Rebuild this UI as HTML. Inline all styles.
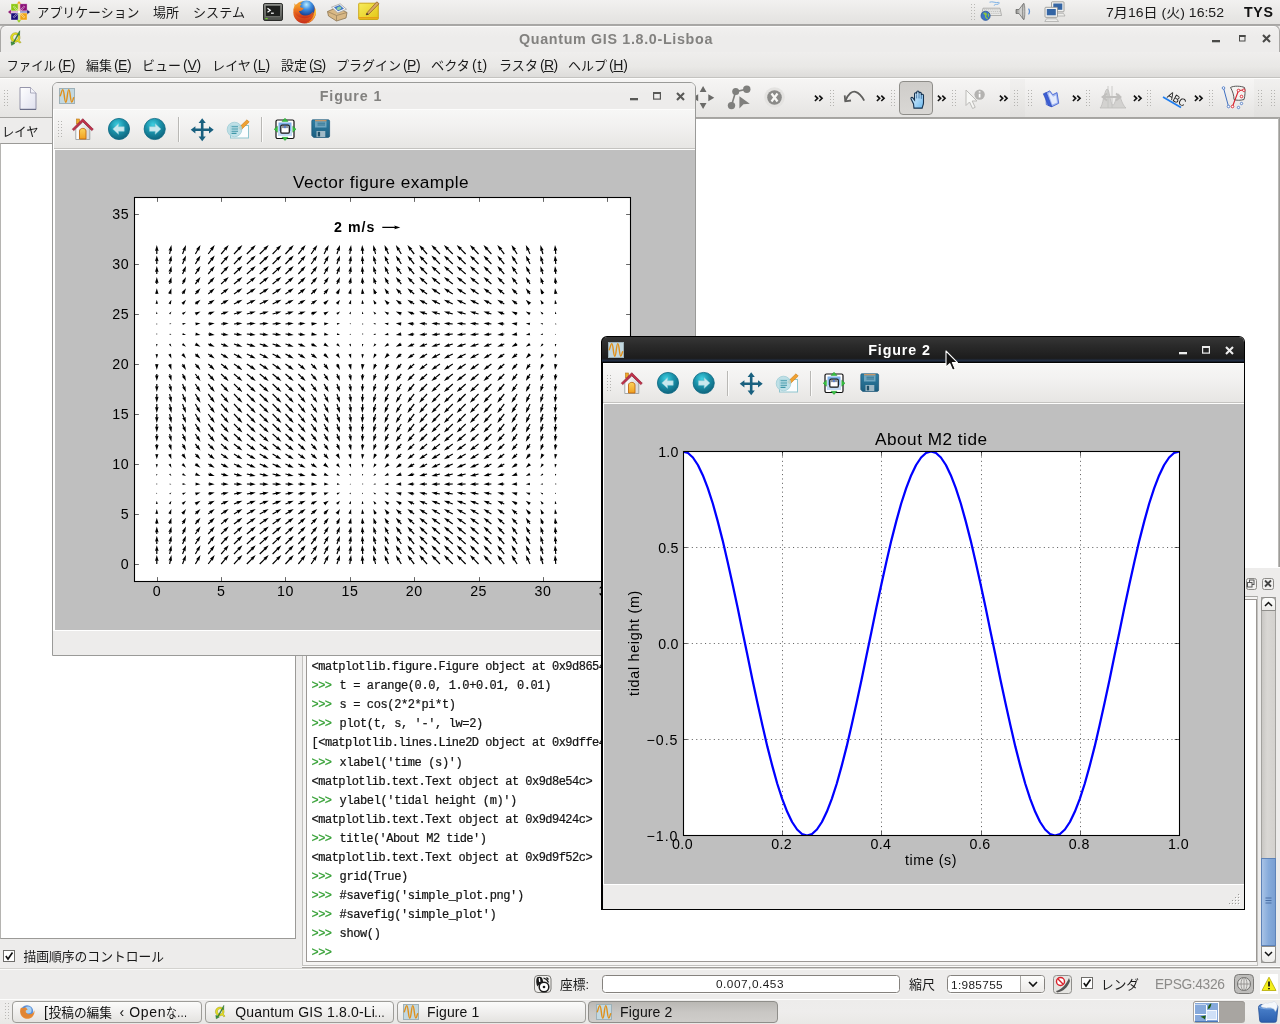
<!DOCTYPE html>
<html lang="ja"><head><meta charset="utf-8"><title>Quantum GIS 1.8.0-Lisboa</title>
<style>
html,body{margin:0;padding:0;background:#edeceb;}
body{width:1280px;height:1024px;overflow:hidden;font-family:"Liberation Sans",sans-serif;}
#screen{will-change:transform;position:relative;width:1280px;height:1024px;overflow:hidden;background:#edeceb;}
#screen div,#screen span.t,#screen svg.a{position:absolute;box-sizing:border-box;}
span.t{white-space:pre;font-family:"Liberation Sans",sans-serif;display:block;}
span.b{font-weight:bold;}
span.m{font-family:"Liberation Mono",monospace;-webkit-text-stroke:.22px currentColor;}
svg{display:block;overflow:visible;}
u{text-decoration:underline;}
svg text.j{font-family:"Liberation Sans","Noto Sans CJK JP",sans-serif;}

</style></head>
<body>
<div id="screen">
<div style="left:0px;top:0px;width:1280px;height:24px;background:linear-gradient(#f2f1f0,#e9e8e6 60%,#e3e2e0);"></div>
<div style="left:0px;top:24px;width:1280px;height:2px;background:linear-gradient(#a3a2a0,#b3b2b0);"></div>
<svg class="a" style="left:8px;top:1px;" width="22" height="22">
<path d="M11 0L13.400 3H8.600z" fill="#efa724"/><path d="M22 10.900L19 13.400V8.400z" fill="#262577"/><path d="M11 21.800L8.600 18.800H13.400z" fill="#9ccd2a"/><path d="M0 10.900L3 8.400V13.400z" fill="#932279"/>
<rect x="10.100" y="2.800" width="1.900" height="7.200" fill="#f7cf8a"/><rect x="10.100" y="12" width="1.900" height="7" fill="#cbe88f"/>
<rect x="3" y="10" width="7.200" height="1.900" fill="#d9a3cf"/><rect x="12" y="10" width="7" height="1.900" fill="#8f8cc4"/>
<rect x="3" y="2.800" width="7.100" height="7.100" fill="#8cc811"/><rect x="12" y="2.800" width="7.100" height="7.100" fill="#8b1078"/>
<rect x="3" y="12" width="7.100" height="7" fill="#1a0d7a"/><rect x="12" y="12" width="7.100" height="7" fill="#efa315"/>
<g stroke="#fff" stroke-width="2.300" opacity=".55" stroke-dasharray=".9 .7"><path d="M5.500 5.300L10.100 9.900M16.500 5.300L12 9.900M5.500 16.500L10.100 12M16.500 16.500L12 12"/></g>
<g fill="none" stroke="#fff" stroke-width=".7" opacity=".55"><rect x="3" y="2.800" width="7.100" height="7.100"/><rect x="12" y="2.800" width="7.100" height="7.100"/><rect x="3" y="12" width="7.100" height="7"/><rect x="12" y="12" width="7.100" height="7"/></g>
<circle cx="11.050" cy="10.950" r="1.200" fill="#fff" opacity=".9"/></svg>
<svg class="a" style="left:36px;top:3px" width="105" height="19" role="img" aria-label="アプリケーション"><text class="j" x="0.500" y="14" font-size="13" fill="#1a1a1a" textLength="103" lengthAdjust="spacingAndGlyphs">アプリケーション</text></svg>
<svg class="a" style="left:153px;top:3px" width="28" height="19" role="img" aria-label="場所"><text class="j" x="0" y="14" font-size="13" fill="#1a1a1a" textLength="26" lengthAdjust="spacingAndGlyphs">場所</text></svg>
<svg class="a" style="left:193px;top:3px" width="54" height="19" role="img" aria-label="システム"><text class="j" x="0" y="14" font-size="13" fill="#1a1a1a" textLength="52" lengthAdjust="spacingAndGlyphs">システム</text></svg>
<svg class="a" style="left:263px;top:3px;" width="20" height="18">
<defs><linearGradient id="tg" x1="0" y1="0" x2="0" y2="1"><stop offset="0" stop-color="#8f918c"/><stop offset="1" stop-color="#4b4d49"/></linearGradient></defs>
<rect x=".5" y=".5" width="19" height="17" rx="1.6" fill="url(#tg)" stroke="#2b2c2a"/>
<rect x="2.500" y="2.500" width="15" height="11" fill="#1f201e" stroke="#8a8c87" stroke-width=".6"/>
<path d="M4.500 5.200L7.300 7.200L4.500 9.200" fill="none" stroke="#fff" stroke-width="1.200"/>
<path d="M8 10.200H10.800" stroke="#fff" stroke-width="1.200"/>
<rect x="2.300" y="15" width="2.400" height="1.200" fill="#6fd12a"/></svg>
<svg class="a" style="left:292px;top:0px;" width="26" height="24">
<defs>
<radialGradient id="fg" cx=".5" cy=".25" r=".75"><stop offset="0" stop-color="#b9ecff"/><stop offset=".4" stop-color="#3f8fe0"/><stop offset="1" stop-color="#0f2f86"/></radialGradient>
<linearGradient id="fo" x1="0" y1="0" x2="0" y2="1"><stop offset="0" stop-color="#f6a52b"/><stop offset=".55" stop-color="#e8681c"/><stop offset="1" stop-color="#c62d1c"/></linearGradient>
<linearGradient id="fy" x1="0" y1="0" x2="0" y2="1"><stop offset="0" stop-color="#fbe04a"/><stop offset="1" stop-color="#f08a1e"/></linearGradient>
</defs>
<circle cx="12.600" cy="12.200" r="11.300" fill="url(#fo)"/>
<path d="M23.600 8.500c1 3.300.3 7.200-2 10.300c-2 2.700-5 4.400-8.300 4.700c4.600-1.800 7.800-5.400 8.800-9.600c.3-1.800.9-3.500 1.500-5.400z" fill="url(#fy)"/>
<circle cx="14.400" cy="8.700" r="8.200" fill="url(#fg)"/>
<path d="M1.600 9.500C2.200 5.600 5.800 2.800 9.800 3.900C8.600 4.700 8 5.800 8.200 6.900C9.300 7.700 10.600 8.100 11.900 8L10.500 9.800C9.600 10.900 8.200 11.300 6.900 11C7.500 13.600 10 15.500 13.200 15.600C16.500 15.700 19.500 14 21.300 11.600C20.500 16 17 18.500 12.500 18.300C6.500 18 2 14.500 1.600 9.500z" fill="url(#fo)"/>
<path d="M2.600 3.300c-.3.900-.3 1.800 0 2.700c-.7 1.100-1 2.300-1 3.500L4.500 6.500C4 5.300 3.300 4.300 2.600 3.300z" fill="#f09a28"/></svg>
<svg class="a" style="left:326px;top:3px;" width="22" height="19">
<path d="M1.500 8.500L11 4.500L21 9.500L20 15L10.500 18L2.500 13z" fill="#d9b885" stroke="#8a7350" stroke-width=".8"/>
<path d="M1.500 8.500L10.500 12.500L21 9.500M10.500 12.500V18" fill="none" stroke="#9c8460" stroke-width=".8"/>
<path d="M5.500 4.200L14.200 .8L20.500 6.200L11.800 10z" fill="#f4f4f2" stroke="#9a9a98" stroke-width=".7"/>
<path d="M8 4.300L13.800 2.100L18 5.700L12 8.200z" fill="#3f74c8"/>
<ellipse cx="13" cy="5.300" rx="2.400" ry="1.600" fill="#8fd0a0" transform="rotate(-18 13 5.300)"/></svg>
<svg class="a" style="left:358px;top:1px;" width="23" height="21">
<defs><linearGradient id="ng" x1="0" y1="0" x2="1" y2="1"><stop offset="0" stop-color="#f7ec5c"/><stop offset="1" stop-color="#e3c614"/></linearGradient></defs>
<rect x=".7" y="2.200" width="19.600" height="16.300" rx=".8" fill="url(#ng)" stroke="#c9a30c" stroke-width=".9"/>
<path d="M.7 16.800H20.300" stroke="#e8a117" stroke-width="1.600"/>
<path d="M8.800 12L18.800 .8L21 2.700L10.800 13.200L8.200 13.900z" fill="#d9a866" stroke="#8a5a22" stroke-width=".7"/>
<path d="M8.800 12L8.200 13.900L10.800 13.200z" fill="#222"/></svg>
<svg class="a" style="left:970px;top:4px;" width="6" height="18"><g fill="#b9b8b5"><rect x="1" y="0" width="1" height="1"/><rect x="1" y="3" width="1" height="1"/><rect x="1" y="6" width="1" height="1"/><rect x="1" y="9" width="1" height="1"/><rect x="1" y="12" width="1" height="1"/><rect x="1" y="15" width="1" height="1"/><rect x="4" y="0" width="1" height="1"/><rect x="4" y="3" width="1" height="1"/><rect x="4" y="6" width="1" height="1"/><rect x="4" y="9" width="1" height="1"/><rect x="4" y="12" width="1" height="1"/><rect x="4" y="15" width="1" height="1"/></g></svg>
<svg class="a" style="left:980px;top:1px;" width="24" height="21">
<path d="M9.500 1.200c3-1.200 6 1 9 .2c1.200-.3 1 1.300-.5 1.800c-2 .6-3.500-.4-3.800 1.500" fill="none" stroke="#7fb2e6" stroke-width="1"/>
<path d="M3 7.200H20L21.500 14.500H1.500z" fill="#e9e9e7" stroke="#a2a2a0" stroke-width=".8"/>
<path d="M4 8.800H19.500M3.500 10.600H20M3 12.400H20.500" stroke="#bdbdbb" stroke-width=".9" stroke-dasharray="1.200 .7"/>
<circle cx="5.600" cy="14.800" r="4.600" fill="#3b74c4" stroke="#244f94" stroke-width=".7"/>
<path d="M3.500 12.500c1-.8 2.500-.5 2.800.6c.3 1.100-1 1.400-.8 2.600c.2 1 1.500 1.300 2.100 2.300M8 12.800c.9.700 1 2 .3 2.800" fill="#8dc63f" stroke="#8dc63f" stroke-width="1.100"/></svg>
<svg class="a" style="left:1015px;top:1px;" width="18" height="22">
<defs><linearGradient id="vg" x1="0" y1="0" x2="1" y2="0"><stop offset="0" stop-color="#8c8c8a"/><stop offset=".6" stop-color="#dcdcda"/><stop offset="1" stop-color="#6f6f6d"/></linearGradient></defs>
<path d="M1 8.500H4L8.500 2.500C9.800 6 9.800 15 8.500 18.500L4 12.500H1z" fill="url(#vg)" stroke="#5f5f5d" stroke-width=".7"/>
<ellipse cx="8.800" cy="10.500" rx="1.100" ry="8.300" fill="#cfcfcd" stroke="#6a6a68" stroke-width=".6"/>
<path d="M13.500 7.600c1.300 1.500 1.300 4.300 0 5.800" fill="none" stroke="#5b8fd6" stroke-width="1.300"/></svg>
<svg class="a" style="left:1044px;top:1px;" width="23" height="22">
<g>
<rect x="7.500" y=".8" width="12.500" height="10" rx=".8" fill="#f1f1ef" stroke="#8e8e8c" stroke-width=".8"/>
<rect x="9.300" y="2.500" width="9" height="6.300" fill="#3465a4"/>
<path d="M11 12.300H19.500L21 15H10z" fill="#ededeb" stroke="#9a9a98" stroke-width=".6"/>
<rect x="1" y="6.300" width="12.500" height="10" rx=".8" fill="#f1f1ef" stroke="#8e8e8c" stroke-width=".8"/>
<rect x="2.800" y="8" width="9" height="6.300" fill="#3465a4"/>
<path d="M2.500 17.800H12.500L14.500 20.500H.8z" fill="#ededeb" stroke="#9a9a98" stroke-width=".6"/>
</g></svg>
<svg class="a" style="left:1105.3px;top:3px" width="122" height="19" role="img" aria-label="7月16日 (火) 16:52"><text class="j" x="1" y="14" font-size="13" fill="#1a1a1a" textLength="118" lengthAdjust="spacingAndGlyphs">7月16日 (火) 16:52</text></svg>
<span class="t b" style="left:1244.00px;top:4px;font-size:14.2px;line-height:16px;color:#111;letter-spacing:0.635px;">TYS</span>
<div style="left:0px;top:999px;width:1280px;height:25px;background:linear-gradient(#edeceb,#eeedec 50%,#e9e8e6);border-top:1px solid #fdfdfc;"></div>
<svg class="a" style="left:4px;top:1003px;" width="6" height="18"><g fill="#b9b8b5"><rect x="1" y="0" width="1" height="1"/><rect x="1" y="3" width="1" height="1"/><rect x="1" y="6" width="1" height="1"/><rect x="1" y="9" width="1" height="1"/><rect x="1" y="12" width="1" height="1"/><rect x="1" y="15" width="1" height="1"/><rect x="4" y="0" width="1" height="1"/><rect x="4" y="3" width="1" height="1"/><rect x="4" y="6" width="1" height="1"/><rect x="4" y="9" width="1" height="1"/><rect x="4" y="12" width="1" height="1"/><rect x="4" y="15" width="1" height="1"/></g></svg>
<div style="left:12px;top:1001px;width:190px;height:22px;background:linear-gradient(#fbfbfa,#efeeed 55%,#e4e3e0);border:1px solid #9d9c98;border-radius:4px;"></div>
<div style="left:205px;top:1001px;width:189px;height:22px;background:linear-gradient(#fbfbfa,#efeeed 55%,#e4e3e0);border:1px solid #9d9c98;border-radius:4px;"></div>
<div style="left:397px;top:1001px;width:189px;height:22px;background:linear-gradient(#fbfbfa,#efeeed 55%,#e4e3e0);border:1px solid #9d9c98;border-radius:4px;"></div>
<div style="left:588px;top:1001px;width:190px;height:22px;background:linear-gradient(#bab8b4,#c9c7c4 50%,#cfcdca);border:1px solid #8f8e8a;border-radius:4px;"></div>
<svg class="a" style="left:19px;top:1003.5px;" width="16" height="16"><circle cx="8" cy="7.500" r="6.200" fill="#5a8fd8"/><circle cx="9" cy="6" r="3.600" fill="#a9d2f5"/>
<path d="M1.800 4C.6 6.500 .8 10 3 12.500c2.500 2.700 6.800 3 9.600.9c2.300-1.700 3.300-4.400 2.700-7.200c-.2 1.400-.8 2.400-1.700 3.100c-1.800 1.500-4.600 1.400-6.100-.2c-.8-.9-.9-1.900-.6-2.700l1.800-.9c-.9-.5-1.400-1.200-1.500-2c-1.200-.2-2.300 0-3.300.7c-.8-.4-1.500-.5-2.100-.2z" fill="#e8852b" opacity=".95"/></svg>
<span class="t" style="left:44.00px;top:1004px;font-size:14px;line-height:16px;color:#111;">[</span>
<svg class="a" style="left:48px;top:1003px" width="66" height="19" role="img" aria-label="投稿の編集"><text class="j" x="0.500" y="14" font-size="13" fill="#111" textLength="63.500" lengthAdjust="spacingAndGlyphs">投稿の編集</text></svg>
<span class="t" style="left:119.60px;top:1004px;font-size:14px;line-height:16px;color:#111;">‹</span>
<span class="t" style="left:129.30px;top:1004px;font-size:14px;line-height:16px;color:#111;letter-spacing:0.688px;">Open</span>
<svg class="a" style="left:165.5px;top:1003px" width="24" height="19" role="img" aria-label="な…"><text class="j" x="0" y="14" font-size="13" fill="#111" textLength="21.500" lengthAdjust="spacingAndGlyphs">な…</text></svg>
<svg class="a" style="left:213px;top:1004px;" width="13" height="16" viewBox="0 0 15 16"><path d="M7.800 2.300c-3 .2-5.200 2.600-5 5.600c.2 2.800 2.600 4.800 5.300 4.600c1-.1 1.800-.4 2.500-.9l1.600 1.800l1.700-.6l-2-2.400c.7-1 1-2.100.9-3.400c-.2-2.800-2.400-4.900-5-4.700zm.2 2c1.500-.1 2.800 1.100 2.900 2.800c.1 1.800-1 3.200-2.600 3.300c-1.600.1-3-1.100-3.100-2.800c-.1-1.800 1.100-3.200 2.800-3.300z" fill="#e8e020" stroke="#8a8a10" stroke-width=".5"/>
<path d="M12.500 .3L10.200 4.200L5.500 12.700L3.200 12L3.800 15.800L7.300 13.800L6.300 13.100L11 4.700L12.300 5.100z" fill="#3a9a3a" stroke="#1e5a1e" stroke-width=".5"/></svg>
<span class="t" style="left:235.30px;top:1004px;font-size:14px;line-height:16px;color:#111;letter-spacing:0.181px;">Quantum GIS 1.8.0-Li</span>
<svg class="a" style="left:373.5px;top:1003px" width="13" height="19" role="img" aria-label="…"><text class="j" x="0" y="14" font-size="13" fill="#111" textLength="11" lengthAdjust="spacingAndGlyphs">…</text></svg>
<svg class="a" style="left:403px;top:1004px;" width="16" height="16"><rect x=".5" y=".5" width="15" height="15" fill="#c3d8e0" stroke="#9eb1b8"/><path d="M1.300 7.800C2.300 5.500 2.800 1.600 3.800 1.600C5.300 1.600 5.300 14.300 6.800 14.300C8.300 14.300 8.300 1.600 9.800 1.600C11.300 1.600 11.300 14 12.800 14C13.800 14 14 10.500 14.700 9.700" fill="none" stroke="#e0901a" stroke-width="1.400" stroke-linecap="round"/></svg>
<span class="t" style="left:427.00px;top:1004px;font-size:14px;line-height:16px;color:#111;letter-spacing:0.143px;">Figure 1</span>
<svg class="a" style="left:596px;top:1004px;" width="16" height="16"><rect x=".5" y=".5" width="15" height="15" fill="#c3d8e0" stroke="#9eb1b8"/><path d="M1.300 7.800C2.300 5.500 2.800 1.600 3.800 1.600C5.300 1.600 5.300 14.300 6.800 14.300C8.300 14.300 8.300 1.600 9.800 1.600C11.300 1.600 11.300 14 12.800 14C13.800 14 14 10.500 14.700 9.700" fill="none" stroke="#e0901a" stroke-width="1.400" stroke-linecap="round"/></svg>
<span class="t" style="left:620.00px;top:1004px;font-size:14px;line-height:16px;color:#111;letter-spacing:0.143px;">Figure 2</span>
<div style="left:1193px;top:1001px;width:52px;height:21.5px;background:#a8a5a1;border-radius:3.500px;box-shadow:inset 0 1px 0 #9a9793;"></div>
<div style="left:1193.5px;top:1001.5px;width:25px;height:20.5px;background:#fff;border-radius:2px 0 0 2px;"></div>
<div style="left:1194.5px;top:1002.5px;width:23.5px;height:18.2px;background:#86a9db;"></div>
<div style="left:1194.5px;top:1020.5px;width:23.5px;height:1.3px;background:#4a77b8;"></div>
<div style="left:1194.5px;top:1013.8px;width:11.5px;height:1px;background:#fff;"></div>
<div style="left:1205.8px;top:1004.5px;width:1px;height:16px;background:#fff;"></div>
<div style="left:1194.5px;top:1003.6px;width:11.5px;height:1px;background:#fff;opacity:.55;"></div>
<div style="left:1206.3px;top:1009.5px;width:11.2px;height:10px;background:#cfe0f7;border:1px solid #f4f8fd;"></div>
<svg class="a" style="left:1206.5px;top:1003.3px;" width="5" height="7"><path d="M4.300 .3C2 1.500 .8 3.500 .8 6L2.800 5.200C3.800 3.800 4.300 2 4.300 .3z" fill="#1d5c16"/></svg>
<svg class="a" style="left:1199.5px;top:1014.5px;" width="7" height="5"><path d="M.3 1.800C2.500 .8 4.500 .8 5.800 .4C5.600 2 5.300 3.300 4.800 4.500C3.500 3 2 2.200 .3 1.800z" fill="#1d5c16"/></svg>
<svg class="a" style="left:1257px;top:1000.5px;" width="23" height="23"><defs><linearGradient id="trg" x1="0" y1="0" x2="0" y2="1"><stop offset="0" stop-color="#4f86cf"/><stop offset="1" stop-color="#2c5fae"/></linearGradient></defs>
<path d="M1.500 6.500C1.500 4.500 3 3.500 5 3.500H18C20 3.500 21 5 20.800 6.500L19.600 19.500C19.500 20.800 18.500 21.300 17.500 21.300H4.800C3.500 21.300 2.800 20.500 2.700 19.500z" fill="url(#trg)" stroke="#244f96" stroke-width=".8"/>
<path d="M2 6C5 8.500 17 8.500 20.500 6" fill="none" stroke="#7fa9e2" stroke-width="1"/>
<path d="M4 5.500C4.500 3 6.500 3.800 7.500 2.500C8.500 1.200 10 3 11.500 2C13 .8 14 2.200 15 1.500C16.500 .5 17.500 -.2 18.500 1.200C19.500 2.500 20.500 3.500 20.300 5.500C20 7.500 19.300 9.500 18.300 10.500C17.800 8 15 6.500 12 6.800C9 7 6 7 4 5.500z" fill="#f4f7fb" stroke="#c9d3e0" stroke-width=".5"/></svg>
<div style="left:0px;top:26px;width:1280px;height:26px;background:linear-gradient(#f1f0ef,#edeceb 40%,#edeceb);border-top:1px solid #fbfbfa;border-radius:6px 6px 0 0;"></div>
<div style="left:0px;top:25px;width:1280px;height:27px;border-left:1px solid #a9a8a6;border-right:1px solid #a9a8a6;border-top:1px solid #a9a8a6;border-radius:6px 6px 0 0;"></div>
<svg class="a" style="left:8px;top:30px;" width="15" height="16" viewBox="0 0 16 16"><path d="M7.800 2.300c-3 .2-5.200 2.600-5 5.600c.2 2.800 2.600 4.800 5.300 4.600c1-.1 1.800-.4 2.500-.9l1.600 1.800l1.700-.6l-2-2.400c.7-1 1-2.100.9-3.400c-.2-2.800-2.400-4.900-5-4.700zm.2 2c1.500-.1 2.800 1.100 2.900 2.800c.1 1.800-1 3.200-2.600 3.300c-1.600.1-3-1.100-3.100-2.800c-.1-1.800 1.100-3.200 2.800-3.300z" fill="#e8e020" stroke="#8a8a10" stroke-width=".5"/>
<path d="M12.500 .3L10.200 4.200L5.500 12.700L3.200 12L3.800 15.800L7.300 13.800L6.300 13.100L11 4.700L12.300 5.100z" fill="#3a9a3a" stroke="#1e5a1e" stroke-width=".5"/></svg>
<span class="t b" style="left:519.00px;top:31px;font-size:14.3px;line-height:16px;color:#82817f;letter-spacing:0.669px;">Quantum GIS 1.8.0-Lisboa</span>
<svg class="a" style="left:1212px;top:39.8px;" width="9" height="3"><rect x="0" y="0" width="8" height="2.300" fill="#4a4a48"/></svg>
<svg class="a" style="left:1238.5px;top:34.5px;" width="8" height="8"><rect x=".5" y=".5" width="5.500" height="5.500" fill="none" stroke="#4a4a48"/><rect x="0" y="0" width="6.500" height="2" fill="#4a4a48"/></svg>
<svg class="a" style="left:1261.5px;top:34px;" width="9" height="9"><path d="M1 1L8 8M8 1L1 8" stroke="#4a4a48" stroke-width="2.100" fill="none"/></svg>
<div style="left:0px;top:52px;width:1280px;height:26px;background:linear-gradient(#efeeed,#e9e8e6 60%,#dddcda);border-bottom:1px solid #c4c3c0;"></div>
<svg class="a" style="left:6px;top:56px" width="52" height="19" role="img" aria-label="ファイル"><text class="j" x="0.500" y="14" font-size="13" fill="#1a1a1a" textLength="49.500" lengthAdjust="spacingAndGlyphs">ファイル</text></svg>
<span class="t" style="left:58.00px;top:57px;font-size:14px;line-height:16px;color:#1a1a1a;letter-spacing:-0.297px;">(<u>F</u>)</span>
<svg class="a" style="left:86px;top:56px" width="28" height="19" role="img" aria-label="編集"><text class="j" x="0" y="14" font-size="13" fill="#1a1a1a" textLength="26" lengthAdjust="spacingAndGlyphs">編集</text></svg>
<span class="t" style="left:114.00px;top:57px;font-size:14px;line-height:16px;color:#1a1a1a;letter-spacing:-0.557px;">(<u>E</u>)</span>
<svg class="a" style="left:142px;top:56px" width="41" height="19" role="img" aria-label="ビュー"><text class="j" x="0" y="14" font-size="13" fill="#1a1a1a" textLength="39" lengthAdjust="spacingAndGlyphs">ビュー</text></svg>
<span class="t" style="left:183.00px;top:57px;font-size:14px;line-height:16px;color:#1a1a1a;letter-spacing:-0.224px;">(<u>V</u>)</span>
<svg class="a" style="left:212px;top:56px" width="41" height="19" role="img" aria-label="レイヤ"><text class="j" x="0" y="14" font-size="13" fill="#1a1a1a" textLength="39" lengthAdjust="spacingAndGlyphs">レイヤ</text></svg>
<span class="t" style="left:253.00px;top:57px;font-size:14px;line-height:16px;color:#1a1a1a;letter-spacing:-0.042px;">(<u>L</u>)</span>
<svg class="a" style="left:281px;top:56px" width="28" height="19" role="img" aria-label="設定"><text class="j" x="0" y="14" font-size="13" fill="#1a1a1a" textLength="26" lengthAdjust="spacingAndGlyphs">設定</text></svg>
<span class="t" style="left:309.00px;top:57px;font-size:14px;line-height:16px;color:#1a1a1a;letter-spacing:-0.724px;">(<u>S</u>)</span>
<svg class="a" style="left:336px;top:56px" width="67" height="19" role="img" aria-label="プラグイン"><text class="j" x="0" y="14" font-size="13" fill="#1a1a1a" textLength="65" lengthAdjust="spacingAndGlyphs">プラグイン</text></svg>
<span class="t" style="left:403.00px;top:57px;font-size:14px;line-height:16px;color:#1a1a1a;letter-spacing:-0.557px;">(<u>P</u>)</span>
<svg class="a" style="left:431px;top:56px" width="41" height="19" role="img" aria-label="ベクタ"><text class="j" x="0" y="14" font-size="13" fill="#1a1a1a" textLength="39" lengthAdjust="spacingAndGlyphs">ベクタ</text></svg>
<span class="t" style="left:472.00px;top:57px;font-size:14px;line-height:16px;color:#1a1a1a;letter-spacing:0.927px;">(<u>t</u>)</span>
<svg class="a" style="left:499px;top:56px" width="41" height="19" role="img" aria-label="ラスタ"><text class="j" x="0" y="14" font-size="13" fill="#1a1a1a" textLength="39" lengthAdjust="spacingAndGlyphs">ラスタ</text></svg>
<span class="t" style="left:540.00px;top:57px;font-size:14px;line-height:16px;color:#1a1a1a;letter-spacing:-0.646px;">(<u>R</u>)</span>
<svg class="a" style="left:568px;top:56px" width="41" height="19" role="img" aria-label="ヘルプ"><text class="j" x="0" y="14" font-size="13" fill="#1a1a1a" textLength="39" lengthAdjust="spacingAndGlyphs">ヘルプ</text></svg>
<span class="t" style="left:609.00px;top:57px;font-size:14px;line-height:16px;color:#1a1a1a;letter-spacing:-0.312px;">(<u>H</u>)</span>
<div style="left:0px;top:78px;width:1280px;height:40px;background:linear-gradient(#f6f5f4,#efeeed 45%,#e5e4e2);border-top:1px solid #fcfcfb;border-bottom:1px solid #a5a4a1;"></div>
<div style="left:1254px;top:79px;width:26px;height:38px;background:linear-gradient(#f1f0ef,#ebeae8 45%,#e1e0de);"></div>
<svg class="a" style="left:3px;top:89.5px;" width="6" height="18"><g fill="#b5b4b1"><rect x="1" y="0" width="1" height="1"/><rect x="1" y="3" width="1" height="1"/><rect x="1" y="6" width="1" height="1"/><rect x="1" y="9" width="1" height="1"/><rect x="1" y="12" width="1" height="1"/><rect x="1" y="15" width="1" height="1"/><rect x="4" y="0" width="1" height="1"/><rect x="4" y="3" width="1" height="1"/><rect x="4" y="6" width="1" height="1"/><rect x="4" y="9" width="1" height="1"/><rect x="4" y="12" width="1" height="1"/><rect x="4" y="15" width="1" height="1"/></g></svg>
<svg class="a" style="left:19px;top:87px;" width="18" height="24"><defs><linearGradient id="pg" x1="0" y1="0" x2="1" y2="1"><stop offset="0" stop-color="#ffffff"/><stop offset="1" stop-color="#dfe0ee"/></linearGradient></defs>
<path d="M1 .5H11.500L17 6V22.500H1z" fill="url(#pg)" stroke="#8a8aa2" stroke-width=".9"/><path d="M1 22.300H17" stroke="#5f6580" stroke-width="1"/>
<path d="M11.500 .5V6H17" fill="#f4f4fa" stroke="#9a9aae" stroke-width=".8"/></svg>
<svg class="a" style="left:692px;top:86px;" width="24" height="24"><path d="M11.100 .1L14.500 5.900H7.700zM11.100 22.900L14.500 17.100H7.700zM22.300 11.700L16.300 8.200V15.200zM.2 11.700L6.200 8.200V15.200z" fill="#6a6a68"/></svg>
<svg class="a" style="left:727px;top:85px;" width="26" height="26"><path d="M8.700 6.600L19.500 4.200M8.700 6.600L4.500 20.500" stroke="#7f7f7d" stroke-width="1.600"/>
<circle cx="8.700" cy="6.600" r="3.500" fill="#7f7f7d"/><circle cx="19.800" cy="4.200" r="3.700" fill="#7f7f7d"/><circle cx="4.500" cy="20.600" r="3.700" fill="#7f7f7d"/>
<path d="M12.400 11.300L22.800 18.800L16.500 19.200L12.400 23.500z" fill="#7f7f7d"/></svg>
<svg class="a" style="left:764px;top:87px;" width="22" height="22"><circle cx="10.500" cy="10.500" r="10.300" fill="#e4e3e1"/><circle cx="10.500" cy="10.500" r="7.300" fill="#8b8b89"/>
<path d="M7.500 6.500L13.500 14.500M13.500 6.500L7.500 14.500" stroke="#f7f7f5" stroke-width="2.200"/></svg>
<svg class="a" style="left:813.7px;top:95px;" width="10" height="7"><path d="M.9 .6L3.700 3.300L.9 6M5.300 .6L8.100 3.300L5.300 6" fill="none" stroke="#111" stroke-width="1.600"/></svg>
<svg class="a" style="left:829px;top:89.5px;" width="6" height="18"><g fill="#b5b4b1"><rect x="1" y="0" width="1" height="1"/><rect x="1" y="3" width="1" height="1"/><rect x="1" y="6" width="1" height="1"/><rect x="1" y="9" width="1" height="1"/><rect x="1" y="12" width="1" height="1"/><rect x="1" y="15" width="1" height="1"/><rect x="4" y="0" width="1" height="1"/><rect x="4" y="3" width="1" height="1"/><rect x="4" y="6" width="1" height="1"/><rect x="4" y="9" width="1" height="1"/><rect x="4" y="12" width="1" height="1"/><rect x="4" y="15" width="1" height="1"/></g></svg>
<svg class="a" style="left:843px;top:88px;" width="24" height="18"><path d="M2.400 13C5 5.500 9.500 3 12.500 3.800C16 4.700 19 8.500 21.200 12.600" fill="none" stroke="#5f5f5d" stroke-width="1.800"/><path d="M1.700 7.300L2.300 13.300L8 12.500" fill="none" stroke="#5f5f5d" stroke-width="1.800"/></svg>
<svg class="a" style="left:875.7px;top:95px;" width="10" height="7"><path d="M.9 .6L3.700 3.300L.9 6M5.300 .6L8.100 3.300L5.300 6" fill="none" stroke="#111" stroke-width="1.600"/></svg>
<svg class="a" style="left:890px;top:89.5px;" width="6" height="18"><g fill="#b5b4b1"><rect x="1" y="0" width="1" height="1"/><rect x="1" y="3" width="1" height="1"/><rect x="1" y="6" width="1" height="1"/><rect x="1" y="9" width="1" height="1"/><rect x="1" y="12" width="1" height="1"/><rect x="1" y="15" width="1" height="1"/><rect x="4" y="0" width="1" height="1"/><rect x="4" y="3" width="1" height="1"/><rect x="4" y="6" width="1" height="1"/><rect x="4" y="9" width="1" height="1"/><rect x="4" y="12" width="1" height="1"/><rect x="4" y="15" width="1" height="1"/></g></svg>
<div style="left:899px;top:81px;width:34px;height:34px;background:linear-gradient(#cfcdca,#d9d7d4);border:1px solid #8e8d89;border-radius:4px;"></div>
<svg class="a" style="left:909px;top:90px;" width="17" height="19" viewBox="0 0 17 22.500"><defs><linearGradient id="hg" x1="0" y1="0" x2="1" y2="1"><stop offset="0" stop-color="#f2f9fe"/><stop offset="1" stop-color="#6ab8ee"/></linearGradient></defs>
<path d="M4.300 21.500L3.800 16.500L.8 10.500C.3 9 2 8 3 9.300L5 12V4.500C5 2.800 7.300 2.800 7.400 4.500L7.600 2.500C7.800 .8 10.200 .8 10.300 2.500V4C10.600 2.300 13 2.500 13 4.200V6C13.400 4.600 15.600 4.800 15.600 6.500V15C15.600 17.500 14.500 19 14 21.500z" fill="url(#hg)" stroke="#16324f" stroke-width="1.300"/>
<path d="M7.500 5V10M10.300 4.500V10M13 6V10.500" stroke="#2a5f95" stroke-width=".9"/></svg>
<svg class="a" style="left:936.7px;top:95px;" width="10" height="7"><path d="M.9 .6L3.700 3.300L.9 6M5.300 .6L8.100 3.300L5.300 6" fill="none" stroke="#111" stroke-width="1.600"/></svg>
<svg class="a" style="left:951px;top:89.5px;" width="6" height="18"><g fill="#b5b4b1"><rect x="1" y="0" width="1" height="1"/><rect x="1" y="3" width="1" height="1"/><rect x="1" y="6" width="1" height="1"/><rect x="1" y="9" width="1" height="1"/><rect x="1" y="12" width="1" height="1"/><rect x="1" y="15" width="1" height="1"/><rect x="4" y="0" width="1" height="1"/><rect x="4" y="3" width="1" height="1"/><rect x="4" y="6" width="1" height="1"/><rect x="4" y="9" width="1" height="1"/><rect x="4" y="12" width="1" height="1"/><rect x="4" y="15" width="1" height="1"/></g></svg>
<svg class="a" style="left:965px;top:89px;" width="22" height="22"><path d="M1 1V16.500L4.500 13L7.600 19.500L10.200 18.300L7.200 12H12z" fill="#f7f7f5" stroke="#bcbbb8" stroke-width="1"/>
<circle cx="14.600" cy="5.600" r="5.200" fill="#b4b3b1"/><path d="M14.600 4.800V8.600M14.600 2.300V3.500" stroke="#fff" stroke-width="1.700"/></svg>
<svg class="a" style="left:998.7px;top:95px;" width="10" height="7"><path d="M.9 .6L3.700 3.300L.9 6M5.300 .6L8.100 3.300L5.300 6" fill="none" stroke="#111" stroke-width="1.600"/></svg>
<div style="left:1010px;top:79px;width:15px;height:38px;background:linear-gradient(#f1f0ef,#ebeae8 45%,#e1e0de);"></div>
<svg class="a" style="left:1013px;top:89.5px;" width="6" height="18"><g fill="#b5b4b1"><rect x="1" y="0" width="1" height="1"/><rect x="1" y="3" width="1" height="1"/><rect x="1" y="6" width="1" height="1"/><rect x="1" y="9" width="1" height="1"/><rect x="1" y="12" width="1" height="1"/><rect x="1" y="15" width="1" height="1"/><rect x="4" y="0" width="1" height="1"/><rect x="4" y="3" width="1" height="1"/><rect x="4" y="6" width="1" height="1"/><rect x="4" y="9" width="1" height="1"/><rect x="4" y="12" width="1" height="1"/><rect x="4" y="15" width="1" height="1"/></g></svg>
<svg class="a" style="left:1026.5px;top:89.5px;" width="6" height="18"><g fill="#b5b4b1"><rect x="1" y="0" width="1" height="1"/><rect x="1" y="3" width="1" height="1"/><rect x="1" y="6" width="1" height="1"/><rect x="1" y="9" width="1" height="1"/><rect x="1" y="12" width="1" height="1"/><rect x="1" y="15" width="1" height="1"/><rect x="4" y="0" width="1" height="1"/><rect x="4" y="3" width="1" height="1"/><rect x="4" y="6" width="1" height="1"/><rect x="4" y="9" width="1" height="1"/><rect x="4" y="12" width="1" height="1"/><rect x="4" y="15" width="1" height="1"/></g></svg>
<svg class="a" style="left:1042px;top:89.5px;" width="18" height="18" viewBox="0 0 21 21"><path d="M4.500 3.500L9 1L12.500 5.500L17.500 3L19.500 15.500L11.500 19.500L5 17z" fill="#a3b8f2" stroke="#3f5fd0" stroke-width="1"/>
<path d="M7.500 4.500L9.300 3.300L13 8L16.300 6L17.500 14.500L12 17z" fill="#e4ebfd"/>
<path d="M1.500 4.500L5 2.800L11.500 19.500L7.500 18.200z" fill="#3b5ed6" stroke="#2a46b0" stroke-width=".7"/></svg>
<svg class="a" style="left:1071.7px;top:95px;" width="10" height="7"><path d="M.9 .6L3.700 3.300L.9 6M5.300 .6L8.100 3.300L5.300 6" fill="none" stroke="#111" stroke-width="1.600"/></svg>
<svg class="a" style="left:1085px;top:89.5px;" width="6" height="18"><g fill="#b5b4b1"><rect x="1" y="0" width="1" height="1"/><rect x="1" y="3" width="1" height="1"/><rect x="1" y="6" width="1" height="1"/><rect x="1" y="9" width="1" height="1"/><rect x="1" y="12" width="1" height="1"/><rect x="1" y="15" width="1" height="1"/><rect x="4" y="0" width="1" height="1"/><rect x="4" y="3" width="1" height="1"/><rect x="4" y="6" width="1" height="1"/><rect x="4" y="9" width="1" height="1"/><rect x="4" y="12" width="1" height="1"/><rect x="4" y="15" width="1" height="1"/></g></svg>
<svg class="a" style="left:1099px;top:85px;" width="28" height="25"><path d="M1 23C4 21 5 6 8 4C10.500 3.500 11 18 13.500 20C16 21.500 17 10 19 9C21.500 8.500 22 19 27 23z" fill="#d3d2d0" stroke="#bebdbb" stroke-width=".8"/>
<path d="M9 1V23M13 1V23" stroke="#c2c1bf" stroke-width=".8"/><path d="M5 12H20M8 8.500L3.500 12L8 15.500M17 8.500L21.500 12L17 15.500" fill="none" stroke="#c0bfbd" stroke-width="1.800"/></svg>
<svg class="a" style="left:1132.7px;top:95px;" width="10" height="7"><path d="M.9 .6L3.700 3.300L.9 6M5.300 .6L8.100 3.300L5.300 6" fill="none" stroke="#111" stroke-width="1.600"/></svg>
<svg class="a" style="left:1146px;top:89.5px;" width="6" height="18"><g fill="#b5b4b1"><rect x="1" y="0" width="1" height="1"/><rect x="1" y="3" width="1" height="1"/><rect x="1" y="6" width="1" height="1"/><rect x="1" y="9" width="1" height="1"/><rect x="1" y="12" width="1" height="1"/><rect x="1" y="15" width="1" height="1"/><rect x="4" y="0" width="1" height="1"/><rect x="4" y="3" width="1" height="1"/><rect x="4" y="6" width="1" height="1"/><rect x="4" y="9" width="1" height="1"/><rect x="4" y="12" width="1" height="1"/><rect x="4" y="15" width="1" height="1"/></g></svg>
<svg class="a" style="left:1160px;top:88px" width="28" height="22"><text x="6.500" y="9.300" font-family="Liberation Sans,sans-serif" font-size="10.500" fill="#111" transform="rotate(29 6.500 9.300)" textLength="19.500" lengthAdjust="spacingAndGlyphs">ABC</text><path d="M3 9L21 19.500" stroke="#1f7ef0" stroke-width="1.800"/></svg>
<svg class="a" style="left:1193.7px;top:95px;" width="10" height="7"><path d="M.9 .6L3.700 3.300L.9 6M5.300 .6L8.100 3.300L5.300 6" fill="none" stroke="#111" stroke-width="1.600"/></svg>
<svg class="a" style="left:1208px;top:89.5px;" width="6" height="18"><g fill="#b5b4b1"><rect x="1" y="0" width="1" height="1"/><rect x="1" y="3" width="1" height="1"/><rect x="1" y="6" width="1" height="1"/><rect x="1" y="9" width="1" height="1"/><rect x="1" y="12" width="1" height="1"/><rect x="1" y="15" width="1" height="1"/><rect x="4" y="0" width="1" height="1"/><rect x="4" y="3" width="1" height="1"/><rect x="4" y="6" width="1" height="1"/><rect x="4" y="9" width="1" height="1"/><rect x="4" y="12" width="1" height="1"/><rect x="4" y="15" width="1" height="1"/></g></svg>
<svg class="a" style="left:1221px;top:85px;" width="28" height="26"><path d="M9.500 2.500C13 .5 20 1 23.500 2.500C24.500 6 24 11 23 14.500C20 15.500 15 15.500 13 14.500C13 10 11.500 6 9.500 2.500z" fill="#f4f3f1" stroke="#555" stroke-width="1"/>
<path d="M2.500 3L7.500 21.500" stroke="#3f6fc0" stroke-width="1"/><circle cx="2.500" cy="3" r="1.300" fill="#fff" stroke="#3f6fc0" stroke-width=".8"/><circle cx="7.500" cy="21.500" r="1.300" fill="#fff" stroke="#3f6fc0" stroke-width=".8"/>
<path d="M11.500 21.500L17.500 5.500L23 5" fill="none" stroke="#d8202a" stroke-width="1.100"/>
<g fill="#fff" stroke="#d8202a" stroke-width=".9"><circle cx="11.500" cy="21.500" r="1.300"/><circle cx="17.500" cy="5.500" r="1.300"/><circle cx="22.800" cy="5.200" r="1.300"/><circle cx="20.500" cy="11.500" r="1.300"/></g>
<g fill="#fff" stroke="#3f6fc0" stroke-width=".8"><circle cx="17.500" cy="22.500" r="1.200"/><circle cx="20.500" cy="18.500" r="1.200"/></g></svg>
<svg class="a" style="left:1257px;top:89.5px;" width="6" height="18"><g fill="#b5b4b1"><rect x="1" y="0" width="1" height="1"/><rect x="1" y="3" width="1" height="1"/><rect x="1" y="6" width="1" height="1"/><rect x="1" y="9" width="1" height="1"/><rect x="1" y="12" width="1" height="1"/><rect x="1" y="15" width="1" height="1"/><rect x="4" y="0" width="1" height="1"/><rect x="4" y="3" width="1" height="1"/><rect x="4" y="6" width="1" height="1"/><rect x="4" y="9" width="1" height="1"/><rect x="4" y="12" width="1" height="1"/><rect x="4" y="15" width="1" height="1"/></g></svg>
<svg class="a" style="left:1270px;top:89.5px;" width="6" height="18"><g fill="#b5b4b1"><rect x="1" y="0" width="1" height="1"/><rect x="1" y="3" width="1" height="1"/><rect x="1" y="6" width="1" height="1"/><rect x="1" y="9" width="1" height="1"/><rect x="1" y="12" width="1" height="1"/><rect x="1" y="15" width="1" height="1"/><rect x="4" y="0" width="1" height="1"/><rect x="4" y="3" width="1" height="1"/><rect x="4" y="6" width="1" height="1"/><rect x="4" y="9" width="1" height="1"/><rect x="4" y="12" width="1" height="1"/><rect x="4" y="15" width="1" height="1"/></g></svg>
<div style="left:297px;top:118px;width:983px;height:450px;background:#fff;border-top:1px solid #a9a8a5;"></div>
<div style="left:1278px;top:118px;width:2px;height:449px;background:linear-gradient(90deg,#c9c8c5,#8f8e8b);"></div>
<svg class="a" style="left:2px;top:122px" width="39" height="19" role="img" aria-label="レイヤ"><text class="j" x="0" y="14" font-size="13" fill="#1a1a1a" textLength="36.500" lengthAdjust="spacingAndGlyphs">レイヤ</text></svg>
<div style="left:0px;top:143px;width:296px;height:796px;background:#fff;border:1px solid #9b9a97;border-left:1px solid #b5b4b1;"></div>
<div style="left:3px;top:950px;width:12px;height:12px;background:#fff;border:1px solid #6e6d6a;"></div>
<svg class="a" style="left:4px;top:951px;" width="10" height="10"><path d="M1.800 5L4 8L8.500 1.500" fill="none" stroke="#111" stroke-width="1.600"/></svg>
<svg class="a" style="left:23px;top:947px" width="143" height="19" role="img" aria-label="描画順序のコントロール"><text class="j" x="0.500" y="14" font-size="13" fill="#1a1a1a" textLength="140.500" lengthAdjust="spacingAndGlyphs">描画順序のコントロール</text></svg>
<div style="left:297px;top:568px;width:983px;height:400px;background:#edeceb;"></div>
<div style="left:1245.5px;top:577.5px;width:11.5px;height:12px;border:1px solid #8c8b88;border-radius:2.500px;background:#f1f0ef;"></div>
<svg class="a" style="left:1247.0px;top:579px;" width="8" height="9"><rect x="2.500" y="1" width="4.500" height="4.500" fill="none" stroke="#555" stroke-width="1"/><rect x=".5" y="3.500" width="4.500" height="4.500" fill="#f1f0ef" stroke="#555" stroke-width="1"/></svg>
<div style="left:1262px;top:577.5px;width:11.5px;height:12px;border:1px solid #8c8b88;border-radius:2.500px;background:#f1f0ef;"></div>
<svg class="a" style="left:1263.7px;top:579px;" width="8" height="9"><path d="M1 1.500L7 7.500M7 1.500L1 7.500" stroke="#444" stroke-width="1.800"/></svg>
<div style="left:302px;top:596px;width:956px;height:370px;background:#f5f4f3;border:1px solid #c2c1be;border-top-color:#a9a8a5;"></div>
<div style="left:302px;top:966px;width:978px;height:1px;background:#fbfbfa;"></div>
<div style="left:306px;top:599px;width:951px;height:363px;background:#fff;border:1px solid #9b9794;"></div>
<span class="t m" style="left:311.60px;top:660px;font-size:12px;line-height:14px;color:#141414;letter-spacing:-0.523px;">&lt;matplotlib.figure.Figure object at 0x9d8654c&gt;</span>
<span class="t m" style="left:311.60px;top:679px;font-size:12px;line-height:14px;color:#35a035;letter-spacing:-0.563px;">&gt;&gt;&gt;</span>
<span class="t m" style="left:339.60px;top:679px;font-size:12px;line-height:14px;color:#141414;letter-spacing:-0.382px;">t = arange(0.0, 1.0+0.01, 0.01)</span>
<span class="t m" style="left:311.60px;top:698px;font-size:12px;line-height:14px;color:#35a035;letter-spacing:-0.563px;">&gt;&gt;&gt;</span>
<span class="t m" style="left:339.60px;top:698px;font-size:12px;line-height:14px;color:#141414;letter-spacing:-0.381px;">s = cos(2*2*pi*t)</span>
<span class="t m" style="left:311.60px;top:717px;font-size:12px;line-height:14px;color:#35a035;letter-spacing:-0.563px;">&gt;&gt;&gt;</span>
<span class="t m" style="left:339.60px;top:717px;font-size:12px;line-height:14px;color:#141414;letter-spacing:-0.382px;">plot(t, s, '-', lw=2)</span>
<span class="t m" style="left:311.60px;top:736px;font-size:12px;line-height:14px;color:#141414;letter-spacing:-0.523px;">[&lt;matplotlib.lines.Line2D object at 0x9dffe4c&gt;]</span>
<span class="t m" style="left:311.60px;top:756px;font-size:12px;line-height:14px;color:#35a035;letter-spacing:-0.563px;">&gt;&gt;&gt;</span>
<span class="t m" style="left:339.60px;top:756px;font-size:12px;line-height:14px;color:#141414;letter-spacing:-0.381px;">xlabel('time (s)')</span>
<span class="t m" style="left:311.60px;top:775px;font-size:12px;line-height:14px;color:#141414;letter-spacing:-0.523px;">&lt;matplotlib.text.Text object at 0x9d8e54c&gt;</span>
<span class="t m" style="left:311.60px;top:794px;font-size:12px;line-height:14px;color:#35a035;letter-spacing:-0.563px;">&gt;&gt;&gt;</span>
<span class="t m" style="left:339.60px;top:794px;font-size:12px;line-height:14px;color:#141414;letter-spacing:-0.381px;">ylabel('tidal height (m)')</span>
<span class="t m" style="left:311.60px;top:813px;font-size:12px;line-height:14px;color:#141414;letter-spacing:-0.523px;">&lt;matplotlib.text.Text object at 0x9d9424c&gt;</span>
<span class="t m" style="left:311.60px;top:832px;font-size:12px;line-height:14px;color:#35a035;letter-spacing:-0.563px;">&gt;&gt;&gt;</span>
<span class="t m" style="left:339.60px;top:832px;font-size:12px;line-height:14px;color:#141414;letter-spacing:-0.532px;">title('About M2 tide')</span>
<span class="t m" style="left:311.60px;top:851px;font-size:12px;line-height:14px;color:#141414;letter-spacing:-0.523px;">&lt;matplotlib.text.Text object at 0x9d9f52c&gt;</span>
<span class="t m" style="left:311.60px;top:870px;font-size:12px;line-height:14px;color:#35a035;letter-spacing:-0.563px;">&gt;&gt;&gt;</span>
<span class="t m" style="left:339.60px;top:870px;font-size:12px;line-height:14px;color:#141414;letter-spacing:-0.382px;">grid(True)</span>
<span class="t m" style="left:311.60px;top:889px;font-size:12px;line-height:14px;color:#35a035;letter-spacing:-0.563px;">&gt;&gt;&gt;</span>
<span class="t m" style="left:339.60px;top:889px;font-size:12px;line-height:14px;color:#141414;letter-spacing:-0.381px;">#savefig('simple_plot.png')</span>
<span class="t m" style="left:311.60px;top:908px;font-size:12px;line-height:14px;color:#35a035;letter-spacing:-0.563px;">&gt;&gt;&gt;</span>
<span class="t m" style="left:339.60px;top:908px;font-size:12px;line-height:14px;color:#141414;letter-spacing:-0.382px;">#savefig('simple_plot')</span>
<span class="t m" style="left:311.60px;top:927px;font-size:12px;line-height:14px;color:#35a035;letter-spacing:-0.563px;">&gt;&gt;&gt;</span>
<span class="t m" style="left:339.60px;top:927px;font-size:12px;line-height:14px;color:#141414;letter-spacing:-0.383px;">show()</span>
<span class="t m" style="left:311.60px;top:946px;font-size:12px;line-height:14px;color:#35a035;letter-spacing:-0.563px;">&gt;&gt;&gt;</span>
<div style="left:1261px;top:597px;width:15px;height:366px;background:linear-gradient(90deg,#c9c7c4,#d9d7d4 40%,#d3d1ce);border:1px solid #a3a29f;"></div>
<div style="left:1261px;top:597px;width:15px;height:14px;background:linear-gradient(#fdfdfc,#ecebe9);border:1px solid #8f8e8b;border-radius:4px 4px 0 0;"></div>
<svg class="a" style="left:1264px;top:601px;" width="9" height="6"><path d="M1 5L4.500 1.500L8 5" fill="none" stroke="#111" stroke-width="1.500"/></svg>
<div style="left:1261px;top:858px;width:15px;height:88px;background:linear-gradient(90deg,#a8c3e6,#86abdb 50%,#7a9fd2);border:1px solid #5e83b8;"></div>
<svg class="a" style="left:1265px;top:897px;" width="8" height="8"><path d="M.5 1H6.500M.5 3.500H6.500M.5 6H6.500" stroke="#4a6fa5" stroke-width="1"/></svg>
<div style="left:1261px;top:946px;width:15px;height:17px;background:linear-gradient(#fdfdfc,#ecebe9);border:1px solid #8f8e8b;border-radius:0 0 4px 4px;"></div>
<svg class="a" style="left:1264px;top:951px;" width="9" height="6"><path d="M1 1L4.500 4.500L8 1" fill="none" stroke="#111" stroke-width="1.500"/></svg>
<div style="left:0px;top:968px;width:1280px;height:30px;background:#edeceb;border-top:1px solid #d3d2cf;"></div>
<div style="left:0px;top:969px;width:1280px;height:1px;background:#fbfbfa;"></div>
<div style="left:302px;top:967px;width:978px;height:1px;background:#9d9a97;"></div>
<svg class="a" style="left:534px;top:975px;" width="18" height="18"><rect x=".5" y=".5" width="16.500" height="17" rx="3.500" fill="#f0efed" stroke="#6e6d6a" stroke-width=".9"/>
<path d="M3 2.500C5.500 .8 8.500 2 8.800 5L9.500 9.500C7 9 4.500 9.800 3.500 11.500C2 9 1.800 5 3 2.500z" fill="#1a1a1a"/><path d="M5.300 3.200L5.800 6.800" stroke="#fff" stroke-width="1.400"/>
<circle cx="10" cy="12" r="4.800" fill="#fff" stroke="#1a1a1a" stroke-width="1.500"/><circle cx="10" cy="12" r="1.300" fill="#1a1a1a"/>
<path d="M9.500 3C11.500 3.500 13.500 5 14.500 7.500M12.500 2.500L14.500 4.500" stroke="#1a1a1a" stroke-width="1.200" fill="none"/></svg>
<svg class="a" style="left:560px;top:975px" width="32" height="19" role="img" aria-label="座標:"><text class="j" x="0" y="14" font-size="13" fill="#1a1a1a" textLength="29" lengthAdjust="spacingAndGlyphs">座標:</text></svg>
<div style="left:602px;top:975px;width:298px;height:18px;background:#fff;border:1px solid #85827e;border-radius:3.500px;box-shadow:0 1px 0 #fbfbfa;"></div>
<span class="t" style="left:716.00px;top:977px;font-size:11.8px;line-height:14px;color:#1a1a1a;letter-spacing:0.516px;">0.007,0.453</span>
<svg class="a" style="left:909px;top:975px" width="28" height="19" role="img" aria-label="縮尺"><text class="j" x="0" y="14" font-size="13" fill="#1a1a1a" textLength="26" lengthAdjust="spacingAndGlyphs">縮尺</text></svg>
<div style="left:947px;top:975px;width:98px;height:18px;background:#fff;border:1px solid #85827e;border-radius:3.500px;box-shadow:0 1px 0 #fbfbfa;"></div>
<div style="left:1020px;top:976px;width:24px;height:16px;background:linear-gradient(#fdfdfc,#eceae8);border-left:1px solid #a9a8a5;border-radius:0 3px 3px 0;"></div>
<span class="t" style="left:951.00px;top:978px;font-size:11.8px;line-height:14px;color:#1a1a1a;letter-spacing:0.348px;">1:985755</span>
<svg class="a" style="left:1028px;top:981px;" width="10" height="7"><path d="M1 1L5 5L9 1" fill="none" stroke="#111" stroke-width="1.600"/></svg>
<svg class="a" style="left:1053px;top:975px;" width="19" height="19"><rect x=".5" y=".5" width="18" height="18" rx="3" fill="#e6e5e2" stroke="#8f8e8b"/>
<path d="M3 16C8 15 13 10 16 3L17 6C15 12 10 17 4 17.500z" fill="#555"/><circle cx="7.500" cy="6.500" r="4" fill="#fff" stroke="#d8202a" stroke-width="1.400"/><path d="M4.800 3.800L10.200 9.200" stroke="#d8202a" stroke-width="1.400"/></svg>
<div style="left:1081px;top:977px;width:12px;height:12px;background:#fff;border:1px solid #6e6d6a;"></div>
<svg class="a" style="left:1082px;top:978px;" width="10" height="10"><path d="M1.800 5L4 8L8.500 1.500" fill="none" stroke="#111" stroke-width="1.600"/></svg>
<svg class="a" style="left:1101px;top:975px" width="40" height="19" role="img" aria-label="レンダ"><text class="j" x="0" y="14" font-size="13" fill="#1a1a1a" textLength="38" lengthAdjust="spacingAndGlyphs">レンダ</text></svg>
<span class="t" style="left:1155.00px;top:977px;font-size:13.8px;line-height:15px;color:#8c8b89;letter-spacing:-0.375px;">EPSG:4326</span>
<svg class="a" style="left:1234px;top:974px;" width="20" height="20"><rect x=".5" y=".5" width="19" height="19" rx="4" fill="#bdbcba" stroke="#7a7977"/>
<circle cx="10" cy="10" r="6.500" fill="#e4e3e1" stroke="#6d6c6a" stroke-width="1"/><ellipse cx="10" cy="10" rx="3" ry="6.500" fill="none" stroke="#8a8987" stroke-width=".8"/><path d="M3.500 10H16.500M10 3.500V16.500" stroke="#8a8987" stroke-width=".8"/></svg>
<div style="left:1260px;top:974px;width:18px;height:20px;background:#fff;"></div>
<svg class="a" style="left:1261px;top:976px;" width="16" height="16"><path d="M8 1.200L15 14.500H1z" fill="#f4ef1c" stroke="#b5a800" stroke-width=".8"/><path d="M8 5.500V10.500M8 12V13.300" stroke="#111" stroke-width="1.700"/></svg>
<div style="left:52px;top:82px;width:644px;height:574px;background:#fff;border:1px solid #9a9a98;border-radius:6px 6px 0 0;"></div>
<div style="left:53px;top:83px;width:642px;height:26px;background:linear-gradient(#f1f0ef,#edeceb 40%);border-radius:5px 5px 0 0;"></div>
<svg class="a" style="left:59px;top:88px;" width="16" height="16"><rect x=".5" y=".5" width="15" height="15" fill="#c3d8e0" stroke="#9eb1b8"/><path d="M1.300 7.800C2.300 5.500 2.800 1.600 3.800 1.600C5.300 1.600 5.300 14.300 6.800 14.300C8.300 14.300 8.300 1.600 9.800 1.600C11.300 1.600 11.300 14 12.800 14C13.800 14 14 10.500 14.700 9.700" fill="none" stroke="#e0901a" stroke-width="1.400" stroke-linecap="round"/></svg>
<span class="t b" style="left:319.75px;top:88px;font-size:14.3px;line-height:16px;color:#82817f;letter-spacing:0.859px;">Figure 1</span>
<svg class="a" style="left:630px;top:97.8px;" width="9" height="3"><rect x="0" y="0" width="8" height="2.300" fill="#585856"/></svg>
<svg class="a" style="left:653px;top:92px;" width="9" height="9"><rect x=".6" y=".6" width="6.800" height="6.500" fill="none" stroke="#585856" stroke-width="1.200"/><rect x="0" y="0" width="8" height="2" fill="#585856"/></svg>
<svg class="a" style="left:675.5px;top:92px;" width="9" height="9"><path d="M1 1L8 8M8 1L1 8" stroke="#585856" stroke-width="2.100" fill="none"/></svg>
<div style="left:54px;top:109px;width:641px;height:41px;background:linear-gradient(#f7f7f6,#f2f1f0 40%,#e6e5e3);border-top:1px solid #fdfdfc;border-bottom:1px solid #fdfdfc;"></div>
<div style="left:54px;top:148px;width:641px;height:1px;background:#c4c3c0;"></div>
<svg class="a" style="left:57px;top:121px;" width="6" height="18"><g fill="#b5b4b1"><rect x="1" y="0" width="1" height="1"/><rect x="1" y="3" width="1" height="1"/><rect x="1" y="6" width="1" height="1"/><rect x="1" y="9" width="1" height="1"/><rect x="1" y="12" width="1" height="1"/><rect x="1" y="15" width="1" height="1"/><rect x="4" y="0" width="1" height="1"/><rect x="4" y="3" width="1" height="1"/><rect x="4" y="6" width="1" height="1"/><rect x="4" y="9" width="1" height="1"/><rect x="4" y="12" width="1" height="1"/><rect x="4" y="15" width="1" height="1"/></g></svg>
<svg class="a" style="left:71px;top:117px;" width="24" height="24"><defs><linearGradient id="hd" x1="0" y1="0" x2="0" y2="1"><stop offset="0" stop-color="#fbd35a"/><stop offset="1" stop-color="#f0a020"/></linearGradient>
<linearGradient id="hw" x1="0" y1="0" x2="1" y2="0"><stop offset="0" stop-color="#ffffff"/><stop offset="1" stop-color="#d4d7d9"/></linearGradient></defs>
<rect x="5.500" y="2" width="3" height="5" fill="#f0a828" stroke="#b8741a" stroke-width=".6"/>
<path d="M4.800 11.500V22.500H18.800V11.500L11.800 4.500z" fill="url(#hw)" stroke="#9aa0a3" stroke-width=".9"/>
<path d="M8.500 22V14C8.500 10.500 15 10.500 15 14V22z" fill="url(#hd)" stroke="#c26a10" stroke-width=".9"/>
<path d="M1.300 12.200L11.800 1.700L22.300 12.200L20.800 13.600L11.800 4.800L2.800 13.600z" fill="#c0304a" stroke="#8e1f35" stroke-width=".7"/></svg>
<svg class="a" style="left:0;top:0" width="1280" height="1024"><defs><radialGradient id="nb119" cx=".42" cy=".3" r=".75"><stop offset="0" stop-color="#3fd0e2"/><stop offset=".45" stop-color="#1a93ab"/><stop offset="1" stop-color="#0e5f78"/></radialGradient></defs>
<circle cx="119" cy="129" r="10.600" fill="url(#nb119)" stroke="#0f6a84" stroke-width=".8"/><path transform="translate(119,129)" d="M-6.200 0L-.5 -5.300V-2.300H5.200V2.300H-.5V5.300z" fill="#c9e8ee" stroke="#8fcad6" stroke-width=".5"/></svg>
<svg class="a" style="left:0;top:0" width="1280" height="1024"><defs><radialGradient id="nf154.7" cx=".42" cy=".3" r=".75"><stop offset="0" stop-color="#3fd0e2"/><stop offset=".45" stop-color="#1a93ab"/><stop offset="1" stop-color="#0e5f78"/></radialGradient></defs>
<circle cx="154.7" cy="129" r="10.600" fill="url(#nf154.7)" stroke="#0f6a84" stroke-width=".8"/><path transform="translate(154.7,129) scale(-1,1)" d="M-6.200 0L-.5 -5.300V-2.300H5.200V2.300H-.5V5.300z" fill="#c9e8ee" stroke="#8fcad6" stroke-width=".5"/></svg>
<div style="left:178px;top:117px;width:1px;height:25px;background:#b9b8b5;"></div>
<div style="left:179px;top:117px;width:1px;height:25px;background:#fbfbfa;"></div>
<svg class="a" style="left:190px;top:118px;" width="24" height="24"><path d="M12.200 .3L15.800 5H13.500V10.500H19V8.200L23.700 11.800L19 15.400V13.100H13.500V18.600H15.800L12.200 23.300L8.600 18.600H10.900V13.100H5.400V15.400L.7 11.800L5.400 8.200V10.500H10.900V5H8.600z" fill="#19607f"/></svg>
<svg class="a" style="left:226px;top:118px;" width="26" height="22"><rect x="4.500" y="7.500" width="18" height="12.500" fill="#fbfdfe" stroke="#8fc5cf" stroke-width="1"/>
<path d="M12.500 10L21 1.800L23.200 4L15 12z" fill="#f0a030" stroke="#c87c18" stroke-width=".6"/>
<circle cx="8.500" cy="11.500" r="7.300" fill="#b5dce4" fill-opacity=".85" stroke="#9fcdd6" stroke-width=".8"/>
<path d="M5.500 8.800H12M5.500 11H12M5.500 13.200H12M5.500 15.400H10.500" stroke="#3f97a8" stroke-width="1.100"/></svg>
<div style="left:261px;top:117px;width:1px;height:25px;background:#b9b8b5;"></div>
<div style="left:262px;top:117px;width:1px;height:25px;background:#fbfbfa;"></div>
<svg class="a" style="left:274px;top:118px;" width="24" height="23"><rect x="2" y="2" width="18" height="18.500" rx="1.500" fill="#fff" stroke="#111" stroke-width="1.200"/>
<rect x="4.500" y="4.500" width="13" height="13.500" fill="#7fb0e8"/><rect x="4.500" y="13" width="13" height="5" fill="#c5dcf5"/>
<rect x="6.800" y="7.200" width="8.500" height="8" rx="1.300" fill="#fff" stroke="#111" stroke-width="1.200"/><rect x="7.400" y="7.800" width="7.300" height="2.300" fill="#8d949c"/><rect x="10" y="7.800" width="1.800" height="2.300" fill="#5a7fd0"/>
<path d="M11 .2L14 3.400H8zM11 22.500L14 19.300H8zM.2 11.200L3.400 8.200V14.200zM22 11.200L18.800 8.200V14.200z" fill="#35c540" stroke="#1d8f28" stroke-width=".5"/></svg>
<svg class="a" style="left:311px;top:119px;" width="20" height="20"><defs><linearGradient id="sv" x1="0" y1="0" x2="0" y2="1"><stop offset="0" stop-color="#2e7ea3"/><stop offset="1" stop-color="#1d5f80"/></linearGradient></defs>
<path d="M1.800 .8H17.200C18 .8 18.600 1.400 18.600 2.200V17C18.600 17.800 18 18.400 17.200 18.400H2.600L.8 16.600V2.200C.8 1.400 1 .8 1.800 .8z" fill="url(#sv)" stroke="#1a5575" stroke-width=".7"/>
<rect x="4" y="1.200" width="11.500" height="1.300" fill="#e8a060"/><rect x="4" y="2.500" width="11.500" height="6" fill="#6fa5bf"/><path d="M6.500 4.200H14M6.500 6H14" stroke="#2c6f8d" stroke-width=".9"/>
<rect x="5.500" y="12" width="8.800" height="6" fill="#9fb9c6"/><rect x="6.800" y="12.800" width="2.300" height="4.600" fill="#1d4f68"/></svg>
<div style="left:55px;top:150px;width:640px;height:480px;background:#bfbfbf;"></div>
<div style="left:53px;top:631px;width:641px;height:24px;background:#edeceb;"></div>
<svg class="a" style="left:679px;top:639px;" width="14" height="14"><g><rect x="10" y="10" width="1" height="1" fill="#9b9a97"/><rect x="11" y="11" width="1" height="1" fill="#fff"/><rect x="10" y="7" width="1" height="1" fill="#9b9a97"/><rect x="11" y="8" width="1" height="1" fill="#fff"/><rect x="10" y="4" width="1" height="1" fill="#9b9a97"/><rect x="11" y="5" width="1" height="1" fill="#fff"/><rect x="10" y="1" width="1" height="1" fill="#9b9a97"/><rect x="11" y="2" width="1" height="1" fill="#fff"/><rect x="7" y="10" width="1" height="1" fill="#9b9a97"/><rect x="8" y="11" width="1" height="1" fill="#fff"/><rect x="7" y="7" width="1" height="1" fill="#9b9a97"/><rect x="8" y="8" width="1" height="1" fill="#fff"/><rect x="7" y="4" width="1" height="1" fill="#9b9a97"/><rect x="8" y="5" width="1" height="1" fill="#fff"/><rect x="4" y="10" width="1" height="1" fill="#9b9a97"/><rect x="5" y="11" width="1" height="1" fill="#fff"/><rect x="4" y="7" width="1" height="1" fill="#9b9a97"/><rect x="5" y="8" width="1" height="1" fill="#fff"/><rect x="1" y="10" width="1" height="1" fill="#9b9a97"/><rect x="2" y="11" width="1" height="1" fill="#fff"/></g></svg>
<svg class="a" style="left:0;top:0" width="700" height="660"><rect x="134" y="198" width="496" height="384" fill="#fff"/><path fill="#000" d="M156.200 564.0L156.200 560.4L155.0 561.0L156.800 555.0L158.600 561.0L157.400 560.4L157.400 564.0zM169.100 563.9L169.800 560.1L168.500 560.5L171.400 555.0L172.0 561.2L171.0 560.4L170.200 564.1zM182.0 563.8L183.500 559.8L182.200 559.9L186.0 555.0L185.500 561.2L184.600 560.2L183.100 564.2zM194.900 563.7L197.300 559.4L196.0 559.3L200.500 555.0L199.100 561.1L198.400 560.0L195.900 564.3zM207.800 563.7L211.100 559.0L209.800 558.8L214.700 555.0L212.700 560.9L212.100 559.7L208.700 564.3zM220.700 563.6L224.800 558.7L223.500 558.4L228.700 555.0L226.200 560.7L225.700 559.5L221.600 564.4zM233.600 563.6L238.300 558.5L237.0 558.1L242.400 555.0L239.600 560.6L239.200 559.3L234.400 564.4zM246.400 563.6L251.500 558.4L250.300 558.0L255.700 555.0L252.800 560.5L252.400 559.2L247.300 564.4zM259.300 563.6L264.500 558.4L263.300 558.0L268.700 555.0L265.800 560.5L265.400 559.2L260.200 564.4zM272.200 563.6L277.200 558.4L275.900 558.0L281.400 555.0L278.500 560.5L278.100 559.3L273.0 564.4zM285.0 563.6L289.600 558.6L288.300 558.2L293.700 555.0L291.0 560.6L290.500 559.4L285.900 564.4zM297.900 563.6L301.800 558.8L300.500 558.5L305.600 555.0L303.300 560.8L302.700 559.5L298.800 564.4zM310.700 563.7L313.800 559.1L312.500 558.9L317.300 555.0L315.400 560.9L314.800 559.8L311.700 564.3zM323.600 563.7L325.700 559.5L324.400 559.5L328.700 555.0L327.600 561.1L326.800 560.0L324.600 564.3zM336.400 563.8L337.700 559.9L336.400 560.1L340.0 555.0L339.800 561.2L338.800 560.3L337.500 564.2zM349.200 563.9L349.800 560.2L348.500 560.7L351.100 555.0L352.0 561.2L350.900 560.4L350.400 564.1zM362.100 564.0L361.900 560.4L360.700 561.1L362.200 555.0L364.300 560.8L363.100 560.3L363.300 564.0zM375.0 564.1L374.0 560.3L373.0 561.2L373.300 555.0L376.500 560.3L375.200 560.1L376.100 563.9zM387.900 564.2L386.100 560.1L385.200 561.2L384.500 555.0L388.500 559.7L387.200 559.7L389.0 563.8zM400.800 564.3L398.100 559.9L397.400 561.0L395.800 555.0L400.400 559.2L399.100 559.3L401.800 563.7zM413.700 564.4L410.100 559.6L409.500 560.8L407.400 555.0L412.400 558.7L411.100 558.9L414.700 563.6zM426.600 564.4L422.300 559.4L421.800 560.7L419.200 555.0L424.500 558.3L423.200 558.7L427.500 563.6zM439.500 564.4L434.600 559.3L434.200 560.6L431.400 555.0L436.800 558.1L435.500 558.5L440.400 563.6zM452.400 564.4L447.200 559.2L446.800 560.5L443.900 555.0L449.300 558.0L448.100 558.4L453.200 563.6zM465.200 564.4L460.100 559.2L459.600 560.5L456.700 555.0L462.200 558.0L460.900 558.4L466.100 563.6zM478.100 564.4L473.200 559.3L472.700 560.5L469.900 555.0L475.300 558.1L474.0 558.5L479.0 563.6zM491.0 564.4L486.600 559.4L486.100 560.7L483.500 555.0L488.700 558.3L487.400 558.6L491.800 563.6zM503.800 564.4L500.100 559.6L499.500 560.8L497.300 555.0L502.400 558.6L501.100 558.9L504.700 563.6zM516.600 564.3L513.800 559.9L513.100 561.0L511.500 555.0L516.200 559.1L514.800 559.2L517.600 563.7zM529.500 564.3L527.500 560.1L526.700 561.2L525.800 555.0L530.0 559.7L528.600 559.6L530.500 563.7zM542.300 564.2L541.200 560.3L540.300 561.2L540.400 555.0L543.700 560.3L542.400 560.0L543.500 563.8zM555.200 564.0L554.900 560.4L553.700 561.1L555.0 555.0L557.300 560.8L556.0 560.3L556.300 564.0zM156.200 554.0L156.200 550.5L155.0 551.1L156.800 545.2L158.600 551.1L157.400 550.5L157.400 554.0zM169.100 553.9L169.800 550.3L168.500 550.7L171.400 545.2L172.0 551.4L171.0 550.6L170.200 554.1zM182.0 553.8L183.500 549.9L182.200 550.1L186.0 545.2L185.500 551.4L184.600 550.4L183.100 554.2zM194.900 553.7L197.300 549.5L195.900 549.5L200.500 545.2L199.0 551.2L198.300 550.1L195.900 554.3zM207.800 553.6L211.100 549.2L209.800 548.9L214.700 545.2L212.600 551.0L212.0 549.9L208.700 554.4zM220.700 553.6L224.800 548.9L223.500 548.5L228.700 545.2L226.200 550.9L225.700 549.6L221.600 554.4zM233.600 553.6L238.300 548.7L237.0 548.3L242.400 545.2L239.600 550.7L239.100 549.5L234.400 554.4zM246.500 553.6L251.500 548.5L250.300 548.1L255.700 545.2L252.800 550.7L252.400 549.4L247.300 554.4zM259.300 553.6L264.500 548.5L263.200 548.1L268.700 545.2L265.700 550.6L265.300 549.4L260.200 554.4zM272.200 553.6L277.200 548.6L275.900 548.2L281.400 545.2L278.400 550.7L278.0 549.4L273.0 554.4zM285.0 553.6L289.600 548.7L288.300 548.3L293.700 545.2L290.900 550.8L290.400 549.5L285.900 554.4zM297.900 553.6L301.800 548.9L300.500 548.6L305.600 545.2L303.200 550.9L302.700 549.7L298.800 554.4zM310.700 553.7L313.800 549.3L312.400 549.1L317.300 545.2L315.400 551.1L314.700 549.9L311.700 554.3zM323.600 553.7L325.700 549.7L324.400 549.6L328.700 545.2L327.500 551.3L326.800 550.2L324.600 554.3zM336.400 553.8L337.700 550.1L336.400 550.2L340.0 545.2L339.700 551.4L338.800 550.4L337.500 554.2zM349.200 553.9L349.700 550.4L348.500 550.8L351.100 545.2L352.0 551.3L350.900 550.6L350.400 554.1zM362.100 554.0L361.900 550.6L360.700 551.2L362.200 545.2L364.300 551.0L363.100 550.5L363.300 554.0zM375.0 554.2L374.0 550.5L373.0 551.4L373.300 545.2L376.500 550.5L375.200 550.2L376.100 553.8zM387.900 554.2L386.100 550.3L385.300 551.3L384.500 545.2L388.500 549.9L387.200 549.8L389.0 553.8zM400.800 554.3L398.100 550.0L397.400 551.2L395.800 545.2L400.500 549.3L399.100 549.4L401.800 553.7zM413.700 554.4L410.200 549.8L409.600 551.0L407.400 545.2L412.400 548.8L411.100 549.1L414.700 553.6zM426.600 554.4L422.300 549.6L421.800 550.8L419.200 545.2L424.500 548.4L423.200 548.8L427.500 553.6zM439.500 554.4L434.700 549.4L434.200 550.7L431.400 545.2L436.800 548.2L435.500 548.6L440.300 553.6zM452.400 554.4L447.300 549.4L446.800 550.6L443.900 545.2L449.300 548.1L448.100 548.5L453.200 553.6zM465.200 554.4L460.100 549.4L459.700 550.6L456.700 545.2L462.200 548.1L460.900 548.5L466.100 553.6zM478.100 554.4L473.200 549.4L472.800 550.7L469.900 545.2L475.300 548.2L474.100 548.6L479.0 553.6zM491.0 554.4L486.600 549.6L486.100 550.8L483.500 545.2L488.800 548.4L487.500 548.8L491.800 553.6zM503.800 554.4L500.200 549.8L499.600 551.0L497.300 545.2L502.400 548.8L501.100 549.0L504.700 553.6zM516.600 554.3L513.900 550.0L513.200 551.2L511.500 545.2L516.200 549.2L514.900 549.4L517.600 553.7zM529.500 554.3L527.600 550.3L526.800 551.3L525.800 545.2L530.0 549.8L528.700 549.8L530.500 553.7zM542.300 554.2L541.300 550.5L540.300 551.4L540.400 545.2L543.700 550.4L542.400 550.2L543.500 553.8zM555.200 554.1L554.900 550.6L553.700 551.3L555.0 545.2L557.300 551.0L556.0 550.5L556.300 553.9zM156.200 544.0L156.200 541.1L155.0 541.7L156.800 535.7L158.600 541.7L157.400 541.1L157.400 544.0zM169.100 543.9L169.700 540.8L168.400 541.2L171.400 535.7L171.900 541.9L170.900 541.1L170.200 544.1zM182.0 543.8L183.400 540.4L182.100 540.5L186.0 535.7L185.300 541.9L184.500 540.9L183.100 544.2zM194.900 543.7L197.200 540.0L195.800 539.9L200.500 535.7L198.900 541.7L198.200 540.6L195.900 544.3zM207.800 543.6L210.900 539.6L209.600 539.3L214.700 535.7L212.500 541.5L211.900 540.3L208.700 544.4zM220.700 543.6L224.600 539.3L223.400 538.9L228.700 535.7L226.0 541.3L225.500 540.1L221.600 544.4zM233.600 543.6L238.200 539.1L236.900 538.6L242.400 535.7L239.400 541.2L239.0 539.9L234.400 544.4zM246.500 543.6L251.400 538.9L250.200 538.5L255.700 535.7L252.600 541.1L252.200 539.8L247.300 544.4zM259.300 543.6L264.400 538.9L263.100 538.4L268.700 535.7L265.600 541.1L265.200 539.8L260.100 544.4zM272.200 543.6L277.100 539.0L275.800 538.5L281.400 535.7L278.300 541.1L277.900 539.8L273.0 544.4zM285.100 543.6L289.500 539.1L288.200 538.7L293.700 535.7L290.700 541.2L290.300 539.9L285.900 544.4zM297.900 543.6L301.600 539.4L300.400 539.0L305.600 535.7L303.0 541.4L302.500 540.1L298.800 544.4zM310.700 543.6L313.600 539.7L312.300 539.5L317.300 535.7L315.200 541.6L314.600 540.4L311.700 544.4zM323.600 543.7L325.600 540.1L324.300 540.0L328.700 535.7L327.400 541.8L326.600 540.7L324.600 544.3zM336.400 543.8L337.600 540.5L336.300 540.7L340.0 535.7L339.600 541.9L338.700 541.0L337.500 544.2zM349.200 543.9L349.700 540.9L348.400 541.3L351.100 535.7L352.0 541.9L350.900 541.1L350.400 544.1zM362.100 544.0L361.900 541.1L360.800 541.8L362.200 535.7L364.300 541.5L363.100 541.0L363.300 544.0zM375.0 544.2L374.100 541.0L373.100 541.9L373.300 535.7L376.600 541.0L375.300 540.7L376.100 543.8zM387.900 544.3L386.200 540.8L385.400 541.9L384.500 535.7L388.600 540.3L387.300 540.3L389.0 543.7zM400.800 544.3L398.300 540.5L397.600 541.7L395.800 535.7L400.600 539.7L399.300 539.9L401.800 543.7zM413.700 544.4L410.300 540.2L409.800 541.5L407.400 535.7L412.500 539.2L411.200 539.5L414.600 543.6zM426.600 544.4L422.500 540.0L422.0 541.3L419.200 535.7L424.600 538.8L423.300 539.2L427.500 543.6zM439.500 544.4L434.800 539.9L434.400 541.1L431.400 535.7L436.900 538.6L435.600 539.0L440.300 543.6zM452.400 544.4L447.400 539.8L447.0 541.1L443.900 535.7L449.400 538.5L448.200 538.9L453.200 543.6zM465.300 544.4L460.200 539.8L459.900 541.1L456.700 535.7L462.300 538.4L461.0 538.9L466.100 543.6zM478.100 544.4L473.400 539.9L473.0 541.1L469.900 535.7L475.400 538.6L474.200 539.0L478.900 543.6zM491.0 544.4L486.700 540.0L486.300 541.2L483.500 535.7L488.900 538.8L487.600 539.2L491.800 543.6zM503.800 544.4L500.300 540.2L499.800 541.4L497.300 535.700L502.500 539.1L501.200 539.4L504.700 543.6zM516.600 544.3L514.0 540.5L513.400 541.6L511.500 535.7L516.300 539.6L515.0 539.8L517.600 543.7zM529.500 544.3L527.700 540.8L526.900 541.8L525.800 535.7L530.100 540.2L528.800 540.2L530.500 543.7zM542.300 544.2L541.400 541.0L540.400 541.9L540.400 535.7L543.800 540.9L542.500 540.7L543.400 543.8zM555.200 544.1L554.900 541.1L553.800 541.8L555.0 535.7L557.300 541.5L556.100 541.0L556.300 543.9zM156.200 534.0L156.200 531.9L155.0 532.5L156.800 526.6L158.600 532.5L157.400 531.9L157.400 534.0zM169.100 533.9L169.600 531.6L168.300 531.9L171.400 526.6L171.800 532.8L170.800 531.9L170.200 534.1zM182.0 533.7L183.200 531.2L181.900 531.2L186.0 526.6L185.100 532.7L184.300 531.7L183.100 534.3zM194.900 533.7L197.0 530.7L195.600 530.5L200.500 526.6L198.600 532.5L197.900 531.3L195.900 534.3zM207.800 533.6L210.700 530.2L209.500 529.9L214.700 526.6L212.200 532.2L211.600 531.0L208.700 534.4zM220.700 533.6L224.500 529.9L223.200 529.5L228.700 526.6L225.700 532.0L225.300 530.8L221.500 534.4zM233.600 533.6L238.0 529.7L236.700 529.2L242.400 526.6L239.100 531.9L238.800 530.6L234.400 534.4zM246.500 533.5L251.200 529.6L250.0 529.0L255.700 526.6L252.300 531.8L252.0 530.5L247.300 534.5zM259.400 533.5L264.200 529.5L263.0 529.0L268.700 526.6L265.300 531.7L265.0 530.4L260.100 534.5zM272.200 533.5L276.900 529.6L275.700 529.1L281.400 526.6L278.0 531.8L277.700 530.5L273.0 534.5zM285.100 533.6L289.300 529.7L288.0 529.3L293.700 526.6L290.400 531.9L290.100 530.6L285.900 534.4zM297.900 533.6L301.400 530.0L300.200 529.6L305.600 526.6L302.700 532.1L302.300 530.8L298.800 534.4zM310.800 533.6L313.400 530.3L312.100 530.1L317.300 526.6L314.900 532.3L314.400 531.1L311.700 534.4zM323.600 533.7L325.400 530.8L324.100 530.7L328.700 526.6L327.100 532.6L326.400 531.4L324.600 534.3zM336.400 533.8L337.400 531.3L336.100 531.4L340.0 526.6L339.400 532.8L338.500 531.8L337.500 534.2zM349.200 533.9L349.600 531.8L348.300 532.1L351.100 526.6L351.900 532.7L350.800 532.0L350.400 534.1zM362.100 534.0L362.0 532.0L360.800 532.6L362.200 526.6L364.400 532.4L363.100 531.9L363.300 534.0zM375.0 534.2L374.300 531.9L373.300 532.8L373.300 526.6L376.700 531.7L375.400 531.5L376.100 533.8zM387.900 534.3L386.500 531.6L385.700 532.7L384.500 526.6L388.800 531.0L387.500 531.0L389.0 533.7zM400.800 534.4L398.500 531.2L397.900 532.4L395.800 526.6L400.800 530.3L399.500 530.5L401.800 533.6zM413.700 534.4L410.600 530.9L410.100 532.2L407.400 526.6L412.700 529.8L411.400 530.1L414.600 533.6zM426.600 534.4L422.700 530.7L422.300 532.0L419.200 526.6L424.800 529.4L423.500 529.8L427.500 533.6zM439.500 534.4L435.0 530.5L434.700 531.8L431.400 526.6L437.0 529.1L435.800 529.6L440.300 533.6zM452.400 534.5L447.600 530.5L447.300 531.8L443.900 526.6L449.600 529.0L448.400 529.5L453.200 533.5zM465.300 534.5L460.400 530.5L460.100 531.8L456.700 526.6L462.400 529.0L461.200 529.5L466.0 533.5zM478.100 534.5L473.600 530.5L473.300 531.8L469.900 526.6L475.600 529.1L474.400 529.6L478.900 533.5zM491.0 534.4L487.0 530.7L486.600 531.9L483.500 526.6L489.0 529.3L487.800 529.8L491.800 533.6zM503.800 534.4L500.500 530.9L500.100 532.1L497.300 526.6L502.700 529.7L501.400 530.1L504.700 533.6zM516.700 534.4L514.200 531.2L513.700 532.4L511.500 526.6L516.500 530.2L515.200 530.5L517.600 533.6zM529.500 534.3L527.900 531.5L527.200 532.6L525.800 526.6L530.300 530.9L529.0 531.0L530.500 533.7zM542.300 534.2L541.500 531.8L540.600 532.8L540.400 526.6L544.0 531.6L542.600 531.5L543.400 533.8zM555.200 534.1L554.900 532.0L553.800 532.7L555.0 526.6L557.400 532.3L556.100 531.8L556.300 533.9zM156.200 524.0L156.200 523.1L155.0 523.7L156.800 517.7L158.600 523.7L157.400 523.1L157.400 524.0zM169.100 523.8L169.400 522.7L168.100 523.0L171.400 517.7L171.500 523.9L170.500 523.0L170.200 524.2zM182.0 523.7L182.900 522.1L181.600 522.1L186.0 517.7L184.700 523.8L183.900 522.7L183.0 524.3zM194.900 523.6L196.600 521.5L195.300 521.2L200.500 517.7L198.100 523.5L197.600 522.3L195.900 524.4zM207.800 523.6L210.500 521.0L209.200 520.6L214.700 517.7L211.700 523.2L211.300 521.9L208.700 524.4zM220.800 523.5L224.200 520.7L223.0 520.2L228.700 517.7L225.300 522.9L224.900 521.6L221.500 524.5zM233.600 523.5L237.700 520.5L236.500 519.9L242.400 517.7L238.700 522.7L238.400 521.4L234.400 524.5zM246.500 523.5L251.0 520.3L249.800 519.7L255.700 517.7L251.900 522.6L251.700 521.3L247.200 524.5zM259.400 523.5L264.0 520.3L262.800 519.7L268.700 517.7L264.900 522.6L264.700 521.3L260.100 524.5zM272.300 523.5L276.700 520.4L275.500 519.7L281.400 517.7L277.600 522.7L277.400 521.3L273.0 524.5zM285.100 523.5L289.0 520.5L287.800 519.9L293.700 517.7L290.0 522.8L289.800 521.5L285.800 524.5zM298.0 523.5L301.200 520.8L299.900 520.3L305.600 517.7L302.300 523.0L302.0 521.7L298.700 524.5zM310.800 523.6L313.100 521.2L311.900 520.8L317.300 517.7L314.400 523.3L314.0 522.0L311.600 524.4zM323.600 523.6L325.100 521.7L323.800 521.5L328.700 517.7L326.600 523.6L326.0 522.4L324.600 524.4zM336.400 523.7L337.100 522.3L335.800 522.3L340.0 517.7L339.0 523.9L338.200 522.8L337.500 524.3zM349.200 523.9L349.500 522.9L348.200 523.2L351.100 517.7L351.700 523.9L350.600 523.1L350.400 524.1zM362.100 524.0L362.0 523.1L360.900 523.8L362.200 517.7L364.500 523.5L363.200 523.0L363.300 524.0zM375.0 524.2L374.600 523.0L373.600 523.9L373.300 517.7L377.0 522.7L375.700 522.6L376.100 523.8zM387.900 524.3L386.800 522.6L386.100 523.7L384.500 517.7L389.200 521.8L387.800 521.9L388.900 523.7zM400.900 524.4L398.900 522.2L398.400 523.4L395.800 517.7L401.100 521.0L399.800 521.4L401.800 523.6zM413.800 524.4L410.900 521.8L410.500 523.1L407.400 517.7L413.0 520.5L411.700 520.9L414.600 523.6zM426.700 524.5L423.0 521.5L422.700 522.8L419.200 517.7L425.0 520.1L423.800 520.6L427.400 523.5zM439.600 524.5L435.300 521.4L435.100 522.7L431.400 517.7L437.200 519.8L436.0 520.4L440.300 523.5zM452.400 524.5L447.900 521.3L447.700 522.6L443.900 517.7L449.800 519.7L448.600 520.3L453.100 523.5zM465.300 524.5L460.800 521.3L460.600 522.6L456.700 517.7L462.600 519.7L461.400 520.3L466.0 523.5zM478.200 524.5L473.900 521.4L473.700 522.7L469.900 517.7L475.800 519.8L474.600 520.4L478.900 523.5zM491.0 524.5L487.300 521.5L487.0 522.8L483.500 517.7L489.200 520.0L488.0 520.6L491.800 523.5zM503.900 524.4L500.900 521.8L500.500 523.0L497.300 517.7L502.900 520.4L501.700 520.9L504.700 523.6zM516.700 524.4L514.600 522.1L514.100 523.3L511.500 517.7L516.800 520.9L515.500 521.3L517.600 523.6zM529.500 524.3L528.300 522.5L527.600 523.7L525.800 517.7L530.600 521.7L529.300 521.9L530.500 523.7zM542.300 524.2L541.800 522.9L540.900 523.9L540.400 517.7L544.200 522.6L542.900 522.5L543.400 523.8zM555.200 524.1L555.0 523.1L553.900 523.9L555.0 517.7L557.500 523.4L556.200 523.0L556.300 523.9zM156.300 514.0L156.300 513.5L155.300 514.0L156.800 509.1L158.200 514.0L157.300 513.5L157.300 514.0zM169.200 513.8L169.300 513.3L168.200 513.5L171.400 509.1L171.100 514.5L170.300 513.7L170.100 514.2zM182.0 513.7L182.400 513.1L181.100 512.9L186.0 509.1L184.0 515.0L183.400 513.8L183.0 514.3zM195.0 513.6L196.200 512.4L194.900 512.0L200.500 509.1L197.400 514.5L197.0 513.3L195.800 514.4zM207.900 513.5L210.100 511.9L208.900 511.3L214.700 509.1L211.0 514.1L210.800 512.8L208.600 514.5zM220.800 513.5L223.900 511.5L222.700 510.9L228.700 509.1L224.700 513.9L224.500 512.5L221.500 514.5zM233.700 513.5L237.400 511.3L236.300 510.6L242.400 509.1L238.100 513.7L238.0 512.3L234.300 514.5zM246.600 513.5L250.700 511.2L249.700 510.4L255.700 509.1L251.400 513.6L251.300 512.2L247.200 514.5zM259.500 513.5L263.700 511.2L262.600 510.4L268.700 509.1L264.300 513.5L264.300 512.2L260.0 514.5zM272.300 513.5L276.400 511.2L275.300 510.5L281.400 509.1L277.0 513.6L277.0 512.3L272.900 514.5zM285.200 513.5L288.700 511.4L287.600 510.6L293.700 509.1L289.500 513.7L289.400 512.4L285.800 514.5zM298.0 513.5L300.800 511.6L299.700 511.0L305.600 509.1L301.700 513.9L301.500 512.6L298.700 514.5zM310.800 513.5L312.700 512.0L311.500 511.5L317.300 509.1L313.800 514.3L313.500 513.0L311.600 514.5zM323.700 513.6L324.600 512.6L323.300 512.2L328.700 509.1L325.900 514.7L325.500 513.4L324.500 514.4zM336.500 513.7L336.800 513.2L335.500 513.1L340.0 509.1L338.400 514.9L337.700 513.8L337.400 514.3zM349.300 513.9L349.500 513.4L348.400 513.6L351.100 509.1L351.300 514.4L350.400 513.6L350.300 514.1zM362.200 514.1L362.200 513.6L361.200 514.2L362.200 509.1L364.200 513.8L363.100 513.5L363.200 513.9zM375.100 514.2L374.900 513.7L374.100 514.7L373.300 509.1L377.0 513.3L375.800 513.3L376.100 513.8zM388.0 514.4L387.400 513.7L386.900 514.9L384.500 509.1L389.600 512.6L388.300 512.9L388.900 513.6zM400.900 514.4L399.400 513.1L399.100 514.4L395.800 509.1L401.500 511.7L400.200 512.2L401.700 513.6zM413.800 514.5L411.400 512.7L411.200 514.1L407.400 509.1L413.300 511.1L412.100 511.8L414.500 513.5zM426.700 514.5L423.500 512.5L423.300 513.8L419.200 509.1L425.200 510.8L424.100 511.5L427.400 513.5zM439.600 514.5L435.700 512.3L435.700 513.6L431.400 509.1L437.400 510.5L436.300 511.3L440.200 513.5zM452.500 514.5L448.300 512.2L448.200 513.6L443.900 509.1L449.900 510.4L448.800 511.2L453.100 513.5zM465.400 514.5L461.100 512.2L461.100 513.5L456.700 509.1L462.800 510.4L461.700 511.2L465.900 513.5zM478.200 514.5L474.300 512.3L474.200 513.6L469.900 509.1L476.0 510.5L474.900 511.3L478.800 513.5zM491.100 514.5L487.700 512.4L487.600 513.8L483.500 509.1L489.500 510.7L488.300 511.4L491.700 513.5zM503.900 514.5L501.400 512.7L501.200 514.0L497.300 509.1L503.200 511.1L502.100 511.7L504.600 513.5zM516.800 514.5L515.100 513.1L514.800 514.4L511.500 509.1L517.100 511.7L515.900 512.2L517.500 513.5zM529.600 514.4L528.900 513.6L528.400 514.8L525.800 509.1L531.100 512.5L529.800 512.8L530.500 513.6zM542.400 514.3L542.100 513.8L541.400 514.8L540.400 509.1L544.300 513.2L543.100 513.3L543.400 513.7zM555.300 514.1L555.200 513.6L554.300 514.2L555.0 509.1L557.200 513.8L556.200 513.4L556.200 513.9zM156.500 504.0L156.500 503.7L155.800 504.0L156.800 500.7L157.800 504.0L157.100 503.7L157.100 504.0zM169.300 503.8L169.500 503.5L168.700 503.5L171.400 500.7L170.600 504.5L170.200 503.9L170.0 504.2zM182.200 503.6L182.500 503.3L181.500 502.9L186.0 500.7L183.500 505.1L183.200 504.0L182.800 504.4zM195.100 503.5L195.600 503.1L194.500 502.5L200.500 500.7L196.400 505.5L196.300 504.1L195.700 504.5zM208.0 503.5L209.700 502.6L208.600 501.8L214.700 500.7L210.200 505.0L210.200 503.7L208.500 504.5zM220.900 503.5L223.500 502.3L222.500 501.5L228.700 500.7L223.900 504.7L224.0 503.4L221.400 504.5zM233.800 503.4L237.200 502.1L236.200 501.2L242.400 500.7L237.500 504.6L237.600 503.2L234.200 504.6zM246.700 503.4L250.500 502.0L249.500 501.1L255.700 500.7L250.800 504.5L250.900 503.1L247.100 504.6zM259.500 503.4L263.500 502.0L262.500 501.1L268.700 500.7L263.700 504.4L263.900 503.1L259.900 504.6zM272.400 503.4L276.100 502.1L275.200 501.1L281.400 500.7L276.400 504.5L276.600 503.2L272.800 504.6zM285.300 503.4L288.500 502.2L287.500 501.3L293.700 500.7L288.800 504.6L288.900 503.3L285.700 504.6zM298.100 503.5L300.500 502.4L299.500 501.5L305.600 500.7L300.900 504.8L301.0 503.5L298.600 504.5zM310.900 503.5L312.300 502.7L311.200 502.0L317.300 500.7L312.900 505.1L312.900 503.8L311.500 504.5zM323.800 503.5L324.200 503.2L323.100 502.6L328.700 500.7L325.100 505.4L324.900 504.1L324.400 504.5zM336.600 503.7L336.900 503.4L336.0 503.1L340.0 500.7L337.900 504.9L337.600 504.0L337.300 504.3zM349.500 503.9L349.600 503.5L348.900 503.6L351.100 500.7L350.800 504.4L350.300 503.8L350.200 504.1zM362.400 504.1L362.300 503.7L361.700 504.2L362.200 500.7L363.700 503.8L363.0 503.6L363.0 503.9zM375.200 504.2L375.0 503.9L374.600 504.7L373.300 500.7L376.500 503.3L375.700 503.4L375.900 503.8zM388.100 504.4L387.700 504.1L387.500 505.2L384.500 500.7L389.400 502.8L388.400 503.3L388.800 503.6zM401.0 504.5L400.100 504.0L400.0 505.3L395.800 500.7L401.800 502.2L400.700 503.0L401.600 503.5zM413.900 504.5L411.900 503.6L412.0 504.9L407.400 500.7L413.500 501.7L412.500 502.5L414.400 503.5zM426.800 504.5L423.900 503.3L424.0 504.7L419.200 500.7L425.400 501.4L424.400 502.2L427.300 503.5zM439.700 504.6L436.200 503.2L436.300 504.5L431.400 500.7L437.600 501.2L436.600 502.1L440.100 503.4zM452.600 504.6L448.700 503.1L448.800 504.5L443.900 500.7L450.100 501.1L449.100 502.0L453.0 503.4zM465.500 504.6L461.500 503.1L461.700 504.5L456.700 500.7L462.900 501.1L461.900 502.0L465.900 503.4zM478.300 504.6L474.700 503.2L474.800 504.5L469.900 500.7L476.100 501.2L475.100 502.1L478.700 503.4zM491.200 504.6L488.200 503.3L488.300 504.7L483.500 500.7L489.600 501.3L488.600 502.2L491.600 503.4zM504.0 504.5L501.900 503.6L502.0 504.9L497.300 500.7L503.500 501.7L502.400 502.5L504.500 503.5zM516.800 504.5L515.800 503.9L515.700 505.3L511.500 500.7L517.500 502.2L516.400 502.9L517.400 503.5zM529.700 504.4L529.300 504.1L529.0 505.3L525.800 500.7L531.0 502.7L529.900 503.3L530.300 503.6zM542.600 504.3L542.300 503.9L541.900 504.8L540.400 500.7L543.900 503.2L543.0 503.4L543.200 503.7zM555.400 504.1L555.300 503.7L554.800 504.2L555.0 500.7L556.700 503.8L556.0 503.6L556.100 503.9zM156.600 494.0L156.600 493.8L156.300 494.0L156.800 492.5L157.200 494.0L156.900 493.8L156.900 494.0zM169.500 493.8L169.700 493.7L169.200 493.5L171.400 492.5L170.100 494.5L170.0 494.0L169.800 494.2zM182.400 493.6L182.700 493.5L182.100 492.9L186.0 492.5L183.0 495.1L183.0 494.2L182.700 494.4zM195.200 493.5L195.700 493.3L194.900 492.5L200.500 492.5L195.800 495.5L196.100 494.4L195.500 494.5zM208.100 493.4L209.400 493.1L208.500 492.1L214.700 492.5L209.300 495.6L209.600 494.3L208.400 494.6zM221.0 493.4L223.300 492.9L222.500 491.9L228.700 492.5L223.200 495.4L223.600 494.1L221.200 494.6zM233.900 493.4L237.0 492.8L236.200 491.8L242.400 492.5L236.800 495.3L237.200 494.0L234.100 494.6zM246.800 493.4L250.400 492.8L249.600 491.7L255.700 492.5L250.200 495.2L250.600 494.0L247.0 494.6zM259.600 493.4L263.300 492.8L262.600 491.7L268.700 492.5L263.200 495.2L263.500 494.0L259.800 494.6zM272.500 493.4L276.0 492.8L275.200 491.7L281.400 492.5L275.800 495.3L276.200 494.0L272.700 494.6zM285.400 493.4L288.300 492.9L287.500 491.8L293.700 492.5L288.100 495.3L288.500 494.0L285.600 494.6zM298.200 493.4L300.300 493.0L299.400 491.9L305.600 492.5L300.200 495.4L300.500 494.2L298.500 494.6zM311.100 493.4L312.0 493.2L311.100 492.2L317.300 492.5L312.0 495.7L312.200 494.4L311.400 494.6zM323.900 493.5L324.400 493.4L323.600 492.6L328.700 492.5L324.500 495.4L324.700 494.3L324.200 494.5zM336.800 493.7L337.100 493.5L336.500 493.1L340.0 492.5L337.400 494.9L337.400 494.1L337.100 494.3zM349.700 493.9L349.800 493.7L349.400 493.6L351.100 492.5L350.300 494.4L350.100 494.0L350.0 494.1zM362.500 494.1L362.500 493.9L362.200 494.2L362.200 492.5L363.200 493.8L362.800 493.8L362.900 493.9zM375.400 494.2L375.200 494.1L375.100 494.7L373.300 492.5L376.0 493.3L375.500 493.6L375.700 493.8zM388.300 494.4L387.900 494.2L388.0 495.2L384.500 492.5L388.900 492.8L388.200 493.4L388.600 493.6zM401.200 494.6L400.600 494.4L400.900 495.7L395.800 492.5L401.800 492.3L400.900 493.3L401.500 493.4zM414.0 494.6L412.500 494.2L412.800 495.5L407.400 492.5L413.600 492.0L412.700 493.1L414.300 493.4zM426.900 494.6L424.400 494.1L424.700 495.4L419.200 492.5L425.400 491.9L424.600 492.9L427.200 493.4zM439.800 494.6L436.500 494.0L436.900 495.3L431.400 492.5L437.500 491.8L436.700 492.8L440.0 493.4zM452.700 494.6L449.0 494.0L449.400 495.2L443.900 492.5L450.0 491.7L449.200 492.8L452.900 493.4zM465.600 494.6L461.900 494.0L462.300 495.2L456.700 492.5L462.900 491.7L462.100 492.8L465.800 493.4zM478.400 494.6L475.100 494.0L475.500 495.3L469.900 492.5L476.100 491.8L475.300 492.8L478.600 493.4zM491.300 494.6L488.600 494.1L489.0 495.3L483.500 492.5L489.600 491.8L488.800 492.9L491.500 493.4zM504.100 494.6L502.400 494.2L502.800 495.5L497.300 492.5L503.500 492.0L502.700 493.0L504.400 493.4zM517.0 494.6L516.400 494.4L516.700 495.7L511.500 492.5L517.600 492.3L516.700 493.3L517.300 493.4zM529.900 494.4L529.400 494.3L529.600 495.3L525.800 492.5L530.500 492.7L529.700 493.4L530.200 493.6zM542.700 494.3L542.500 494.1L542.400 494.8L540.400 492.5L543.300 493.2L542.800 493.6L543.0 493.7zM555.600 494.1L555.500 493.9L555.300 494.2L555.0 492.5L556.200 493.8L555.800 493.8L555.900 493.9zM156.800 484.6L157.300 484.3L157.300 483.7L156.800 483.4L156.300 483.7L156.300 484.3zM169.700 483.8L169.900 483.8L169.700 483.5L171.400 484.3L169.600 484.5L169.800 484.2L169.600 484.2zM182.500 483.6L182.900 483.7L182.600 482.9L186.0 484.3L182.400 485.1L182.800 484.4L182.500 484.4zM195.400 483.5L195.900 483.5L195.500 482.5L200.500 484.3L195.300 485.5L195.900 484.5L195.400 484.5zM208.300 483.4L209.400 483.5L208.800 482.2L214.700 484.3L208.700 485.8L209.300 484.6L208.200 484.6zM221.200 483.4L223.400 483.5L222.800 482.3L228.700 484.3L222.700 485.8L223.300 484.7L221.100 484.6zM234.0 483.4L237.0 483.5L236.500 482.3L242.400 484.3L236.400 485.9L237.0 484.7L234.0 484.6zM246.900 483.4L250.400 483.5L249.800 482.3L255.700 484.3L249.700 485.9L250.400 484.7L246.900 484.6zM259.800 483.4L263.400 483.5L262.800 482.3L268.700 484.3L262.700 485.9L263.400 484.7L259.700 484.6zM272.600 483.4L276.0 483.5L275.500 482.3L281.400 484.3L275.400 485.9L276.0 484.7L272.600 484.6zM285.500 483.4L288.300 483.5L287.800 482.3L293.700 484.3L287.700 485.9L288.300 484.7L285.500 484.6zM298.400 483.4L300.300 483.5L299.700 482.3L305.600 484.3L299.600 485.8L300.200 484.7L298.300 484.6zM311.200 483.4L312.0 483.4L311.400 482.2L317.300 484.3L311.300 485.8L311.900 484.6L311.200 484.6zM324.100 483.5L324.600 483.6L324.200 482.6L328.700 484.3L324.0 485.4L324.500 484.5L324.100 484.5zM337.0 483.7L337.300 483.7L337.0 483.1L340.0 484.3L336.900 484.9L337.200 484.3L336.900 484.3zM349.900 483.9L350.0 483.9L349.900 483.6L351.100 484.3L349.800 484.4L349.900 484.2L349.800 484.1zM362.200 484.3L362.700 484.6L363.200 484.3L363.200 483.7L362.700 483.4L362.200 483.7zM375.600 484.2L375.400 484.3L375.600 484.7L373.300 484.3L375.500 483.3L375.300 483.8L375.500 483.8zM388.500 484.4L388.100 484.4L388.500 485.2L384.500 484.3L388.400 482.8L388.0 483.6L388.400 483.6zM401.300 484.6L400.800 484.6L401.400 485.7L395.800 484.3L401.200 482.3L400.700 483.5L401.300 483.4zM414.200 484.6L412.800 484.7L413.400 485.8L407.400 484.3L413.300 482.2L412.700 483.5L414.200 483.4zM427.100 484.6L424.600 484.7L425.200 485.8L419.200 484.3L425.100 482.3L424.500 483.5L427.0 483.4zM439.900 484.6L436.700 484.7L437.400 485.9L431.400 484.3L437.300 482.3L436.700 483.5L439.900 483.4zM452.800 484.6L449.200 484.7L449.900 485.9L443.900 484.3L449.800 482.3L449.200 483.5L452.800 483.4zM465.700 484.6L462.100 484.7L462.700 485.9L456.700 484.3L462.600 482.3L462.0 483.5L465.600 483.4zM478.500 484.6L475.300 484.7L475.900 485.9L469.900 484.3L475.800 482.3L475.200 483.5L478.500 483.4zM491.400 484.6L488.800 484.7L489.500 485.8L483.500 484.3L489.300 482.3L488.800 483.5L491.400 483.4zM504.300 484.6L502.700 484.7L503.300 485.8L497.300 484.3L503.200 482.3L502.700 483.5L504.200 483.4zM517.200 484.6L516.600 484.6L517.200 485.7L511.500 484.3L517.100 482.3L516.500 483.5L517.100 483.4zM530.0 484.4L529.600 484.4L530.100 485.3L525.800 484.3L529.900 482.7L529.600 483.6L530.0 483.6zM542.900 484.3L542.700 484.3L543.0 484.8L540.400 484.3L542.800 483.2L542.600 483.8L542.900 483.7zM555.200 484.2L555.600 484.6L556.200 484.4L556.300 483.8L555.900 483.4L555.300 483.6zM157.0 474.0L157.0 474.2L157.400 474.0L156.800 476.0L156.200 474.0L156.600 474.2L156.600 474.0zM169.900 473.8L170.0 474.0L170.300 473.5L171.400 476.0L169.0 474.5L169.600 474.4L169.400 474.2zM182.700 473.6L183.100 473.9L183.100 472.9L186.0 476.0L181.900 475.1L182.700 474.6L182.300 474.4zM195.600 473.5L196.100 473.7L196.0 472.5L200.500 476.0L194.800 475.5L195.700 474.7L195.200 474.5zM208.400 473.4L209.800 473.9L209.600 472.5L214.700 476.0L208.500 475.9L209.400 475.0L208.100 474.6zM221.300 473.4L223.700 474.1L223.400 472.8L228.700 476.0L222.500 476.2L223.400 475.2L221.0 474.6zM234.100 473.4L237.300 474.2L237.0 472.9L242.400 476.0L236.200 476.4L237.0 475.4L233.900 474.6zM247.0 473.4L250.600 474.3L250.300 473.0L255.700 476.0L249.500 476.4L250.400 475.4L246.700 474.6zM259.900 473.4L263.600 474.3L263.300 473.0L268.700 476.0L262.500 476.5L263.400 475.4L259.600 474.6zM272.700 473.4L276.300 474.2L276.0 473.0L281.400 476.0L275.200 476.4L276.0 475.4L272.500 474.6zM285.600 473.4L288.600 474.2L288.300 472.9L293.700 476.0L287.400 476.3L288.300 475.3L285.300 474.6zM298.500 473.4L300.600 474.0L300.400 472.7L305.600 476.0L299.400 476.2L300.300 475.2L298.200 474.6zM311.400 473.4L312.400 473.8L312.200 472.5L317.300 476.0L311.100 475.8L312.0 474.9L311.0 474.6zM324.300 473.5L324.800 473.7L324.700 472.6L328.700 476.0L323.500 475.4L324.300 474.7L323.900 474.5zM337.200 473.7L337.500 473.9L337.600 473.1L340.0 476.0L336.300 474.9L337.100 474.5L336.800 474.3zM350.0 473.9L350.200 474.1L350.400 473.6L351.100 476.0L349.200 474.4L349.800 474.3L349.600 474.1zM362.900 474.1L362.900 474.3L363.300 474.2L362.200 476.0L362.100 473.8L362.400 474.2L362.500 473.9zM375.800 474.2L375.500 474.4L376.200 474.7L373.300 476.0L375.0 473.3L375.100 474.0L375.400 473.8zM388.600 474.4L388.200 474.6L389.100 475.2L384.500 476.0L387.800 472.8L387.800 473.8L388.200 473.6zM401.500 474.6L401.0 474.8L401.900 475.7L395.800 476.0L400.700 472.3L400.600 473.7L401.100 473.4zM414.400 474.6L412.700 475.1L413.600 476.0L407.400 476.0L412.600 472.6L412.300 473.9L414.0 473.4zM427.200 474.6L424.500 475.3L425.400 476.3L419.200 476.0L424.500 472.8L424.200 474.1L426.900 473.4zM440.100 474.6L436.700 475.4L437.600 476.4L431.400 476.0L436.700 472.9L436.400 474.2L439.800 473.4zM452.900 474.6L449.200 475.4L450.100 476.5L443.900 476.0L449.300 473.0L448.900 474.3L452.700 473.4zM465.800 474.6L462.100 475.4L462.900 476.5L456.700 476.0L462.100 473.0L461.800 474.3L465.500 473.4zM478.700 474.6L475.300 475.4L476.100 476.4L469.900 476.0L475.300 472.9L475.0 474.2L478.400 473.4zM491.500 474.6L488.800 475.3L489.700 476.3L483.500 476.0L488.800 472.8L488.500 474.1L491.300 473.4zM504.400 474.6L502.600 475.1L503.500 476.1L497.300 476.0L502.500 472.7L502.300 474.0L504.100 473.4zM517.300 474.6L516.700 474.8L517.700 475.7L511.500 476.0L516.500 472.3L516.300 473.7L516.900 473.4zM530.200 474.4L529.800 474.6L530.600 475.3L525.800 476.0L529.400 472.7L529.400 473.8L529.800 473.6zM543.100 474.3L542.800 474.5L543.500 474.8L540.400 476.0L542.300 473.2L542.400 474.0L542.700 473.7zM556.0 474.1L555.900 474.3L556.400 474.2L555.0 476.0L555.100 473.8L555.500 474.1L555.500 473.9zM157.200 464.0L157.200 464.4L157.900 464.0L156.800 467.7L155.700 464.0L156.400 464.4L156.400 464.0zM170.0 463.8L170.200 464.2L170.800 463.5L171.400 467.7L168.500 464.5L169.500 464.6L169.300 464.2zM182.900 463.6L183.200 464.0L183.600 462.9L186.0 467.7L181.400 465.1L182.500 464.7L182.100 464.4zM195.700 463.5L196.500 464.1L196.700 462.8L200.500 467.7L194.600 465.6L195.800 465.0L195.0 464.5zM208.600 463.5L210.400 464.5L210.500 463.2L214.700 467.7L208.700 466.3L209.800 465.6L208.0 464.5zM221.400 463.5L224.200 464.8L224.200 463.5L228.700 467.7L222.600 466.7L223.600 465.9L220.900 464.5zM234.200 463.5L237.700 465.0L237.700 463.7L242.400 467.7L236.200 466.9L237.200 466.1L233.800 464.5zM247.100 463.5L251.0 465.1L250.900 463.8L255.700 467.7L249.600 467.1L250.600 466.2L246.600 464.5zM260.0 463.5L264.0 465.1L263.900 463.8L268.700 467.7L262.500 467.1L263.600 466.2L259.500 464.5zM272.800 463.5L276.700 465.1L276.600 463.8L281.400 467.7L275.200 467.0L276.200 466.2L272.400 464.5zM285.700 463.5L289.0 465.0L289.0 463.6L293.700 467.7L287.500 466.9L288.500 466.1L285.200 464.5zM298.600 463.5L301.100 464.8L301.100 463.4L305.600 467.7L299.500 466.6L300.600 465.8L298.100 464.5zM311.500 463.5L313.0 464.4L313.200 463.1L317.300 467.7L311.300 466.1L312.400 465.4L310.900 464.5zM324.500 463.5L324.900 463.9L325.200 462.6L328.700 467.7L323.0 465.4L324.200 464.8L323.700 464.5zM337.300 463.7L337.600 464.1L338.100 463.1L340.0 467.7L335.800 464.9L336.900 464.7L336.600 464.3zM350.200 463.9L350.300 464.2L351.0 463.6L351.100 467.7L348.700 464.4L349.600 464.5L349.500 464.1zM363.100 464.1L363.0 464.4L363.800 464.2L362.200 467.7L361.600 463.8L362.300 464.3L362.300 463.9zM375.900 464.2L375.700 464.6L376.700 464.7L373.300 467.7L374.400 463.3L375.0 464.1L375.200 463.8zM388.800 464.4L388.400 464.8L389.600 465.2L384.500 467.7L387.300 462.8L387.700 464.0L388.100 463.6zM401.600 464.5L400.600 465.2L401.700 465.9L395.800 467.7L399.700 462.9L399.900 464.2L401.0 463.5zM414.500 464.5L412.400 465.7L413.500 466.4L407.400 467.7L411.700 463.3L411.800 464.6L413.900 463.5zM427.300 464.5L424.300 466.0L425.400 466.8L419.200 467.7L423.800 463.6L423.800 464.9L426.800 463.5zM440.200 464.5L436.500 466.1L437.500 467.0L431.400 467.7L436.100 463.7L436.0 465.1L439.700 463.5zM453.0 464.5L449.0 466.2L450.0 467.1L443.900 467.7L448.700 463.8L448.600 465.1L452.600 463.5zM465.900 464.5L461.900 466.2L462.900 467.1L456.700 467.7L461.500 463.8L461.400 465.1L465.400 463.5zM478.800 464.5L475.100 466.2L476.100 467.0L469.900 467.7L474.700 463.7L474.600 465.1L478.300 463.5zM491.700 464.5L488.600 466.0L489.600 466.8L483.500 467.7L488.100 463.6L488.0 464.9L491.100 463.5zM504.600 464.5L502.300 465.7L503.400 466.5L497.300 467.7L501.700 463.3L501.800 464.7L504.0 463.5zM517.500 464.5L516.300 465.3L517.400 466.0L511.500 467.7L515.500 463.0L515.600 464.3L516.800 463.5zM530.400 464.4L530.0 464.8L531.100 465.3L525.800 467.7L528.900 462.7L529.200 464.0L529.600 463.6zM543.300 464.3L543.0 464.6L544.0 464.8L540.400 467.7L541.800 463.2L542.300 464.1L542.500 463.7zM556.100 464.1L556.0 464.4L556.900 464.2L555.0 467.7L554.600 463.8L555.300 464.3L555.400 463.9zM157.300 454.0L157.300 454.5L158.400 454.0L156.800 459.3L155.200 454.0L156.300 454.5L156.300 454.0zM170.200 453.8L170.400 454.4L171.200 453.5L171.400 459.3L168.100 454.5L169.300 454.7L169.100 454.2zM183.0 453.7L183.600 454.5L184.200 453.3L186.0 459.3L181.200 455.3L182.600 455.2L182.0 454.3zM195.800 453.6L197.200 455.0L197.600 453.8L200.500 459.3L195.100 456.2L196.300 455.8L195.0 454.4zM208.600 453.5L210.900 455.4L211.200 454.1L214.700 459.3L209.0 456.9L210.200 456.4L207.900 454.5zM221.500 453.5L224.600 455.7L224.800 454.4L228.700 459.3L222.800 457.3L224.0 456.7L220.800 454.5zM234.300 453.5L238.200 455.9L238.300 454.6L242.400 459.3L236.400 457.6L237.500 456.9L233.700 454.5zM247.200 453.5L251.400 456.0L251.500 454.7L255.700 459.3L249.700 457.8L250.800 457.1L246.600 454.5zM260.0 453.5L264.400 456.1L264.500 454.7L268.700 459.3L262.700 457.8L263.800 457.1L259.400 454.5zM272.900 453.5L277.100 456.0L277.200 454.7L281.400 459.3L275.300 457.7L276.500 457.0L272.300 454.5zM285.800 453.5L289.500 455.9L289.600 454.6L293.700 459.3L287.700 457.6L288.800 456.9L285.200 454.5zM298.700 453.5L301.600 455.7L301.900 454.3L305.600 459.3L299.800 457.2L300.900 456.6L298.0 454.5zM311.600 453.6L313.600 455.3L314.0 454.0L317.300 459.3L311.600 456.7L312.900 456.2L310.800 454.4zM324.500 453.6L325.600 454.9L326.100 453.6L328.700 459.3L323.500 456.0L324.700 455.7L323.600 454.4zM337.500 453.7L337.800 454.3L338.600 453.2L340.0 459.3L335.500 455.0L336.800 454.9L336.400 454.3zM350.400 453.9L350.500 454.4L351.400 453.6L351.100 459.3L348.200 454.4L349.400 454.7L349.300 454.1zM363.200 454.1L363.200 454.6L364.300 454.2L362.200 459.3L361.100 453.8L362.100 454.5L362.200 453.9zM376.100 454.2L375.900 454.8L377.200 454.7L373.300 459.3L374.0 453.3L374.800 454.3L375.0 453.8zM388.900 454.4L388.200 455.4L389.500 455.6L384.500 459.3L386.600 453.5L387.200 454.7L388.0 453.6zM401.700 454.4L400.100 456.0L401.300 456.5L395.800 459.3L398.900 453.9L399.300 455.1L400.900 453.6zM414.500 454.5L412.0 456.5L413.200 457.0L407.400 459.3L411.0 454.2L411.200 455.5L413.800 453.5zM427.400 454.5L424.0 456.8L425.100 457.4L419.200 459.3L423.100 454.5L423.300 455.8L426.700 453.5zM440.200 454.5L436.200 457.0L437.400 457.7L431.400 459.3L435.500 454.6L435.600 456.0L439.600 453.5zM453.100 454.5L448.800 457.1L449.900 457.8L443.900 459.3L448.100 454.7L448.200 456.0L452.500 453.5zM466.0 454.5L461.600 457.1L462.700 457.8L456.700 459.3L460.900 454.7L461.0 456.1L465.400 453.5zM478.800 454.5L474.800 457.0L475.900 457.7L469.900 459.3L474.0 454.7L474.200 456.0L478.200 453.5zM491.700 454.5L488.200 456.8L489.400 457.5L483.500 459.3L487.400 454.5L487.600 455.8L491.100 453.5zM504.600 454.5L501.900 456.5L503.100 457.1L497.300 459.3L501.0 454.3L501.200 455.6L503.900 453.5zM517.500 454.4L515.800 456.1L517.0 456.5L511.500 459.3L514.600 453.9L515.0 455.2L516.700 453.6zM530.500 454.4L529.600 455.5L530.900 455.7L525.800 459.3L528.100 453.5L528.700 454.7L529.500 453.6zM543.400 454.3L543.200 454.8L544.500 454.8L540.400 459.3L541.300 453.2L542.100 454.3L542.400 453.7zM556.300 454.1L556.200 454.6L557.300 454.2L555.0 459.3L554.200 453.8L555.100 454.5L555.200 453.9zM157.400 444.0L157.400 445.3L158.600 444.7L156.800 450.6L155.0 444.7L156.200 445.3L156.200 444.0zM170.200 443.8L170.600 445.3L171.600 444.4L171.400 450.6L168.200 445.3L169.500 445.6L169.100 444.2zM183.0 443.7L184.0 445.6L184.800 444.5L186.0 450.6L181.700 446.2L183.0 446.2L182.0 444.3zM195.900 443.6L197.700 446.0L198.300 444.8L200.500 450.6L195.400 447.0L196.700 446.7L194.900 444.4zM208.700 443.6L211.400 446.4L211.800 445.1L214.700 450.6L209.300 447.6L210.500 447.2L207.800 444.4zM221.500 443.6L225.100 446.7L225.400 445.4L228.700 450.6L223.0 448.1L224.300 447.5L220.700 444.4zM234.400 443.5L238.500 446.8L238.800 445.5L242.400 450.6L236.600 448.3L237.800 447.8L233.600 444.5zM247.200 443.5L251.800 446.9L252.0 445.6L255.700 450.6L249.900 448.5L251.100 447.9L246.500 444.5zM260.100 443.5L264.800 447.0L265.0 445.7L268.700 450.6L262.900 448.5L264.100 447.9L259.400 444.5zM273.0 443.5L277.500 446.9L277.700 445.6L281.400 450.6L275.500 448.5L276.700 447.9L272.300 444.5zM285.900 443.5L289.900 446.8L290.200 445.5L293.700 450.6L287.900 448.3L289.100 447.7L285.100 444.5zM298.800 443.6L302.100 446.6L302.400 445.3L305.600 450.6L300.0 447.9L301.300 447.5L297.900 444.4zM311.700 443.6L314.100 446.3L314.600 445.0L317.300 450.6L312.0 447.4L313.200 447.1L310.800 444.4zM324.600 443.7L326.100 445.9L326.800 444.7L328.700 450.6L323.900 446.8L325.200 446.6L323.600 444.3zM337.500 443.8L338.300 445.5L339.100 444.5L340.0 450.6L335.900 446.0L337.200 446.0L336.400 444.2zM350.400 443.9L350.700 445.3L351.700 444.4L351.100 450.6L348.200 445.1L349.500 445.5L349.200 444.1zM363.300 444.0L363.200 445.3L364.400 444.8L362.200 450.6L360.900 444.6L362.0 445.2L362.100 444.0zM376.100 444.2L375.600 445.8L376.900 445.6L373.300 450.6L373.500 444.4L374.500 445.4L375.0 443.8zM389.0 444.3L387.700 446.3L389.100 446.4L384.500 450.6L386.0 444.6L386.700 445.7L387.900 443.7zM401.800 444.4L399.700 446.9L401.0 447.2L395.800 450.6L398.200 444.9L398.800 446.1L400.900 443.6zM414.600 444.4L411.600 447.3L412.900 447.8L407.400 450.6L410.400 445.2L410.800 446.5L413.800 443.6zM427.400 444.5L423.700 447.6L424.900 448.1L419.200 450.6L422.600 445.4L422.900 446.7L426.700 443.5zM440.300 444.5L436.0 447.8L437.200 448.4L431.400 450.6L435.0 445.6L435.200 446.9L439.600 443.5zM453.100 444.5L448.500 447.9L449.700 448.5L443.900 450.6L447.600 445.7L447.800 447.0L452.400 443.5zM466.0 444.5L461.400 447.9L462.500 448.5L456.700 450.6L460.400 445.7L460.700 447.0L465.300 443.5zM478.900 444.5L474.500 447.8L475.700 448.4L469.900 450.6L473.500 445.6L473.800 446.9L478.200 443.5zM491.800 444.5L488.0 447.7L489.200 448.2L483.500 450.6L486.900 445.4L487.200 446.7L491.0 443.5zM504.700 444.4L501.600 447.4L502.900 447.8L497.300 450.6L500.400 445.2L500.800 446.5L503.900 443.6zM517.600 444.4L515.400 446.9L516.700 447.3L511.500 450.6L514.0 444.9L514.500 446.2L516.700 443.6zM530.500 444.3L529.200 446.4L530.500 446.5L525.800 450.6L527.500 444.6L528.200 445.8L529.500 443.7zM543.400 444.2L542.800 445.8L544.100 445.7L540.400 450.6L540.800 444.4L541.700 445.4L542.300 443.8zM556.300 444.1L556.200 445.4L557.400 444.9L555.0 450.6L553.900 444.5L555.0 445.2L555.200 443.9zM157.400 434.0L157.400 436.3L158.600 435.8L156.800 441.7L155.0 435.8L156.200 436.3L156.200 434.0zM170.200 433.9L170.800 436.4L171.800 435.5L171.400 441.7L168.400 436.3L169.600 436.6L169.100 434.1zM183.100 433.8L184.300 436.6L185.200 435.5L186.0 441.7L181.900 437.0L183.300 437.1L182.0 434.2zM195.900 433.7L198.0 436.9L198.700 435.8L200.500 441.7L195.700 437.7L197.0 437.6L194.900 434.3zM208.700 433.6L211.700 437.2L212.300 436.0L214.700 441.7L209.500 438.3L210.800 438.0L207.800 434.4zM221.600 433.6L225.400 437.5L225.800 436.2L228.700 441.7L223.300 438.7L224.500 438.3L220.700 434.4zM234.400 433.6L238.800 437.6L239.200 436.4L242.400 441.7L236.800 439.0L238.0 438.5L233.600 434.4zM247.300 433.6L252.100 437.7L252.400 436.5L255.700 441.7L250.100 439.1L251.300 438.6L246.500 434.4zM260.100 433.5L265.0 437.8L265.400 436.5L268.700 441.7L263.0 439.2L264.300 438.7L259.400 434.5zM273.0 433.6L277.700 437.7L278.100 436.4L281.400 441.7L275.700 439.1L277.0 438.6L272.200 434.4zM285.900 433.6L290.200 437.6L290.500 436.3L293.700 441.7L288.100 438.9L289.300 438.5L285.100 434.4zM298.800 433.6L302.400 437.4L302.800 436.2L305.600 441.7L300.200 438.6L301.500 438.2L297.900 434.4zM311.700 433.6L314.400 437.1L315.0 435.9L317.300 441.7L312.200 438.1L313.500 437.9L310.800 434.4zM324.600 433.7L326.500 436.8L327.200 435.7L328.700 441.7L324.100 437.5L325.500 437.4L323.600 434.3zM337.500 433.8L338.600 436.5L339.500 435.5L340.0 441.7L336.100 436.8L337.500 436.9L336.400 434.2zM350.400 433.9L350.800 436.3L351.900 435.5L351.100 441.7L348.400 436.1L349.600 436.5L349.200 434.1zM363.300 434.0L363.100 436.4L364.400 435.9L362.200 441.7L360.800 435.6L361.900 436.3L362.100 434.0zM376.100 434.2L375.400 436.7L376.700 436.5L373.300 441.7L373.300 435.5L374.200 436.4L375.0 433.8zM389.0 434.3L387.400 437.2L388.800 437.2L384.500 441.7L385.600 435.6L386.400 436.7L387.900 433.7zM401.800 434.3L399.400 437.7L400.700 437.9L395.800 441.7L397.800 435.8L398.400 437.0L400.800 433.7zM414.600 434.4L411.400 438.1L412.700 438.4L407.400 441.7L410.0 436.1L410.500 437.3L413.700 433.6zM427.500 434.4L423.500 438.4L424.700 438.8L419.200 441.7L422.200 436.3L422.600 437.5L426.600 433.6zM440.300 434.4L435.700 438.6L437.0 439.0L431.400 441.7L434.600 436.4L434.900 437.7L439.500 433.6zM453.200 434.5L448.300 438.7L449.500 439.2L443.900 441.7L447.200 436.5L447.500 437.8L452.400 433.5zM466.0 434.5L461.200 438.7L462.400 439.2L456.700 441.7L460.100 436.5L460.400 437.8L465.300 433.5zM478.900 434.4L474.300 438.6L475.500 439.1L469.900 441.7L473.200 436.4L473.500 437.7L478.100 433.6zM491.800 434.4L487.700 438.4L489.0 438.8L483.500 441.7L486.500 436.3L486.900 437.5L491.0 433.6zM504.700 434.4L501.400 438.1L502.600 438.5L497.300 441.7L500.0 436.1L500.500 437.3L503.800 433.6zM517.600 434.4L515.100 437.7L516.400 438.0L511.500 441.7L513.600 435.9L514.200 437.0L516.700 433.6zM530.500 434.3L528.900 437.3L530.200 437.3L525.800 441.7L527.100 435.6L527.900 436.7L529.500 433.7zM543.400 434.2L542.600 436.8L543.900 436.6L540.400 441.7L540.500 435.5L541.500 436.4L542.300 433.8zM556.300 434.1L556.100 436.4L557.400 436.0L555.0 441.7L553.800 435.6L554.900 436.3L555.200 433.9zM157.400 424.0L157.400 427.1L158.600 426.5L156.800 432.5L155.0 426.5L156.200 427.1L156.200 424.0zM170.200 423.9L170.900 427.1L172.0 426.3L171.400 432.5L168.500 427.0L169.700 427.4L169.100 424.1zM183.100 423.8L184.500 427.3L185.400 426.3L186.0 432.5L182.100 427.7L183.400 427.7L182.0 424.2zM195.900 423.7L198.200 427.6L198.900 426.4L200.500 432.5L195.900 428.3L197.200 428.2L194.900 424.3zM208.700 423.6L211.900 427.8L212.500 426.7L214.700 432.5L209.700 428.8L211.0 428.6L207.800 424.4zM221.600 423.6L225.600 428.1L226.100 426.8L228.700 432.5L223.400 429.2L224.700 428.9L220.700 424.4zM234.400 423.6L239.0 428.2L239.500 427.0L242.400 432.5L236.900 429.5L238.200 429.1L233.600 424.4zM247.300 423.6L252.300 428.3L252.700 427.1L255.700 432.5L250.200 429.6L251.400 429.2L246.500 424.4zM260.100 423.6L265.200 428.4L265.600 427.1L268.700 432.5L263.200 429.7L264.400 429.2L259.300 424.4zM273.0 423.6L277.900 428.3L278.300 427.1L281.400 432.5L275.800 429.6L277.100 429.2L272.200 424.4zM285.900 423.6L290.400 428.2L290.800 426.9L293.700 432.5L288.200 429.4L289.500 429.0L285.100 424.4zM298.800 423.6L302.600 428.0L303.100 426.8L305.600 432.5L300.400 429.1L301.700 428.8L297.900 424.4zM311.700 423.7L314.700 427.8L315.300 426.6L317.300 432.5L312.400 428.7L313.700 428.5L310.700 424.3zM324.600 423.7L326.700 427.5L327.400 426.4L328.700 432.5L324.300 428.1L325.600 428.1L323.600 424.3zM337.500 423.8L338.700 427.2L339.700 426.3L340.0 432.5L336.300 427.5L337.600 427.6L336.400 424.2zM350.400 423.9L350.900 427.1L352.0 426.3L351.100 432.5L348.500 426.9L349.700 427.3L349.200 424.1zM363.300 424.0L363.100 427.2L364.300 426.6L362.200 432.5L360.800 426.4L361.900 427.1L362.100 424.0zM376.100 424.2L375.200 427.5L376.600 427.2L373.300 432.5L373.100 426.3L374.100 427.1L375.0 423.8zM389.0 424.3L387.300 427.9L388.600 427.8L384.500 432.5L385.400 426.3L386.200 427.4L387.900 423.7zM401.800 424.3L399.200 428.3L400.500 428.5L395.800 432.5L397.600 426.5L398.200 427.7L400.800 423.7zM414.600 424.4L411.200 428.7L412.500 428.9L407.400 432.5L409.700 426.7L410.300 427.9L413.700 423.6zM427.500 424.4L423.300 428.9L424.600 429.3L419.200 432.5L421.900 426.9L422.400 428.1L426.600 423.6zM440.300 424.4L435.600 429.1L436.800 429.6L431.400 432.5L434.300 427.0L434.800 428.3L439.500 423.6zM453.200 424.4L448.200 429.2L449.400 429.7L443.900 432.5L446.900 427.1L447.300 428.4L452.400 423.6zM466.100 424.4L461.0 429.2L462.300 429.7L456.700 432.5L459.800 427.1L460.200 428.4L465.300 423.6zM478.900 424.4L474.100 429.1L475.400 429.6L469.900 432.5L472.900 427.0L473.300 428.3L478.100 423.6zM491.800 424.4L487.600 429.0L488.800 429.4L483.500 432.5L486.200 426.9L486.700 428.2L491.0 423.6zM504.700 424.4L501.200 428.7L502.500 429.0L497.300 432.5L499.700 426.7L500.300 428.0L503.800 423.6zM517.600 424.3L514.900 428.4L516.300 428.5L511.500 432.5L513.300 426.5L514.0 427.7L516.600 423.7zM530.500 424.3L528.700 427.9L530.100 427.9L525.800 432.5L526.900 426.3L527.700 427.4L529.500 423.7zM543.500 424.2L542.500 427.5L543.800 427.3L540.400 432.5L540.300 426.3L541.300 427.2L542.300 423.8zM556.300 424.1L556.100 427.2L557.300 426.7L555.0 432.5L553.700 426.4L554.900 427.1L555.200 423.9zM157.400 414.0L157.400 417.5L158.600 417.0L156.800 422.9L155.0 417.0L156.200 417.5L156.200 414.0zM170.200 413.9L171.0 417.5L172.0 416.7L171.400 422.9L168.500 417.4L169.800 417.8L169.100 414.1zM183.100 413.8L184.600 417.7L185.500 416.7L186.0 422.9L182.200 418.0L183.500 418.1L182.0 414.2zM195.900 413.7L198.300 418.0L199.100 416.8L200.500 422.9L196.0 418.6L197.300 418.5L194.900 414.3zM208.700 413.7L212.0 418.2L212.700 417.0L214.700 422.9L209.800 419.1L211.100 418.9L207.800 414.3zM221.600 413.6L225.700 418.4L226.200 417.2L228.700 422.9L223.500 419.5L224.800 419.2L220.700 414.4zM234.400 413.6L239.100 418.6L239.600 417.3L242.400 422.9L237.0 419.8L238.300 419.4L233.600 414.4zM247.300 413.6L252.400 418.7L252.800 417.4L255.700 422.9L250.300 419.9L251.500 419.5L246.400 414.4zM260.200 413.6L265.300 418.7L265.800 417.4L268.700 422.9L263.200 420.0L264.500 419.6L259.300 414.4zM273.0 413.6L278.0 418.7L278.500 417.4L281.400 422.9L275.900 419.9L277.200 419.5L272.200 414.4zM285.900 413.6L290.500 418.6L290.900 417.3L293.700 422.9L288.300 419.7L289.600 419.4L285.0 414.4zM298.800 413.6L302.700 418.4L303.200 417.2L305.600 422.9L300.500 419.4L301.800 419.1L297.900 414.4zM311.700 413.7L314.800 418.1L315.400 417.0L317.300 422.9L312.500 419.0L313.800 418.8L310.700 414.3zM324.600 413.7L326.800 417.9L327.600 416.8L328.700 422.9L324.400 418.4L325.700 418.4L323.600 414.3zM337.500 413.8L338.800 417.6L339.800 416.7L340.0 422.9L336.400 417.8L337.700 418.0L336.400 414.2zM350.400 413.9L350.900 417.5L352.0 416.8L351.100 422.9L348.500 417.3L349.800 417.7L349.200 414.1zM363.300 414.0L363.100 417.6L364.300 417.1L362.200 422.9L360.700 416.9L361.900 417.5L362.100 414.0zM376.100 414.1L375.200 417.9L376.500 417.6L373.300 422.9L373.0 416.7L374.0 417.6L375.0 413.9zM389.0 414.2L387.200 418.3L388.500 418.2L384.500 422.9L385.300 416.7L386.100 417.8L387.900 413.8zM401.800 414.3L399.100 418.7L400.500 418.8L395.800 422.9L397.400 416.9L398.100 418.0L400.800 413.7zM414.700 414.4L411.100 419.0L412.400 419.3L407.400 422.9L409.600 417.1L410.200 418.3L413.700 413.6zM427.500 414.4L423.200 419.3L424.500 419.6L419.200 422.9L421.800 417.3L422.300 418.5L426.600 413.6zM440.300 414.4L435.500 419.5L436.800 419.8L431.400 422.9L434.200 417.4L434.600 418.6L439.500 413.6zM453.200 414.4L448.100 419.5L449.300 420.0L443.900 422.9L446.800 417.4L447.200 418.7L452.400 413.6zM466.100 414.4L460.900 419.5L462.200 420.0L456.700 422.9L459.700 417.4L460.100 418.7L465.200 413.6zM479.0 414.4L474.100 419.5L475.300 419.9L469.900 422.9L472.800 417.4L473.200 418.6L478.100 413.6zM491.800 414.4L487.500 419.3L488.800 419.6L483.500 422.9L486.100 417.3L486.600 418.5L491.0 413.6zM504.700 414.4L501.100 419.0L502.400 419.3L497.300 422.9L499.600 417.1L500.100 418.3L503.800 413.6zM517.600 414.3L514.800 418.7L516.200 418.8L511.500 422.9L513.200 416.9L513.800 418.1L516.600 413.7zM530.500 414.3L528.600 418.3L530.0 418.3L525.800 422.9L526.700 416.8L527.600 417.8L529.500 413.7zM543.500 414.2L542.400 417.9L543.700 417.7L540.400 422.9L540.300 416.7L541.200 417.6L542.300 413.8zM556.300 414.0L556.0 417.6L557.300 417.1L555.0 422.9L553.700 416.8L554.900 417.5L555.200 414.0zM157.400 404.0L157.400 407.6L158.600 407.0L156.800 413.0L155.0 407.0L156.200 407.6L156.200 404.0zM170.200 403.9L171.0 407.6L172.0 406.8L171.400 413.0L168.500 407.5L169.800 407.8L169.100 404.1zM183.100 403.8L184.600 407.8L185.500 406.8L186.0 413.0L182.200 408.1L183.500 408.2L182.0 404.2zM195.900 403.7L198.300 408.0L199.100 406.9L200.500 413.0L196.0 408.7L197.300 408.6L194.900 404.3zM208.700 403.7L212.100 408.3L212.700 407.1L214.700 413.0L209.800 409.2L211.100 409.0L207.800 404.3zM221.600 403.6L225.700 408.5L226.200 407.3L228.700 413.0L223.500 409.6L224.800 409.3L220.700 404.4zM234.400 403.6L239.200 408.7L239.600 407.4L242.400 413.0L237.0 409.8L238.300 409.5L233.600 404.4zM247.300 403.6L252.400 408.7L252.800 407.5L255.700 413.0L250.300 410.0L251.500 409.6L246.400 404.4zM260.200 403.6L265.400 408.8L265.800 407.5L268.700 413.0L263.300 410.0L264.500 409.6L259.300 404.4zM273.0 403.6L278.100 408.7L278.500 407.5L281.400 413.0L275.900 410.0L277.200 409.6L272.200 404.4zM285.900 403.6L290.500 408.6L291.0 407.4L293.700 413.0L288.300 409.8L289.600 409.4L285.0 404.4zM298.800 403.6L302.700 408.4L303.300 407.2L305.600 413.0L300.500 409.5L301.800 409.2L297.900 404.4zM311.700 403.7L314.800 408.2L315.400 407.0L317.300 413.0L312.500 409.0L313.800 408.9L310.700 404.3zM324.600 403.7L326.800 407.9L327.600 406.9L328.700 413.0L324.400 408.5L325.700 408.5L323.600 404.3zM337.500 403.8L338.800 407.7L339.800 406.8L340.0 413.0L336.400 407.9L337.700 408.1L336.400 404.2zM350.400 403.9L350.900 407.6L352.0 406.8L351.100 413.0L348.500 407.3L349.800 407.8L349.200 404.1zM363.300 404.0L363.100 407.7L364.300 407.1L362.200 413.0L360.700 406.9L361.900 407.6L362.100 404.0zM376.100 404.1L375.200 407.9L376.500 407.7L373.300 413.0L373.0 406.8L374.0 407.6L375.0 403.9zM389.0 404.2L387.200 408.3L388.500 408.3L384.500 413.0L385.200 406.8L386.100 407.8L387.900 403.8zM401.800 404.3L399.100 408.7L400.400 408.8L395.800 413.0L397.400 407.0L398.100 408.1L400.800 403.7zM414.700 404.4L411.100 409.1L412.400 409.3L407.400 413.0L409.500 407.2L410.100 408.3L413.700 403.6zM427.500 404.4L423.200 409.3L424.500 409.7L419.200 413.0L421.800 407.3L422.300 408.5L426.600 403.6zM440.400 404.4L435.500 409.5L436.800 409.9L431.400 413.0L434.200 407.4L434.600 408.7L439.500 403.6zM453.200 404.4L448.100 409.6L449.300 410.0L443.900 413.0L446.800 407.5L447.200 408.8L452.400 403.6zM466.100 404.4L460.900 409.6L462.200 410.0L456.700 413.0L459.600 407.5L460.100 408.8L465.200 403.6zM479.0 404.4L474.0 409.5L475.300 409.9L469.900 413.0L472.700 407.4L473.200 408.7L478.100 403.6zM491.800 404.4L487.500 409.4L488.700 409.7L483.500 413.0L486.100 407.3L486.600 408.6L491.0 403.6zM504.700 404.4L501.100 409.1L502.400 409.4L497.300 413.0L499.600 407.2L500.100 408.4L503.800 403.6zM517.600 404.3L514.800 408.8L516.200 408.9L511.500 413.0L513.100 407.0L513.800 408.1L516.600 403.7zM530.500 404.3L528.600 408.4L530.0 408.3L525.800 413.0L526.700 406.8L527.600 407.9L529.500 403.7zM543.500 404.2L542.400 408.0L543.700 407.7L540.400 413.0L540.300 406.8L541.200 407.7L542.300 403.8zM556.300 404.0L556.0 407.7L557.300 407.2L555.0 413.0L553.700 406.9L554.900 407.6L555.200 404.0zM157.400 394.0L157.400 397.3L158.600 396.7L156.800 402.7L155.0 396.7L156.200 397.3L156.200 394.0zM170.200 393.9L170.900 397.3L172.0 396.5L171.400 402.7L168.500 397.2L169.800 397.6L169.100 394.1zM183.100 393.8L184.600 397.5L185.500 396.5L186.0 402.7L182.100 397.8L183.500 397.9L182.0 394.2zM195.900 393.7L198.300 397.8L199.0 396.7L200.500 402.7L195.900 398.5L197.300 398.4L194.900 394.3zM208.700 393.6L212.0 398.0L212.600 396.8L214.700 402.7L209.700 399.0L211.0 398.7L207.800 394.4zM221.600 393.6L225.600 398.3L226.100 397.0L228.700 402.7L223.400 399.4L224.700 399.0L220.700 394.4zM234.400 393.6L239.100 398.4L239.500 397.2L242.400 402.7L237.0 399.6L238.200 399.2L233.600 394.4zM247.300 393.6L252.300 398.5L252.700 397.3L255.700 402.7L250.200 399.8L251.500 399.4L246.500 394.4zM260.200 393.6L265.300 398.5L265.700 397.3L268.700 402.7L263.200 399.8L264.500 399.4L259.300 394.4zM273.0 393.6L278.0 398.5L278.400 397.2L281.400 402.7L275.900 399.8L277.100 399.3L272.200 394.4zM285.900 393.6L290.400 398.4L290.900 397.1L293.700 402.7L288.300 399.6L289.600 399.2L285.0 394.4zM298.800 393.6L302.600 398.2L303.200 397.0L305.600 402.7L300.400 399.3L301.700 399.0L297.900 394.4zM311.700 393.7L314.700 398.0L315.300 396.8L317.300 402.7L312.400 398.8L313.700 398.6L310.700 394.3zM324.600 393.7L326.700 397.7L327.500 396.6L328.700 402.7L324.300 398.3L325.700 398.2L323.600 394.3zM337.500 393.8L338.800 397.4L339.700 396.5L340.0 402.7L336.300 397.7L337.700 397.8L336.400 394.2zM350.400 393.9L350.900 397.3L352.0 396.5L351.100 402.7L348.500 397.1L349.700 397.5L349.200 394.1zM363.300 394.0L363.100 397.4L364.300 396.9L362.200 402.7L360.800 396.6L361.900 397.3L362.100 394.0zM376.100 394.2L375.200 397.7L376.500 397.4L373.300 402.7L373.100 396.5L374.100 397.4L375.0 393.8zM389.0 394.2L387.200 398.1L388.600 398.0L384.500 402.7L385.300 396.5L386.100 397.6L387.900 393.8zM401.800 394.3L399.200 398.5L400.500 398.6L395.800 402.7L397.500 396.7L398.200 397.8L400.800 393.7zM414.600 394.4L411.100 398.8L412.400 399.1L407.400 402.7L409.600 396.9L410.200 398.1L413.700 393.6zM427.500 394.4L423.200 399.1L424.500 399.5L419.200 402.7L421.900 397.1L422.400 398.3L426.600 393.6zM440.300 394.4L435.500 399.3L436.800 399.7L431.400 402.7L434.300 397.2L434.700 398.5L439.500 393.6zM453.200 394.4L448.100 399.4L449.400 399.8L443.900 402.7L446.900 397.3L447.300 398.5L452.400 393.6zM466.100 394.4L461.0 399.4L462.200 399.8L456.700 402.7L459.700 397.3L460.100 398.5L465.200 393.6zM479.0 394.4L474.100 399.3L475.400 399.7L469.900 402.7L472.800 397.2L473.300 398.5L478.100 393.6zM491.800 394.4L487.500 399.1L488.800 399.5L483.500 402.7L486.200 397.1L486.600 398.3L491.0 393.6zM504.700 394.4L501.100 398.9L502.400 399.2L497.300 402.7L499.600 396.9L500.200 398.1L503.800 393.6zM517.600 394.3L514.900 398.5L516.200 398.7L511.500 402.7L513.200 396.7L513.900 397.9L516.600 393.7zM530.500 394.3L528.700 398.1L530.0 398.1L525.800 402.7L526.800 396.6L527.600 397.6L529.500 393.7zM543.500 394.2L542.400 397.7L543.700 397.5L540.400 402.7L540.300 396.5L541.300 397.4L542.300 393.8zM556.300 394.1L556.100 397.4L557.300 396.9L555.0 402.7L553.700 396.6L554.900 397.3L555.200 393.9zM157.400 384.0L157.400 386.7L158.600 386.1L156.800 392.1L155.0 386.1L156.200 386.7L156.200 384.0zM170.200 383.9L170.900 386.7L171.900 385.9L171.400 392.1L168.400 386.6L169.700 387.0L169.100 384.1zM183.100 383.8L184.400 386.9L185.300 385.9L186.0 392.1L182.0 387.3L183.300 387.4L182.0 384.2zM195.900 383.7L198.100 387.2L198.800 386.1L200.500 392.1L195.800 388.0L197.100 387.8L194.900 384.3zM208.700 383.6L211.800 387.5L212.400 386.3L214.700 392.1L209.600 388.5L210.900 388.3L207.800 384.4zM221.600 383.6L225.500 387.7L225.900 386.5L228.700 392.1L223.300 388.9L224.600 388.6L220.700 384.4zM234.400 383.6L238.900 387.9L239.300 386.7L242.400 392.1L236.900 389.2L238.100 388.8L233.600 384.4zM247.300 383.6L252.200 388.0L252.500 386.7L255.700 392.1L250.100 389.4L251.400 388.9L246.500 384.4zM260.100 383.6L265.100 388.0L265.500 386.8L268.700 392.1L263.100 389.4L264.300 388.9L259.300 384.4zM273.0 383.6L277.800 388.0L278.200 386.7L281.400 392.1L275.800 389.3L277.0 388.9L272.200 384.4zM285.900 383.6L290.300 387.9L290.700 386.6L293.700 392.1L288.200 389.2L289.400 388.7L285.100 384.4zM298.800 383.6L302.500 387.7L303.0 386.4L305.600 392.1L300.300 388.8L301.600 388.5L297.900 384.4zM311.700 383.6L314.500 387.4L315.100 386.2L317.300 392.1L312.300 388.4L313.600 388.1L310.700 384.4zM324.600 383.7L326.600 387.1L327.300 386.0L328.700 392.1L324.200 387.8L325.500 387.7L323.600 384.3zM337.500 383.8L338.700 386.8L339.600 385.9L340.0 392.1L336.200 387.1L337.500 387.3L336.400 384.2zM350.400 383.9L350.900 386.7L351.900 385.9L351.100 392.1L348.400 386.5L349.700 386.9L349.200 384.1zM363.300 384.0L363.100 386.8L364.300 386.2L362.200 392.1L360.800 386.0L361.900 386.7L362.100 384.0zM376.100 384.2L375.300 387.1L376.600 386.8L373.300 392.1L373.200 385.9L374.200 386.7L375.0 383.8zM389.0 384.3L387.400 387.5L388.700 387.5L384.500 392.1L385.500 385.9L386.300 387.0L387.900 383.7zM401.800 384.3L399.300 388.0L400.600 388.2L395.800 392.1L397.700 386.1L398.300 387.3L400.800 383.7zM414.600 384.4L411.300 388.4L412.600 388.7L407.400 392.1L409.800 386.4L410.400 387.6L413.700 383.6zM427.500 384.4L423.400 388.6L424.600 389.0L419.200 392.1L422.100 386.6L422.500 387.8L426.600 383.6zM440.300 384.4L435.700 388.8L436.900 389.3L431.400 392.1L434.500 386.7L434.900 388.0L439.500 383.6zM453.200 384.4L448.200 388.9L449.500 389.4L443.900 392.1L447.100 386.8L447.400 388.0L452.400 383.6zM466.100 384.4L461.100 388.9L462.300 389.4L456.700 392.1L459.900 386.8L460.300 388.0L465.300 383.6zM478.900 384.4L474.200 388.8L475.500 389.3L469.900 392.1L473.0 386.7L473.400 388.0L478.100 383.6zM491.800 384.4L487.600 388.7L488.900 389.1L483.500 392.1L486.400 386.6L486.800 387.8L491.0 383.6zM504.700 384.4L501.300 388.4L502.600 388.7L497.300 392.1L499.900 386.4L500.400 387.6L503.800 383.6zM517.600 384.3L515.0 388.0L516.300 388.2L511.500 392.1L513.400 386.2L514.100 387.3L516.700 383.7zM530.500 384.3L528.800 387.6L530.200 387.6L525.800 392.1L527.0 386.0L527.800 387.0L529.500 383.7zM543.400 384.2L542.500 387.1L543.800 386.9L540.400 392.1L540.400 385.9L541.400 386.8L542.300 383.8zM556.300 384.1L556.100 386.8L557.300 386.3L555.0 392.1L553.800 386.0L554.900 386.7L555.200 383.9zM157.400 374.0L157.400 375.8L158.600 375.2L156.800 381.1L155.0 375.2L156.200 375.8L156.200 374.0zM170.200 373.9L170.700 375.8L171.700 374.9L171.400 381.1L168.300 375.8L169.600 376.1L169.100 374.1zM183.100 373.7L184.200 376.0L185.0 375.0L186.0 381.1L181.800 376.6L183.100 376.6L182.0 374.3zM195.900 373.7L197.800 376.4L198.500 375.2L200.500 381.1L195.600 377.3L196.900 377.1L194.900 374.3zM208.700 373.6L211.600 376.7L212.0 375.5L214.700 381.1L209.400 377.9L210.700 377.5L207.800 374.4zM221.500 373.6L225.200 377.0L225.600 375.7L228.700 381.1L223.100 378.3L224.400 377.9L220.700 374.4zM234.400 373.5L238.700 377.2L239.0 375.9L242.400 381.1L236.700 378.6L237.900 378.1L233.600 374.5zM247.200 373.5L251.900 377.3L252.200 376.0L255.700 381.1L250.0 378.8L251.200 378.2L246.500 374.5zM260.100 373.5L264.900 377.3L265.200 376.0L268.700 381.1L263.0 378.8L264.200 378.3L259.400 374.5zM273.0 373.5L277.600 377.3L277.900 376.0L281.400 381.1L275.600 378.7L276.800 378.2L272.200 374.5zM285.900 373.6L290.0 377.1L290.300 375.9L293.700 381.1L288.0 378.6L289.200 378.0L285.100 374.4zM298.800 373.6L302.200 376.9L302.600 375.7L305.600 381.1L300.100 378.2L301.400 377.8L297.900 374.4zM311.700 373.6L314.300 376.7L314.800 375.4L317.300 381.1L312.100 377.7L313.400 377.4L310.800 374.4zM324.600 373.7L326.300 376.3L327.0 375.2L328.700 381.1L324.0 377.1L325.300 376.9L323.600 374.3zM337.500 373.8L338.400 375.9L339.300 374.9L340.0 381.1L336.0 376.3L337.300 376.4L336.400 374.2zM350.400 373.9L350.700 375.7L351.800 374.9L351.100 381.1L348.300 375.6L349.600 375.9L349.200 374.1zM363.300 374.0L363.200 375.8L364.400 375.3L362.200 381.1L360.800 375.0L362.0 375.7L362.100 374.0zM376.100 374.2L375.500 376.2L376.800 376.0L373.300 381.1L373.400 374.9L374.400 375.8L375.0 373.8zM389.0 374.3L387.600 376.7L388.900 376.8L384.500 381.1L385.800 375.0L386.600 376.1L387.900 373.7zM401.800 374.4L399.600 377.2L400.900 377.5L395.800 381.1L398.0 375.3L398.600 376.5L400.800 373.6zM414.600 374.4L411.500 377.7L412.800 378.0L407.400 381.1L410.200 375.6L410.600 376.8L413.800 373.6zM427.400 374.4L423.600 378.0L424.800 378.4L419.200 381.1L422.400 375.8L422.800 377.1L426.700 373.6zM440.300 374.5L435.900 378.1L437.100 378.7L431.400 381.1L434.800 375.9L435.100 377.2L439.500 373.5zM453.200 374.5L448.400 378.2L449.600 378.8L443.900 381.1L447.400 376.0L447.700 377.3L452.400 373.5zM466.0 374.5L461.300 378.2L462.500 378.8L456.700 381.1L460.300 376.0L460.500 377.3L465.300 373.5zM478.900 374.5L474.400 378.2L475.600 378.7L469.900 381.1L473.400 375.9L473.700 377.2L478.200 373.5zM491.800 374.4L487.800 378.0L489.100 378.5L483.500 381.1L486.700 375.8L487.100 377.1L491.0 373.6zM504.700 374.4L501.500 377.7L502.800 378.1L497.300 381.1L500.200 375.6L500.600 376.9L503.800 373.6zM517.600 374.4L515.300 377.3L516.600 377.6L511.500 381.1L513.800 375.3L514.300 376.6L516.700 373.6zM530.500 374.3L529.100 376.8L530.400 376.9L525.800 381.1L527.300 375.1L528.0 376.2L529.500 373.7zM543.400 374.2L542.700 376.3L544.0 376.1L540.400 381.1L540.700 374.9L541.600 375.9L542.300 373.8zM556.300 374.1L556.200 375.8L557.400 375.4L555.0 381.1L553.800 375.0L555.0 375.7L555.200 373.9zM157.400 364.0L157.400 364.6L158.500 364.0L156.800 369.9L155.0 364.0L156.200 364.6L156.200 364.0zM170.200 363.8L170.400 364.6L171.400 363.7L171.400 369.9L168.0 364.7L169.300 364.9L169.100 364.2zM183.0 363.7L183.800 365.0L184.500 363.9L186.0 369.9L181.400 365.7L182.800 365.6L182.0 364.3zM195.800 363.6L197.400 365.4L197.900 364.2L200.500 369.9L195.200 366.5L196.500 366.2L194.900 364.4zM208.700 363.6L211.200 365.8L211.500 364.5L214.700 369.9L209.100 367.2L210.400 366.7L207.900 364.4zM221.500 363.5L224.800 366.1L225.100 364.8L228.700 369.9L222.900 367.6L224.100 367.1L220.800 364.5zM234.300 363.5L238.300 366.3L238.500 365.0L242.400 369.9L236.500 367.9L237.700 367.3L233.700 364.5zM247.200 363.5L251.600 366.4L251.800 365.1L255.700 369.9L249.800 368.1L250.900 367.4L246.500 364.5zM260.100 363.5L264.600 366.4L264.700 365.1L268.700 369.9L262.800 368.1L263.900 367.4L259.400 364.5zM272.900 363.5L277.300 366.4L277.400 365.1L281.400 369.9L275.400 368.0L276.600 367.4L272.300 364.5zM285.800 363.5L289.700 366.3L289.900 365.0L293.700 369.9L287.800 367.9L289.0 367.2L285.100 364.5zM298.700 363.5L301.800 366.0L302.100 364.7L305.600 369.9L299.900 367.5L301.100 367.0L298.0 364.5zM311.600 363.6L313.900 365.7L314.300 364.5L317.300 369.9L311.800 367.0L313.0 366.6L310.800 364.4zM324.600 363.6L325.900 365.3L326.400 364.1L328.700 369.9L323.600 366.3L324.900 366.0L323.600 364.4zM337.500 363.7L338.100 364.8L338.800 363.8L340.0 369.9L335.700 365.4L337.0 365.4L336.400 364.3zM350.400 363.9L350.600 364.5L351.600 363.7L351.100 369.9L348.100 364.4L349.400 364.8L349.200 364.1zM363.300 364.1L363.200 364.6L364.500 364.2L362.200 369.9L360.900 363.8L362.100 364.5L362.100 363.9zM376.100 364.2L375.800 365.1L377.100 365.0L373.300 369.9L373.800 363.7L374.700 364.7L375.0 363.8zM388.900 364.3L388.0 365.8L389.300 365.9L384.500 369.9L386.300 363.9L387.0 365.1L387.900 363.7zM401.700 364.4L399.900 366.4L401.200 366.8L395.800 369.9L398.600 364.3L399.0 365.6L400.900 363.6zM414.600 364.5L411.800 366.8L413.0 367.3L407.400 369.9L410.700 364.6L411.0 365.9L413.800 363.5zM427.400 364.5L423.900 367.1L425.0 367.7L419.200 369.9L422.900 364.9L423.100 366.2L426.700 363.5zM440.300 364.5L436.100 367.3L437.300 368.0L431.400 369.9L435.300 365.0L435.400 366.4L439.600 363.5zM453.100 364.5L448.700 367.4L449.800 368.1L443.900 369.9L447.800 365.1L448.0 366.4L452.500 363.5zM466.0 364.5L461.500 367.4L462.700 368.1L456.700 369.9L460.700 365.1L460.900 366.4L465.300 363.5zM478.900 364.5L474.700 367.4L475.800 368.0L469.900 369.9L473.800 365.1L474.0 366.4L478.200 363.5zM491.800 364.5L488.100 367.2L489.300 367.8L483.500 369.9L487.200 364.9L487.400 366.2L491.0 363.5zM504.700 364.5L501.800 366.9L503.0 367.4L497.300 369.9L500.700 364.7L501.0 366.0L503.900 363.5zM517.600 364.4L515.600 366.4L516.900 366.8L511.500 369.9L514.300 364.4L514.800 365.6L516.700 363.6zM530.500 364.3L529.400 365.9L530.700 366.1L525.800 369.9L527.800 364.0L528.500 365.2L529.500 363.7zM543.400 364.2L543.0 365.2L544.300 365.1L540.400 369.9L541.100 363.7L541.900 364.7L542.300 363.8zM556.300 364.1L556.300 364.7L557.500 364.2L555.0 369.9L554.0 363.8L555.100 364.5L555.200 363.9zM157.200 354.0L157.200 354.4L158.100 354.0L156.800 358.4L155.500 354.0L156.300 354.4L156.300 354.0zM170.100 353.8L170.300 354.3L171.0 353.5L171.400 358.4L168.300 354.5L169.400 354.6L169.200 354.2zM183.0 353.6L183.300 354.1L183.800 352.9L186.0 358.4L181.200 355.1L182.400 354.8L182.100 354.4zM195.800 353.6L196.800 354.4L197.100 353.2L200.500 358.4L194.800 355.9L196.0 355.3L195.0 354.4zM208.600 353.5L210.600 354.9L210.800 353.6L214.700 358.4L208.800 356.5L210.0 355.9L207.900 354.5zM221.400 353.5L224.400 355.2L224.500 353.9L228.700 358.4L222.700 357.0L223.800 356.2L220.800 354.5zM234.300 353.5L237.900 355.4L237.900 354.1L242.400 358.4L236.300 357.2L237.400 356.4L233.700 354.5zM247.100 353.5L251.200 355.5L251.200 354.2L255.700 358.4L249.600 357.4L250.700 356.6L246.600 354.5zM260.0 353.5L264.200 355.5L264.200 354.2L268.700 358.4L262.600 357.4L263.700 356.6L259.500 354.5zM272.900 353.5L276.800 355.5L276.900 354.1L281.400 358.4L275.200 357.3L276.300 356.5L272.300 354.5zM285.800 353.5L289.200 355.3L289.300 354.0L293.700 358.4L287.600 357.2L288.700 356.4L285.200 354.5zM298.700 353.5L301.300 355.1L301.500 353.8L305.600 358.4L299.600 356.8L300.700 356.1L298.0 354.5zM311.600 353.5L313.300 354.8L313.500 353.5L317.300 358.4L311.400 356.4L312.600 355.7L310.900 354.5zM324.500 353.6L325.300 354.3L325.600 353.0L328.700 358.4L323.200 355.6L324.400 355.1L323.700 354.4zM337.400 353.7L337.700 354.1L338.300 353.1L340.0 358.4L335.600 354.9L336.800 354.7L336.500 354.3zM350.300 353.9L350.400 354.3L351.200 353.6L351.100 358.4L348.500 354.4L349.500 354.6L349.400 354.1zM363.100 354.1L363.100 354.5L364.0 354.2L362.200 358.4L361.400 353.8L362.200 354.4L362.300 353.9zM376.0 354.2L375.800 354.7L376.900 354.7L373.300 358.4L374.200 353.3L374.900 354.2L375.100 353.8zM388.900 354.4L388.500 354.8L389.800 355.2L384.500 358.4L387.100 352.8L387.600 354.0L388.0 353.6zM401.700 354.5L400.400 355.5L401.600 356.1L395.800 358.4L399.300 353.3L399.600 354.6L400.900 353.5zM414.500 354.5L412.200 356.0L413.300 356.7L407.400 358.4L411.400 353.7L411.500 355.0L413.900 353.5zM427.300 354.5L424.200 356.3L425.300 357.0L419.200 358.4L423.500 353.9L423.600 355.3L426.800 353.5zM440.200 354.5L436.400 356.5L437.500 357.3L431.400 358.4L435.800 354.1L435.900 355.4L439.600 353.5zM453.100 354.5L448.900 356.6L450.0 357.4L443.900 358.4L448.400 354.2L448.400 355.5L452.500 353.5zM465.900 354.5L461.800 356.6L462.800 357.4L456.700 358.4L461.300 354.2L461.200 355.5L465.400 353.5zM478.800 354.5L474.900 356.5L476.0 357.3L469.900 358.4L474.400 354.1L474.400 355.4L478.300 353.5zM491.700 354.5L488.400 356.3L489.500 357.1L483.500 358.4L487.800 354.0L487.900 355.3L491.100 353.5zM504.600 354.5L502.200 356.0L503.300 356.7L497.300 358.4L501.400 353.7L501.500 355.0L504.0 353.5zM517.500 354.5L516.100 355.6L517.300 356.2L511.500 358.4L515.100 353.3L515.300 354.7L516.800 353.5zM530.400 354.4L529.900 354.9L531.200 355.3L525.800 358.4L528.600 352.9L529.100 354.1L529.600 353.6zM543.300 354.3L543.100 354.7L544.200 354.8L540.400 358.4L541.600 353.2L542.200 354.2L542.400 353.7zM556.200 354.1L556.100 354.5L557.100 354.2L555.0 358.4L554.400 353.8L555.200 354.4L555.300 353.9zM157.100 344.0L157.100 344.3L157.600 344.0L156.800 346.8L156.0 344.0L156.500 344.3L156.500 344.0zM169.900 343.8L170.100 344.1L170.500 343.5L171.400 346.8L168.800 344.5L169.600 344.5L169.400 344.2zM182.800 343.6L183.100 343.9L183.300 342.9L186.0 346.8L181.700 345.1L182.600 344.6L182.200 344.4zM195.700 343.5L196.200 343.8L196.200 342.5L200.500 346.8L194.600 345.5L195.600 344.8L195.100 344.5zM208.500 343.5L210.0 344.1L209.900 342.8L214.700 346.8L208.500 346.1L209.600 345.2L208.0 344.5zM221.300 343.4L223.900 344.4L223.700 343.0L228.700 346.8L222.500 346.4L223.500 345.5L220.900 344.6zM234.200 343.4L237.500 344.5L237.300 343.2L242.400 346.8L236.200 346.6L237.100 345.7L233.800 344.6zM247.0 343.4L250.800 344.6L250.600 343.3L255.700 346.8L249.500 346.7L250.400 345.7L246.700 344.6zM259.900 343.4L263.800 344.6L263.600 343.3L268.700 346.8L262.500 346.7L263.400 345.8L259.600 344.6zM272.800 343.4L276.400 344.6L276.200 343.3L281.400 346.8L275.200 346.7L276.100 345.7L272.400 344.6zM285.700 343.4L288.800 344.5L288.600 343.2L293.700 346.8L287.400 346.5L288.400 345.6L285.300 344.6zM298.600 343.4L300.800 344.3L300.700 343.0L305.600 346.8L299.400 346.3L300.400 345.4L298.100 344.6zM311.500 343.5L312.700 344.0L312.600 342.7L317.300 346.8L311.100 345.9L312.200 345.1L311.0 344.5zM324.400 343.5L324.800 343.8L324.900 342.6L328.700 346.8L323.300 345.4L324.300 344.7L323.800 344.5zM337.200 343.7L337.500 344.0L337.800 343.1L340.0 346.8L336.100 344.9L337.0 344.6L336.700 344.3zM350.100 343.9L350.200 344.1L350.700 343.6L351.100 346.8L349.0 344.4L349.700 344.4L349.600 344.1zM363.0 344.1L362.900 344.3L363.500 344.2L362.200 346.8L361.900 343.8L362.400 344.2L362.400 343.9zM375.800 344.2L375.600 344.5L376.400 344.7L373.300 346.8L374.700 343.3L375.100 344.0L375.300 343.8zM388.700 344.4L388.300 344.7L389.300 345.2L384.500 346.8L387.600 342.8L387.800 343.9L388.200 343.6zM401.600 344.5L400.900 344.9L401.900 345.7L395.800 346.8L400.300 342.5L400.300 343.8L401.0 343.5zM414.400 344.6L412.600 345.3L413.600 346.2L407.400 346.8L412.200 342.9L412.100 344.2L414.0 343.4zM427.200 344.6L424.500 345.5L425.400 346.5L419.200 346.8L424.200 343.1L424.100 344.4L426.900 343.4zM440.100 344.6L436.600 345.7L437.600 346.6L431.400 346.8L436.500 343.2L436.300 344.6L439.700 343.4zM453.0 344.6L449.100 345.7L450.100 346.7L443.900 346.8L449.0 343.3L448.800 344.6L452.600 343.4zM465.800 344.6L462.0 345.8L462.900 346.7L456.700 346.8L461.900 343.3L461.600 344.6L465.500 343.4zM478.700 344.6L475.200 345.7L476.100 346.6L469.900 346.8L475.0 343.2L474.800 344.6L478.300 343.4zM491.600 344.6L488.700 345.6L489.700 346.5L483.500 346.8L488.500 343.1L488.300 344.4L491.200 343.4zM504.500 344.6L502.500 345.3L503.500 346.2L497.300 346.8L502.200 342.9L502.100 344.2L504.100 343.4zM517.400 344.5L516.500 345.0L517.600 345.8L511.500 346.8L516.0 342.6L516.0 343.9L516.900 343.5zM530.300 344.4L529.900 344.7L530.800 345.3L525.800 346.8L529.200 342.7L529.300 343.9L529.700 343.6zM543.200 344.3L542.900 344.5L543.700 344.8L540.400 346.8L542.100 343.2L542.400 344.0L542.600 343.7zM556.0 344.1L556.0 344.4L556.600 344.2L555.0 346.8L554.900 343.8L555.400 344.2L555.500 343.9zM156.800 334.6L157.300 334.3L157.300 333.7L156.800 333.4L156.300 333.7L156.300 334.3zM169.800 333.8L169.900 333.9L170.0 333.5L171.400 335.0L169.300 334.5L169.700 334.3L169.500 334.2zM182.600 333.6L183.0 333.8L182.800 332.9L186.0 335.0L182.200 335.1L182.800 334.5L182.400 334.4zM195.500 333.5L196.0 333.6L195.700 332.5L200.500 335.0L195.100 335.5L195.800 334.6L195.300 334.5zM208.400 333.4L209.500 333.6L209.100 332.3L214.700 335.0L208.600 335.9L209.300 334.8L208.200 334.6zM221.200 333.4L223.500 333.7L223.0 332.5L228.700 335.0L222.600 336.0L223.300 334.9L221.100 334.6zM234.100 333.4L237.100 333.8L236.700 332.5L242.400 335.0L236.300 336.1L237.0 335.0L233.900 334.6zM246.900 333.4L250.500 333.8L250.0 332.6L255.700 335.0L249.600 336.1L250.300 335.0L246.800 334.6zM259.800 333.4L263.500 333.8L263.0 332.6L268.700 335.0L262.600 336.1L263.300 335.0L259.700 334.6zM272.700 333.4L276.100 333.8L275.700 332.6L281.400 335.0L275.200 336.1L276.0 335.0L272.500 334.6zM285.600 333.4L288.400 333.8L288.0 332.5L293.700 335.0L287.500 336.1L288.300 334.9L285.400 334.6zM298.400 333.4L300.400 333.7L300.0 332.4L305.600 335.0L299.500 336.0L300.200 334.9L298.300 334.6zM311.300 333.4L312.100 333.5L311.700 332.3L317.300 335.0L311.100 335.8L311.900 334.7L311.100 334.6zM324.200 333.5L324.700 333.6L324.400 332.6L328.700 335.0L323.800 335.4L324.500 334.6L324.0 334.5zM337.100 333.7L337.400 333.8L337.300 333.1L340.0 335.0L336.700 334.9L337.200 334.4L336.900 334.3zM349.900 333.9L350.100 334.0L350.100 333.6L351.100 335.0L349.500 334.4L349.900 334.2L349.700 334.1zM362.400 334.5L363.0 334.5L363.300 334.0L363.0 333.5L362.400 333.5L362.100 334.0zM375.700 334.2L375.400 334.3L375.900 334.7L373.300 335.0L375.300 333.3L375.200 333.9L375.500 333.8zM388.500 334.4L388.100 334.5L388.700 335.2L384.500 335.0L388.100 332.8L387.900 333.7L388.300 333.6zM401.400 334.6L400.900 334.7L401.600 335.7L395.800 335.0L401.0 332.3L400.700 333.6L401.200 333.4zM414.300 334.6L412.800 334.8L413.500 335.9L407.400 335.0L413.0 332.4L412.600 333.6L414.100 333.4zM427.100 334.6L424.600 334.9L425.300 336.0L419.200 335.0L424.900 332.5L424.400 333.7L427.0 333.4zM440.0 334.6L436.800 335.0L437.500 336.1L431.400 335.0L437.100 332.5L436.600 333.8L439.900 333.4zM452.900 334.6L449.200 335.0L450.0 336.1L443.900 335.0L449.600 332.6L449.100 333.8L452.700 333.4zM465.700 334.6L462.100 335.0L462.800 336.1L456.700 335.0L462.400 332.6L462.0 333.8L465.600 333.4zM478.600 334.6L475.300 335.0L476.0 336.1L469.900 335.0L475.600 332.5L475.200 333.8L478.500 333.4zM491.500 334.6L488.800 334.9L489.600 336.0L483.500 335.0L489.100 332.5L488.700 333.7L491.300 333.4zM504.400 334.6L502.700 334.8L503.500 335.9L497.300 335.0L503.0 332.4L502.500 333.7L504.200 333.4zM517.200 334.6L516.700 334.7L517.400 335.7L511.500 335.0L516.800 332.3L516.500 333.5L517.0 333.4zM530.100 334.4L529.700 334.5L530.300 335.3L525.800 335.0L529.700 332.7L529.500 333.7L529.900 333.6zM543.0 334.3L542.700 334.4L543.200 334.8L540.400 335.0L542.600 333.2L542.500 333.8L542.800 333.7zM555.900 334.1L555.800 334.2L556.100 334.2L555.0 335.0L555.400 333.8L555.600 334.0L555.600 333.9zM156.800 323.4L156.300 323.7L156.300 324.3L156.800 324.6L157.300 324.3L157.300 323.7zM169.600 323.8L169.700 323.7L169.400 323.5L171.400 323.2L169.900 324.5L169.900 324.1L169.700 324.2zM182.400 323.6L182.800 323.6L182.300 322.9L186.0 323.2L182.800 325.1L182.900 324.3L182.600 324.4zM195.300 323.5L195.800 323.4L195.200 322.5L200.500 323.2L195.600 325.5L196.0 324.4L195.500 324.5zM208.200 323.4L209.300 323.3L208.600 322.2L214.700 323.2L209.0 325.7L209.500 324.5L208.300 324.6zM221.100 323.4L223.300 323.2L222.600 322.1L228.700 323.2L223.0 325.6L223.400 324.4L221.200 324.6zM233.900 323.4L237.0 323.1L236.300 322.0L242.400 323.2L236.600 325.5L237.100 324.3L234.100 324.6zM246.800 323.4L250.300 323.1L249.600 322.0L255.700 323.2L250.0 325.5L250.400 324.3L246.900 324.6zM259.700 323.4L263.300 323.1L262.600 322.0L268.700 323.2L263.0 325.5L263.400 324.3L259.800 324.6zM272.600 323.4L276.0 323.1L275.300 322.0L281.400 323.2L275.600 325.5L276.100 324.3L272.700 324.6zM285.400 323.4L288.300 323.1L287.600 322.0L293.700 323.2L287.900 325.6L288.400 324.3L285.500 324.6zM298.300 323.4L300.200 323.2L299.500 322.1L305.600 323.2L299.900 325.6L300.400 324.4L298.400 324.6zM311.100 323.4L311.900 323.3L311.200 322.2L317.300 323.2L311.600 325.7L312.100 324.5L311.300 324.6zM324.0 323.5L324.500 323.5L323.900 322.6L328.700 323.2L324.300 325.4L324.600 324.4L324.200 324.5zM336.900 323.7L337.200 323.6L336.700 323.1L340.0 323.2L337.200 324.9L337.300 324.2L337.0 324.3zM349.800 323.9L349.900 323.8L349.600 323.6L351.100 323.2L350.100 324.4L350.0 324.0L349.900 324.1zM362.400 323.5L362.100 324.0L362.400 324.5L363.0 324.5L363.300 324.0L363.0 323.5zM375.500 324.2L375.300 324.2L375.300 324.7L373.300 323.2L375.800 323.3L375.400 323.7L375.600 323.8zM388.400 324.4L388.0 324.3L388.200 325.2L384.500 323.2L388.700 322.8L388.100 323.5L388.500 323.6zM401.200 324.6L400.700 324.5L401.100 325.7L395.800 323.2L401.500 322.3L400.800 323.4L401.400 323.4zM414.100 324.6L412.600 324.4L413.100 325.7L407.400 323.2L413.500 322.1L412.800 323.2L414.200 323.4zM427.0 324.6L424.500 324.3L425.0 325.6L419.200 323.2L425.300 322.0L424.600 323.2L427.100 323.4zM439.900 324.6L436.600 324.3L437.100 325.5L431.400 323.2L437.500 322.0L436.800 323.1L440.0 323.4zM452.700 324.6L449.100 324.3L449.600 325.5L443.900 323.2L449.900 322.0L449.200 323.1L452.800 323.4zM465.600 324.6L462.0 324.3L462.500 325.5L456.700 323.2L462.800 322.0L462.100 323.1L465.700 323.4zM478.500 324.6L475.200 324.3L475.700 325.5L469.900 323.2L476.0 322.0L475.300 323.1L478.600 323.4zM491.300 324.6L488.700 324.3L489.200 325.6L483.500 323.2L489.600 322.0L488.800 323.1L491.500 323.4zM504.200 324.6L502.600 324.4L503.0 325.7L497.300 323.2L503.400 322.1L502.700 323.2L504.300 323.4zM517.100 324.6L516.500 324.5L516.900 325.7L511.500 323.2L517.400 322.3L516.700 323.4L517.200 323.4zM529.900 324.4L529.500 324.3L529.800 325.3L525.800 323.2L530.200 322.7L529.700 323.5L530.100 323.6zM542.800 324.3L542.600 324.2L542.600 324.8L540.400 323.2L543.100 323.2L542.700 323.7L543.0 323.7zM555.300 323.6L555.200 324.1L555.600 324.6L556.200 324.4L556.300 323.9L555.900 323.4zM156.500 314.0L156.500 313.7L156.0 314.0L156.800 311.4L157.500 314.0L157.0 313.7L157.0 314.0zM169.400 313.8L169.600 313.6L168.900 313.5L171.400 311.4L170.400 314.5L170.100 313.9L169.900 314.2zM182.300 313.6L182.600 313.4L181.800 312.9L186.0 311.4L183.300 315.1L183.100 314.1L182.800 314.4zM195.100 313.5L195.600 313.2L194.600 312.5L200.500 311.4L196.200 315.5L196.200 314.3L195.600 314.5zM208.0 313.4L209.500 312.9L208.500 312.0L214.700 311.4L209.800 315.3L209.900 314.0L208.500 314.6zM220.900 313.4L223.400 312.6L222.500 311.7L228.700 311.4L223.600 315.0L223.800 313.7L221.300 314.6zM233.800 313.4L237.100 312.4L236.200 311.5L242.400 311.4L237.200 314.9L237.400 313.6L234.200 314.6zM246.700 313.4L250.400 312.4L249.500 311.4L255.700 311.4L250.500 314.8L250.700 313.5L247.0 314.6zM259.600 313.4L263.400 312.3L262.500 311.4L268.700 311.4L263.500 314.8L263.700 313.5L259.900 314.6zM272.400 313.4L276.100 312.4L275.200 311.4L281.400 311.4L276.200 314.8L276.400 313.5L272.800 314.6zM285.300 313.4L288.400 312.5L287.400 311.5L293.700 311.4L288.500 314.9L288.700 313.6L285.700 314.6zM298.200 313.4L300.400 312.7L299.400 311.7L305.600 311.4L300.600 315.1L300.800 313.8L298.500 314.6zM311.0 313.5L312.100 313.0L311.100 312.1L317.300 311.4L312.500 315.4L312.600 314.1L311.500 314.5zM323.800 313.5L324.300 313.3L323.300 312.6L328.700 311.4L324.900 315.4L324.800 314.2L324.300 314.5zM336.700 313.7L337.0 313.4L336.200 313.1L340.0 311.4L337.700 314.9L337.500 314.0L337.200 314.3zM349.600 313.9L349.700 313.6L349.100 313.6L351.100 311.4L350.600 314.4L350.200 313.9L350.100 314.1zM362.400 314.1L362.400 313.8L361.900 314.2L362.200 311.4L363.500 313.8L362.900 313.7L363.0 313.9zM375.300 314.2L375.100 314.0L374.800 314.7L373.300 311.4L376.300 313.3L375.600 313.5L375.800 313.8zM388.200 314.4L387.800 314.1L387.700 315.2L384.500 311.4L389.200 312.8L388.300 313.3L388.700 313.6zM401.100 314.5L400.400 314.2L400.500 315.6L395.800 311.4L402.0 312.3L400.900 313.2L401.600 313.5zM414.0 314.6L412.200 313.9L412.300 315.2L407.400 311.4L413.600 311.9L412.600 312.8L414.400 313.4zM426.900 314.6L424.100 313.7L424.300 315.0L419.200 311.4L425.400 311.6L424.500 312.5L427.200 313.4zM439.800 314.6L436.300 313.5L436.600 314.9L431.400 311.4L437.600 311.4L436.700 312.4L440.100 313.4zM452.600 314.6L448.800 313.5L449.100 314.8L443.900 311.4L450.100 311.4L449.200 312.3L453.0 313.4zM465.500 314.6L461.700 313.5L461.900 314.8L456.700 311.4L462.900 311.4L462.0 312.3L465.800 313.4zM478.400 314.6L474.900 313.5L475.100 314.8L469.900 311.4L476.100 311.4L475.200 312.4L478.700 313.4zM491.200 314.6L488.400 313.7L488.600 315.0L483.500 311.4L489.700 311.6L488.700 312.5L491.600 313.4zM504.100 314.6L502.100 313.9L502.300 315.2L497.300 311.4L503.500 311.8L502.600 312.7L504.500 313.4zM516.900 314.5L516.100 314.2L516.200 315.5L511.500 311.4L517.600 312.3L516.600 313.1L517.400 313.5zM529.800 314.4L529.300 314.2L529.200 315.3L525.800 311.4L530.800 312.7L529.800 313.3L530.300 313.6zM542.600 314.3L542.400 314.0L542.100 314.8L540.400 311.4L543.600 313.2L542.900 313.5L543.100 313.7zM555.500 314.1L555.400 313.8L555.0 314.2L555.0 311.4L556.500 313.8L555.900 313.7L556.0 313.9zM156.400 304.0L156.400 303.6L155.500 304.0L156.800 299.8L158.0 304.0L157.200 303.6L157.200 304.0zM169.200 303.8L169.400 303.4L168.400 303.5L171.400 299.8L170.900 304.5L170.200 303.8L170.100 304.2zM182.100 303.6L182.400 303.2L181.300 302.9L186.0 299.8L183.800 305.1L183.300 303.9L182.900 304.4zM195.000 303.5L196.0 302.7L194.700 302.2L200.500 299.8L197.0 305.0L196.700 303.7L195.800 304.5zM207.900 303.5L209.900 302.2L208.800 301.5L214.700 299.8L210.700 304.5L210.600 303.2L208.600 304.5zM220.800 303.5L223.700 301.9L222.600 301.1L228.700 299.8L224.400 304.2L224.300 302.9L221.400 304.5zM233.700 303.5L237.300 301.7L236.300 300.9L242.400 299.8L237.900 304.1L237.900 302.7L234.300 304.5zM246.600 303.5L250.600 301.5L249.600 300.7L255.700 299.8L251.100 304.0L251.100 302.6L247.100 304.5zM259.500 303.5L263.600 301.5L262.600 300.7L268.700 299.8L264.100 303.9L264.100 302.6L260.0 304.5zM272.400 303.5L276.300 301.6L275.200 300.8L281.400 299.8L276.800 304.0L276.800 302.6L272.900 304.5zM285.200 303.5L288.600 301.7L287.500 300.9L293.700 299.8L289.200 304.1L289.200 302.8L285.800 304.5zM298.100 303.5L300.700 302.0L299.600 301.2L305.600 299.8L301.400 304.3L301.300 303.0L298.600 304.5zM310.900 303.5L312.600 302.4L311.400 301.7L317.300 299.8L313.400 304.6L313.200 303.3L311.600 304.5zM323.700 303.6L324.400 302.9L323.100 302.5L328.700 299.8L325.500 305.1L325.200 303.8L324.500 304.4zM336.500 303.7L336.800 303.3L335.700 303.1L340.0 299.8L338.200 304.9L337.700 303.9L337.400 304.3zM349.400 303.9L349.500 303.5L348.600 303.6L351.100 299.8L351.100 304.4L350.400 303.7L350.300 304.1zM362.300 304.1L362.200 303.6L361.400 304.2L362.200 299.8L364.0 303.8L363.100 303.5L363.100 303.9zM375.100 304.2L374.900 303.8L374.300 304.7L373.300 299.8L376.800 303.3L375.800 303.3L376.0 303.8zM388.0 304.4L387.600 304.0L387.200 305.2L384.500 299.8L389.700 302.8L388.500 303.2L388.900 303.6zM400.900 304.5L399.700 303.5L399.400 304.8L395.800 299.8L401.600 302.0L400.400 302.6L401.700 303.5zM413.900 304.5L411.600 303.1L411.500 304.4L407.400 299.8L413.400 301.4L412.200 302.1L414.500 303.5zM426.800 304.5L423.600 302.8L423.600 304.2L419.200 299.8L425.300 301.0L424.200 301.8L427.300 303.5zM439.700 304.5L435.900 302.7L435.900 304.0L431.400 299.8L437.500 300.8L436.400 301.6L440.200 303.5zM452.500 304.5L448.400 302.6L448.500 303.9L443.900 299.8L450.0 300.7L449.0 301.5L453.0 303.5zM465.400 304.5L461.300 302.6L461.300 303.9L456.700 299.8L462.800 300.7L461.800 301.5L465.900 303.5zM478.300 304.5L474.500 302.7L474.500 304.0L469.900 299.8L476.0 300.8L475.0 301.6L478.800 303.5zM491.100 304.5L487.900 302.8L487.900 304.2L483.500 299.8L489.600 301.0L488.500 301.8L491.700 303.5zM504.0 304.5L501.600 303.1L501.500 304.4L497.300 299.8L503.300 301.3L502.200 302.1L504.600 303.5zM516.800 304.5L515.400 303.5L515.200 304.8L511.500 299.8L517.300 301.9L516.100 302.5L517.500 303.5zM529.600 304.4L529.200 304.0L528.700 305.3L525.800 299.8L531.300 302.7L530.0 303.2L530.400 303.6zM542.500 304.3L542.200 303.8L541.600 304.8L540.400 299.8L544.100 303.2L543.100 303.3L543.300 303.7zM555.300 304.1L555.300 303.7L554.500 304.2L555.0 299.8L557.0 303.8L556.100 303.5L556.200 303.9zM156.200 294.0L156.200 293.4L155.100 294.0L156.800 288.3L158.500 294.0L157.400 293.4L157.400 294.0zM169.100 293.8L169.300 293.2L168.0 293.4L171.400 288.3L171.400 294.5L170.400 293.6L170.200 294.2zM182.0 293.7L182.700 292.5L181.400 292.4L186.0 288.3L184.400 294.3L183.700 293.2L183.0 294.3zM194.900 293.6L196.500 291.9L195.200 291.6L200.500 288.3L197.800 293.9L197.400 292.7L195.800 294.4zM207.900 293.6L210.300 291.4L209.100 290.9L214.700 288.3L211.400 293.6L211.100 292.3L208.700 294.4zM220.800 293.5L224.100 291.0L222.900 290.5L228.700 288.3L225.0 293.3L224.800 292.0L221.500 294.5zM233.700 293.5L237.600 290.8L236.500 290.2L242.400 288.3L238.500 293.1L238.300 291.8L234.300 294.5zM246.500 293.5L250.900 290.7L249.800 290.0L255.700 288.3L251.700 293.0L251.500 291.7L247.200 294.5zM259.400 293.5L263.900 290.7L262.700 290.0L268.700 288.3L264.700 293.0L264.500 291.7L260.100 294.5zM272.300 293.5L276.600 290.7L275.400 290.0L281.400 288.3L277.400 293.0L277.200 291.7L272.900 294.5zM285.100 293.5L288.900 290.9L287.800 290.2L293.700 288.3L289.800 293.2L289.600 291.8L285.800 294.5zM298.0 293.5L301.0 291.1L299.800 290.6L305.600 288.3L302.0 293.4L301.800 292.1L298.700 294.5zM310.800 293.6L313.0 291.5L311.700 291.1L317.300 288.3L314.200 293.7L313.800 292.4L311.600 294.4zM323.600 293.6L324.900 292.1L323.600 291.8L328.700 288.3L326.400 294.0L325.800 292.8L324.600 294.4zM336.400 293.7L336.900 292.8L335.600 292.7L340.0 288.3L338.800 294.4L338.0 293.3L337.500 294.3zM349.300 293.9L349.400 293.3L348.100 293.6L351.100 288.3L351.500 294.4L350.500 293.6L350.400 294.1zM362.100 294.1L362.100 293.5L361.0 294.2L362.200 288.3L364.400 293.8L363.200 293.4L363.300 293.9zM375.0 294.2L374.700 293.5L373.800 294.5L373.300 288.3L377.200 293.1L375.800 293.0L376.100 293.8zM388.0 294.3L387.0 293.0L386.400 294.2L384.500 288.3L389.300 292.2L388.0 292.3L388.900 293.7zM400.900 294.4L399.100 292.6L398.700 293.8L395.800 288.3L401.200 291.3L400.0 291.7L401.700 293.6zM413.800 294.5L411.100 292.2L410.800 293.5L407.400 288.3L413.100 290.7L411.900 291.3L414.600 293.5zM426.700 294.5L423.200 291.9L423.0 293.2L419.200 288.3L425.100 290.4L423.900 291.0L427.400 293.5zM439.600 294.5L435.500 291.8L435.300 293.1L431.400 288.3L437.300 290.1L436.200 290.8L440.300 293.5zM452.500 294.5L448.0 291.7L447.900 293.0L443.900 288.3L449.800 290.0L448.700 290.7L453.100 293.5zM465.300 294.5L460.900 291.7L460.800 293.0L456.700 288.3L462.700 290.0L461.500 290.7L466.0 293.5zM478.200 294.5L474.0 291.7L473.900 293.1L469.900 288.3L475.900 290.1L474.700 290.8L478.900 293.5zM491.100 294.5L487.500 291.9L487.200 293.2L483.500 288.3L489.300 290.3L488.200 290.9L491.700 293.5zM503.900 294.5L501.100 292.2L500.800 293.4L497.300 288.3L503.100 290.7L501.800 291.2L504.600 293.5zM516.700 294.4L514.800 292.5L514.400 293.8L511.500 288.3L516.900 291.3L515.700 291.7L517.600 293.6zM529.500 294.4L528.500 293.0L527.900 294.1L525.800 288.3L530.800 292.0L529.500 292.3L530.500 293.6zM542.300 294.2L542.0 293.4L541.100 294.5L540.400 288.3L544.400 293.0L543.100 293.0L543.400 293.8zM555.200 294.1L555.100 293.5L554.0 294.2L555.0 288.3L557.500 293.8L556.200 293.4L556.300 293.9zM156.200 284.0L156.200 282.4L155.0 283.0L156.800 277.0L158.600 283.0L157.400 282.4L157.400 284.0zM169.100 283.9L169.500 282.1L168.200 282.3L171.400 277.0L171.700 283.2L170.700 282.4L170.200 284.1zM182.0 283.7L183.100 281.5L181.800 281.5L186.0 277.0L184.900 283.1L184.100 282.1L183.100 284.3zM194.900 283.6L196.800 281.0L195.500 280.8L200.500 277.0L198.400 282.9L197.800 281.7L195.900 284.4zM207.800 283.6L210.600 280.6L209.400 280.2L214.700 277.0L212.0 282.6L211.500 281.4L208.700 284.4zM220.700 283.6L224.400 280.2L223.100 279.7L228.700 277.0L225.500 282.4L225.200 281.1L221.500 284.4zM233.600 283.5L237.900 280.0L236.700 279.5L242.400 277.0L238.900 282.2L238.600 280.9L234.400 284.5zM246.500 283.5L251.200 279.9L249.900 279.3L255.700 277.0L252.200 282.1L251.900 280.8L247.200 284.5zM259.400 283.5L264.100 279.8L262.900 279.3L268.700 277.0L265.100 282.1L264.900 280.8L260.100 284.5zM272.200 283.5L276.800 279.9L275.600 279.3L281.400 277.0L277.800 282.1L277.500 280.8L273.0 284.5zM285.100 283.5L289.200 280.1L288.0 279.5L293.700 277.0L290.300 282.2L290.0 281.0L285.900 284.5zM297.900 283.6L301.300 280.3L300.100 279.9L305.600 277.0L302.600 282.4L302.200 281.2L298.800 284.4zM310.800 283.6L313.300 280.7L312.0 280.3L317.300 277.0L314.700 282.7L314.200 281.5L311.700 284.4zM323.600 283.7L325.300 281.2L323.900 281.0L328.700 277.0L326.900 283.0L326.300 281.8L324.600 284.3zM336.400 283.8L337.300 281.7L336.0 281.8L340.0 277.0L339.300 283.2L338.400 282.2L337.500 284.2zM349.200 283.9L349.600 282.2L348.300 282.6L351.100 277.0L351.800 283.2L350.700 282.4L350.400 284.1zM362.100 284.0L362.0 282.4L360.800 283.1L362.200 277.0L364.400 282.8L363.200 282.3L363.300 284.0zM375.0 284.2L374.400 282.3L373.400 283.2L373.300 277.0L376.800 282.1L375.500 281.9L376.100 283.8zM387.900 284.3L386.600 282.0L385.900 283.1L384.500 277.0L389.0 281.3L387.600 281.4L389.0 283.7zM400.800 284.4L398.700 281.6L398.100 282.8L395.800 277.0L400.900 280.6L399.600 280.9L401.800 283.6zM413.800 284.4L410.700 281.3L410.300 282.5L407.400 277.0L412.800 280.0L411.500 280.4L414.600 283.6zM426.700 284.4L422.800 281.0L422.500 282.3L419.200 277.0L424.800 279.6L423.600 280.1L427.400 283.6zM439.500 284.5L435.100 280.9L434.800 282.2L431.400 277.0L437.100 279.4L435.900 279.9L440.300 283.5zM452.400 284.5L447.700 280.8L447.400 282.1L443.900 277.0L449.600 279.3L448.400 279.9L453.200 283.5zM465.300 284.5L460.600 280.8L460.300 282.1L456.700 277.0L462.500 279.3L461.300 279.8L466.0 283.5zM478.200 284.5L473.700 280.9L473.400 282.2L469.900 277.0L475.700 279.4L474.400 279.9L478.900 283.5zM491.0 284.4L487.100 281.0L486.800 282.3L483.500 277.0L489.100 279.6L487.900 280.1L491.800 283.6zM503.800 284.4L500.700 281.2L500.300 282.5L497.300 277.0L502.800 280.0L501.500 280.4L504.700 283.6zM516.700 284.4L514.400 281.6L513.800 282.8L511.500 277.0L516.600 280.5L515.300 280.8L517.600 283.6zM529.500 284.3L528.100 281.9L527.400 283.0L525.800 277.0L530.400 281.2L529.100 281.3L530.500 283.7zM542.300 284.2L541.600 282.3L540.700 283.2L540.400 277.0L544.100 282.0L542.700 281.9L543.400 283.8zM555.200 284.1L555.0 282.4L553.900 283.1L555.0 277.0L557.400 282.8L556.200 282.3L556.300 283.9zM156.200 274.0L156.200 271.4L155.0 272.0L156.800 266.0L158.600 272.0L157.400 271.4L157.400 274.0zM169.100 273.9L169.700 271.1L168.400 271.5L171.400 266.0L171.900 272.2L170.800 271.4L170.200 274.1zM182.0 273.8L183.300 270.7L182.0 270.8L186.0 266.0L185.300 272.2L184.400 271.2L183.100 274.2zM194.900 273.7L197.100 270.2L195.800 270.1L200.500 266.0L198.800 272.0L198.100 270.9L195.900 274.3zM207.800 273.6L210.900 269.8L209.600 269.5L214.700 266.0L212.400 271.8L211.800 270.6L208.700 274.4zM220.700 273.6L224.600 269.5L223.300 269.1L228.700 266.0L225.900 271.6L225.400 270.3L221.600 274.4zM233.600 273.6L238.100 269.3L236.800 268.8L242.400 266.0L239.300 271.4L238.900 270.2L234.400 274.4zM246.500 273.6L251.300 269.2L250.100 268.7L255.700 266.0L252.500 271.3L252.100 270.1L247.300 274.4zM259.300 273.6L264.300 269.1L263.100 268.6L268.700 266.0L265.500 271.3L265.100 270.0L260.100 274.4zM272.200 273.6L277.0 269.2L275.800 268.7L281.400 266.0L278.200 271.4L277.800 270.1L273.0 274.4zM285.100 273.6L289.400 269.3L288.100 268.9L293.700 266.0L290.600 271.5L290.200 270.2L285.900 274.4zM297.900 273.6L301.600 269.6L300.300 269.2L305.600 266.0L302.900 271.6L302.400 270.4L298.800 274.4zM310.700 273.6L313.600 269.9L312.300 269.7L317.300 266.0L315.100 271.9L314.500 270.7L311.700 274.4zM323.600 273.7L325.500 270.4L324.200 270.3L328.700 266.0L327.300 272.1L326.500 271.0L324.600 274.3zM336.400 273.8L337.500 270.8L336.200 271.0L340.0 266.0L339.500 272.2L338.600 271.3L337.500 274.2zM349.200 273.9L349.700 271.2L348.400 271.6L351.100 266.0L351.900 272.2L350.800 271.4L350.400 274.1zM362.100 274.0L361.900 271.4L360.800 272.1L362.200 266.0L364.300 271.9L363.100 271.3L363.300 274.0zM375.0 274.2L374.200 271.3L373.200 272.3L373.300 266.0L376.600 271.3L375.300 271.0L376.100 273.8zM387.900 274.3L386.300 271.1L385.500 272.2L384.500 266.0L388.700 270.6L387.400 270.6L389.0 273.7zM400.800 274.3L398.400 270.8L397.700 271.9L395.800 266.0L400.700 269.9L399.300 270.1L401.800 273.7zM413.700 274.4L410.400 270.5L409.900 271.7L407.400 266.0L412.600 269.4L411.300 269.7L414.600 273.6zM426.600 274.4L422.500 270.3L422.100 271.5L419.200 266.0L424.700 269.0L423.400 269.4L427.500 273.6zM439.500 274.4L434.900 270.1L434.500 271.4L431.400 266.0L436.900 268.8L435.700 269.3L440.300 273.6zM452.400 274.4L447.500 270.0L447.100 271.3L443.900 266.0L449.500 268.7L448.300 269.2L453.200 273.6zM465.300 274.4L460.300 270.0L460.0 271.3L456.700 266.0L462.300 268.7L461.100 269.2L466.100 273.6zM478.100 274.4L473.400 270.1L473.100 271.4L469.900 266.0L475.500 268.8L474.200 269.2L478.900 273.6zM491.0 274.4L486.800 270.3L486.400 271.5L483.500 266.0L488.900 269.0L487.700 269.4L491.800 273.6zM503.800 274.4L500.400 270.5L499.900 271.7L497.300 266.0L502.600 269.3L501.300 269.7L504.700 273.6zM516.700 274.3L514.100 270.7L513.500 271.9L511.500 266.0L516.400 269.8L515.100 270.1L517.600 273.7zM529.500 274.3L527.800 271.1L527.0 272.1L525.800 266.0L530.200 270.5L528.800 270.5L530.500 273.7zM542.300 274.2L541.400 271.3L540.500 272.3L540.400 266.0L543.900 271.2L542.500 271.0L543.400 273.8zM555.200 274.1L554.900 271.4L553.800 272.1L555.0 266.0L557.300 271.8L556.100 271.3L556.300 273.9zM156.200 264.0L156.200 260.7L155.0 261.3L156.800 255.4L158.600 261.3L157.400 260.7L157.400 264.0zM169.100 263.9L169.800 260.5L168.500 260.8L171.400 255.4L172.0 261.6L170.900 260.7L170.200 264.1zM182.0 263.8L183.500 260.1L182.100 260.2L186.0 255.4L185.400 261.6L184.600 260.6L183.100 264.2zM194.900 263.7L197.200 259.7L195.900 259.6L200.500 255.4L199.0 261.4L198.300 260.3L195.900 264.3zM207.800 263.6L211.0 259.3L209.700 259.1L214.700 255.4L212.600 261.2L212.0 260.0L208.700 264.4zM220.700 263.6L224.700 259.0L223.400 258.7L228.700 255.4L226.100 261.0L225.600 259.8L221.600 264.4zM233.600 263.6L238.200 258.8L237.0 258.4L242.400 255.4L239.500 260.9L239.100 259.6L234.400 264.4zM246.500 263.6L251.500 258.7L250.200 258.2L255.700 255.4L252.700 260.8L252.300 259.5L247.300 264.4zM259.300 263.6L264.500 258.6L263.200 258.2L268.700 255.4L265.700 260.8L265.300 259.5L260.200 264.4zM272.200 263.6L277.100 258.7L275.900 258.3L281.400 255.4L278.400 260.8L278.0 259.6L273.0 264.4zM285.0 263.6L289.500 258.8L288.300 258.5L293.700 255.4L290.900 260.9L290.400 259.7L285.900 264.4zM297.900 263.6L301.700 259.1L300.400 258.8L305.600 255.4L303.200 261.1L302.600 259.8L298.800 264.4zM310.700 263.7L313.700 259.4L312.400 259.2L317.300 255.4L315.300 261.3L314.700 260.1L311.700 264.3zM323.600 263.7L325.700 259.8L324.300 259.8L328.700 255.4L327.500 261.5L326.700 260.4L324.600 264.3zM336.400 263.8L337.600 260.2L336.300 260.4L340.0 255.4L339.700 261.6L338.800 260.6L337.500 264.2zM349.200 263.9L349.700 260.6L348.500 261.0L351.100 255.4L352.0 261.5L350.900 260.8L350.400 264.1zM362.100 264.0L361.900 260.7L360.800 261.4L362.200 255.4L364.300 261.2L363.100 260.7L363.300 264.0zM375.0 264.2L374.100 260.7L373.100 261.6L373.300 255.4L376.500 260.7L375.200 260.4L376.100 263.8zM387.900 264.2L386.200 260.5L385.300 261.5L384.500 255.4L388.600 260.0L387.200 260.0L389.0 263.8zM400.800 264.3L398.200 260.2L397.500 261.3L395.800 255.4L400.500 259.4L399.200 259.6L401.800 263.7zM413.700 264.4L410.200 259.9L409.700 261.1L407.400 255.4L412.500 258.9L411.200 259.2L414.600 263.6zM426.600 264.4L422.400 259.7L421.900 261.0L419.200 255.4L424.500 258.6L423.300 258.9L427.500 263.6zM439.500 264.4L434.700 259.6L434.300 260.9L431.400 255.4L436.800 258.3L435.600 258.8L440.300 263.6zM452.400 264.4L447.300 259.5L446.900 260.8L443.900 255.4L449.400 258.2L448.100 258.7L453.200 263.6zM465.200 264.4L460.100 259.5L459.700 260.8L456.700 255.4L462.200 258.2L461.0 258.7L466.100 263.6zM478.100 264.4L473.300 259.6L472.900 260.8L469.900 255.4L475.400 258.3L474.100 258.7L479.0 263.6zM491.0 264.4L486.600 259.7L486.200 261.0L483.500 255.4L488.800 258.5L487.500 258.9L491.800 263.6zM503.800 264.4L500.200 259.9L499.700 261.1L497.300 255.4L502.400 258.9L501.100 259.2L504.700 263.6zM516.600 264.3L513.900 260.2L513.200 261.3L511.500 255.4L516.200 259.4L514.900 259.5L517.600 263.7zM529.500 264.3L527.600 260.4L526.800 261.5L525.800 255.4L530.0 259.9L528.700 259.9L530.500 263.7zM542.300 264.2L541.300 260.7L540.300 261.6L540.400 255.4L543.700 260.6L542.400 260.3L543.500 263.8zM555.200 264.1L554.900 260.8L553.700 261.4L555.0 255.4L557.300 261.1L556.100 260.7L556.300 263.9zM156.200 254.0L156.200 250.4L155.0 251.0L156.800 245.0L158.600 251.0L157.400 250.4L157.400 254.0zM169.100 253.9L169.800 250.2L168.500 250.5L171.400 245.0L172.0 251.2L171.0 250.4L170.200 254.1zM182.0 253.8L183.500 249.8L182.200 249.9L186.0 245.0L185.500 251.2L184.600 250.2L183.100 254.2zM194.900 253.7L197.300 249.4L196.0 249.3L200.500 245.0L199.100 251.1L198.300 250.0L195.900 254.3zM207.800 253.7L211.100 249.0L209.800 248.8L214.700 245.0L212.700 250.9L212.100 249.7L208.700 254.3zM220.700 253.6L224.800 248.7L223.500 248.4L228.700 245.0L226.200 250.7L225.700 249.5L221.600 254.4zM233.600 253.6L238.300 248.5L237.0 248.2L242.400 245.0L239.600 250.6L239.200 249.4L234.400 254.4zM246.400 253.6L251.500 248.4L250.300 248.0L255.700 245.0L252.800 250.5L252.400 249.3L247.300 254.4zM259.300 253.6L264.500 248.4L263.300 248.0L268.700 245.0L265.800 250.5L265.400 249.2L260.200 254.4zM272.200 253.6L277.200 248.5L275.900 248.0L281.400 245.0L278.500 250.5L278.0 249.3L273.0 254.4zM285.0 253.6L289.600 248.6L288.300 248.2L293.700 245.0L291.0 250.6L290.500 249.4L285.900 254.4zM297.900 253.6L301.800 248.8L300.500 248.5L305.600 245.0L303.300 250.8L302.700 249.6L298.800 254.4zM310.700 253.7L313.800 249.1L312.500 249.0L317.300 245.0L315.400 251.0L314.800 249.8L311.700 254.3zM323.600 253.7L325.700 249.5L324.400 249.5L328.700 245.0L327.600 251.1L326.800 250.1L324.600 254.3zM336.400 253.8L337.700 249.9L336.400 250.1L340.0 245.0L339.800 251.2L338.800 250.3L337.500 254.2zM349.200 253.9L349.800 250.3L348.500 250.7L351.100 245.0L352.0 251.2L350.900 250.4L350.400 254.1zM362.100 254.0L361.900 250.4L360.700 251.1L362.200 245.0L364.300 250.9L363.100 250.4L363.300 254.0zM375.0 254.1L374.0 250.4L373.0 251.2L373.300 245.0L376.500 250.4L375.200 250.1L376.100 253.9zM387.900 254.2L386.100 250.2L385.200 251.2L384.500 245.0L388.500 249.8L387.200 249.7L389.0 253.8zM400.800 254.3L398.100 249.9L397.400 251.0L395.800 245.0L400.400 249.2L399.100 249.3L401.800 253.7zM413.700 254.4L410.100 249.7L409.600 250.9L407.400 245.0L412.400 248.7L411.100 248.9L414.700 253.6zM426.600 254.4L422.300 249.5L421.800 250.7L419.200 245.0L424.500 248.3L423.200 248.7L427.500 253.6zM439.500 254.4L434.600 249.3L434.200 250.6L431.400 245.0L436.800 248.1L435.500 248.5L440.400 253.6zM452.400 254.4L447.200 249.3L446.800 250.5L443.900 245.0L449.300 248.0L448.100 248.4L453.200 253.6zM465.200 254.4L460.100 249.2L459.600 250.5L456.700 245.0L462.200 248.0L460.900 248.4L466.100 253.6zM478.100 254.4L473.200 249.3L472.700 250.6L469.900 245.0L475.300 248.1L474.100 248.5L479.0 253.6zM491.0 254.4L486.600 249.4L486.100 250.7L483.500 245.0L488.700 248.3L487.500 248.7L491.800 253.6zM503.800 254.4L500.100 249.6L499.600 250.8L497.300 245.0L502.400 248.6L501.100 248.9L504.700 253.6zM516.600 254.3L513.800 249.9L513.100 251.0L511.500 245.0L516.200 249.1L514.800 249.2L517.600 253.7zM529.500 254.3L527.600 250.1L526.700 251.2L525.800 245.0L530.0 249.7L528.600 249.6L530.500 253.7zM542.300 254.2L541.200 250.4L540.300 251.3L540.400 245.0L543.700 250.3L542.400 250.0L543.500 253.8zM555.200 254.0L554.900 250.4L553.700 251.1L555.0 245.0L557.300 250.8L556.0 250.3L556.300 254.0z"/><path fill="#000" d="M382.300 226.8L394.900 226.8L394.300 225.6L400.300 227.4L394.300 229.2L394.900 228.0L382.300 228.0z"/><path d="M157.500 581.5v-4.400M157.500 197.500v4.400M134.500 564.500h4.400M630.500 564.500h-4.400M221.500 581.5v-4.400M221.500 197.500v4.400M134.500 514.500h4.400M630.500 514.500h-4.400M285.500 581.5v-4.400M285.500 197.500v4.400M134.500 464.500h4.400M630.500 464.500h-4.400M350.500 581.5v-4.400M350.500 197.500v4.400M134.500 414.500h4.400M630.500 414.500h-4.400M414.500 581.5v-4.400M414.500 197.500v4.400M134.500 364.500h4.400M630.500 364.500h-4.400M479.500 581.5v-4.400M479.500 197.500v4.400M134.500 314.500h4.400M630.500 314.500h-4.400M543.500 581.5v-4.400M543.500 197.500v4.400M134.500 264.500h4.400M630.500 264.500h-4.400M607.500 581.5v-4.400M607.500 197.500v4.400M134.500 214.500h4.400M630.500 214.500h-4.400" stroke="#000" stroke-width=".6" fill="none"/><rect x="134.500" y="197.500" width="496" height="384" fill="none" stroke="#000" stroke-width="1.100"/></svg>
<span class="t" style="left:293.00px;top:172px;font-size:17.2px;line-height:20px;color:#000;letter-spacing:0.464px;">Vector figure example</span>
<span class="t b" style="left:334.00px;top:219px;font-size:14.2px;line-height:16px;color:#000;letter-spacing:1.044px;">2 m/s</span>
<span class="t" style="left:152.63px;top:583px;font-size:14.2px;line-height:16px;color:#000;letter-spacing:0.609px;">0</span>
<span class="t" style="left:120.80px;top:556px;font-size:14.2px;line-height:16px;color:#000;letter-spacing:0.609px;">0</span>
<span class="t" style="left:216.98px;top:583px;font-size:14.2px;line-height:16px;color:#000;letter-spacing:0.609px;">5</span>
<span class="t" style="left:120.80px;top:506px;font-size:14.2px;line-height:16px;color:#000;letter-spacing:0.609px;">5</span>
<span class="t" style="left:277.08px;top:583px;font-size:14.2px;line-height:16px;color:#000;letter-spacing:0.609px;">10</span>
<span class="t" style="left:112.30px;top:456px;font-size:14.2px;line-height:16px;color:#000;letter-spacing:0.609px;">10</span>
<span class="t" style="left:341.43px;top:583px;font-size:14.2px;line-height:16px;color:#000;letter-spacing:0.609px;">15</span>
<span class="t" style="left:112.30px;top:406px;font-size:14.2px;line-height:16px;color:#000;letter-spacing:0.609px;">15</span>
<span class="t" style="left:405.78px;top:583px;font-size:14.2px;line-height:16px;color:#000;letter-spacing:0.609px;">20</span>
<span class="t" style="left:112.30px;top:356px;font-size:14.2px;line-height:16px;color:#000;letter-spacing:0.609px;">20</span>
<span class="t" style="left:470.13px;top:583px;font-size:14.2px;line-height:16px;color:#000;letter-spacing:0.609px;">25</span>
<span class="t" style="left:112.30px;top:306px;font-size:14.2px;line-height:16px;color:#000;letter-spacing:0.609px;">25</span>
<span class="t" style="left:534.48px;top:583px;font-size:14.2px;line-height:16px;color:#000;letter-spacing:0.609px;">30</span>
<span class="t" style="left:112.30px;top:256px;font-size:14.2px;line-height:16px;color:#000;letter-spacing:0.609px;">30</span>
<span class="t" style="left:112.30px;top:206px;font-size:14.2px;line-height:16px;color:#000;letter-spacing:0.609px;">35</span>
<span class="t" style="left:598.70px;top:583px;font-size:14.2px;line-height:16px;color:#000;letter-spacing:0.609px;">35</span>
<div style="left:601px;top:336px;width:644px;height:574px;background:#fff;border:1px solid #000;border-left:2px solid #000;border-radius:6px 6px 0 0;"></div>
<div style="left:602px;top:337px;width:642px;height:26px;background:linear-gradient(#363636,#2b2b2b 30%,#1c1c1c 82%,#22314a 92%,#040404 97%,#000);border-radius:5px 5px 0 0;"></div>
<svg class="a" style="left:608px;top:342px;" width="16" height="16"><rect x=".5" y=".5" width="15" height="15" fill="#c3d8e0" stroke="#9eb1b8"/><path d="M1.300 7.800C2.300 5.500 2.800 1.600 3.800 1.600C5.300 1.600 5.300 14.300 6.800 14.300C8.300 14.300 8.300 1.600 9.800 1.600C11.300 1.600 11.300 14 12.800 14C13.800 14 14 10.500 14.700 9.700" fill="none" stroke="#e0901a" stroke-width="1.400" stroke-linecap="round"/></svg>
<span class="t b" style="left:868.25px;top:342px;font-size:14.3px;line-height:16px;color:#ffffff;letter-spacing:0.859px;">Figure 2</span>
<svg class="a" style="left:1179px;top:351.8px;" width="9" height="3"><rect x="0" y="0" width="8" height="2.300" fill="#ededed"/></svg>
<svg class="a" style="left:1202px;top:346px;" width="9" height="9"><rect x=".6" y=".6" width="6.800" height="6.500" fill="none" stroke="#ededed" stroke-width="1.200"/><rect x="0" y="0" width="8" height="2" fill="#ededed"/></svg>
<svg class="a" style="left:1224.5px;top:346px;" width="9" height="9"><path d="M1 1L8 8M8 1L1 8" stroke="#ededed" stroke-width="2.100" fill="none"/></svg>
<div style="left:603px;top:363px;width:641px;height:41px;background:linear-gradient(#f7f7f6,#f2f1f0 40%,#e6e5e3);border-top:1px solid #fdfdfc;border-bottom:1px solid #fdfdfc;"></div>
<div style="left:603px;top:402px;width:641px;height:1px;background:#c4c3c0;"></div>
<svg class="a" style="left:606px;top:375px;" width="6" height="18"><g fill="#b5b4b1"><rect x="1" y="0" width="1" height="1"/><rect x="1" y="3" width="1" height="1"/><rect x="1" y="6" width="1" height="1"/><rect x="1" y="9" width="1" height="1"/><rect x="1" y="12" width="1" height="1"/><rect x="1" y="15" width="1" height="1"/><rect x="4" y="0" width="1" height="1"/><rect x="4" y="3" width="1" height="1"/><rect x="4" y="6" width="1" height="1"/><rect x="4" y="9" width="1" height="1"/><rect x="4" y="12" width="1" height="1"/><rect x="4" y="15" width="1" height="1"/></g></svg>
<svg class="a" style="left:620px;top:371px;" width="24" height="24"><defs><linearGradient id="hd" x1="0" y1="0" x2="0" y2="1"><stop offset="0" stop-color="#fbd35a"/><stop offset="1" stop-color="#f0a020"/></linearGradient>
<linearGradient id="hw" x1="0" y1="0" x2="1" y2="0"><stop offset="0" stop-color="#ffffff"/><stop offset="1" stop-color="#d4d7d9"/></linearGradient></defs>
<rect x="5.500" y="2" width="3" height="5" fill="#f0a828" stroke="#b8741a" stroke-width=".6"/>
<path d="M4.800 11.500V22.500H18.800V11.500L11.800 4.500z" fill="url(#hw)" stroke="#9aa0a3" stroke-width=".9"/>
<path d="M8.500 22V14C8.500 10.500 15 10.500 15 14V22z" fill="url(#hd)" stroke="#c26a10" stroke-width=".9"/>
<path d="M1.300 12.200L11.800 1.700L22.300 12.200L20.800 13.600L11.800 4.800L2.800 13.600z" fill="#c0304a" stroke="#8e1f35" stroke-width=".7"/></svg>
<svg class="a" style="left:0;top:0" width="1280" height="1024"><defs><radialGradient id="nb668" cx=".42" cy=".3" r=".75"><stop offset="0" stop-color="#3fd0e2"/><stop offset=".45" stop-color="#1a93ab"/><stop offset="1" stop-color="#0e5f78"/></radialGradient></defs>
<circle cx="668" cy="383" r="10.600" fill="url(#nb668)" stroke="#0f6a84" stroke-width=".8"/><path transform="translate(668,383)" d="M-6.200 0L-.5 -5.300V-2.300H5.200V2.300H-.5V5.300z" fill="#c9e8ee" stroke="#8fcad6" stroke-width=".5"/></svg>
<svg class="a" style="left:0;top:0" width="1280" height="1024"><defs><radialGradient id="nf703.7" cx=".42" cy=".3" r=".75"><stop offset="0" stop-color="#3fd0e2"/><stop offset=".45" stop-color="#1a93ab"/><stop offset="1" stop-color="#0e5f78"/></radialGradient></defs>
<circle cx="703.7" cy="383" r="10.600" fill="url(#nf703.7)" stroke="#0f6a84" stroke-width=".8"/><path transform="translate(703.7,383) scale(-1,1)" d="M-6.200 0L-.5 -5.300V-2.300H5.200V2.300H-.5V5.300z" fill="#c9e8ee" stroke="#8fcad6" stroke-width=".5"/></svg>
<div style="left:727px;top:371px;width:1px;height:25px;background:#b9b8b5;"></div>
<div style="left:728px;top:371px;width:1px;height:25px;background:#fbfbfa;"></div>
<svg class="a" style="left:739px;top:372px;" width="24" height="24"><path d="M12.200 .3L15.800 5H13.500V10.500H19V8.200L23.700 11.800L19 15.400V13.100H13.500V18.600H15.800L12.200 23.300L8.600 18.600H10.900V13.100H5.400V15.400L.7 11.800L5.400 8.200V10.500H10.900V5H8.600z" fill="#19607f"/></svg>
<svg class="a" style="left:775px;top:372px;" width="26" height="22"><rect x="4.500" y="7.500" width="18" height="12.500" fill="#fbfdfe" stroke="#8fc5cf" stroke-width="1"/>
<path d="M12.500 10L21 1.800L23.200 4L15 12z" fill="#f0a030" stroke="#c87c18" stroke-width=".6"/>
<circle cx="8.500" cy="11.500" r="7.300" fill="#b5dce4" fill-opacity=".85" stroke="#9fcdd6" stroke-width=".8"/>
<path d="M5.500 8.800H12M5.500 11H12M5.500 13.200H12M5.500 15.400H10.500" stroke="#3f97a8" stroke-width="1.100"/></svg>
<div style="left:810px;top:371px;width:1px;height:25px;background:#b9b8b5;"></div>
<div style="left:811px;top:371px;width:1px;height:25px;background:#fbfbfa;"></div>
<svg class="a" style="left:823px;top:372px;" width="24" height="23"><rect x="2" y="2" width="18" height="18.500" rx="1.500" fill="#fff" stroke="#111" stroke-width="1.200"/>
<rect x="4.500" y="4.500" width="13" height="13.500" fill="#7fb0e8"/><rect x="4.500" y="13" width="13" height="5" fill="#c5dcf5"/>
<rect x="6.800" y="7.200" width="8.500" height="8" rx="1.300" fill="#fff" stroke="#111" stroke-width="1.200"/><rect x="7.400" y="7.800" width="7.300" height="2.300" fill="#8d949c"/><rect x="10" y="7.800" width="1.800" height="2.300" fill="#5a7fd0"/>
<path d="M11 .2L14 3.400H8zM11 22.500L14 19.300H8zM.2 11.200L3.400 8.200V14.200zM22 11.200L18.800 8.200V14.200z" fill="#35c540" stroke="#1d8f28" stroke-width=".5"/></svg>
<svg class="a" style="left:860px;top:373px;" width="20" height="20"><defs><linearGradient id="sv" x1="0" y1="0" x2="0" y2="1"><stop offset="0" stop-color="#2e7ea3"/><stop offset="1" stop-color="#1d5f80"/></linearGradient></defs>
<path d="M1.800 .8H17.200C18 .8 18.600 1.400 18.600 2.200V17C18.600 17.800 18 18.400 17.200 18.400H2.600L.8 16.600V2.200C.8 1.400 1 .8 1.800 .8z" fill="url(#sv)" stroke="#1a5575" stroke-width=".7"/>
<rect x="4" y="1.200" width="11.500" height="1.300" fill="#e8a060"/><rect x="4" y="2.500" width="11.500" height="6" fill="#6fa5bf"/><path d="M6.500 4.200H14M6.500 6H14" stroke="#2c6f8d" stroke-width=".9"/>
<rect x="5.500" y="12" width="8.800" height="6" fill="#9fb9c6"/><rect x="6.800" y="12.800" width="2.300" height="4.600" fill="#1d4f68"/></svg>
<div style="left:604px;top:404px;width:640px;height:480px;background:#bfbfbf;"></div>
<div style="left:603px;top:885px;width:641px;height:24px;background:#edeceb;"></div>
<svg class="a" style="left:1228px;top:893px;" width="14" height="14"><g><rect x="10" y="10" width="1" height="1" fill="#9b9a97"/><rect x="11" y="11" width="1" height="1" fill="#fff"/><rect x="10" y="7" width="1" height="1" fill="#9b9a97"/><rect x="11" y="8" width="1" height="1" fill="#fff"/><rect x="10" y="4" width="1" height="1" fill="#9b9a97"/><rect x="11" y="5" width="1" height="1" fill="#fff"/><rect x="10" y="1" width="1" height="1" fill="#9b9a97"/><rect x="11" y="2" width="1" height="1" fill="#fff"/><rect x="7" y="10" width="1" height="1" fill="#9b9a97"/><rect x="8" y="11" width="1" height="1" fill="#fff"/><rect x="7" y="7" width="1" height="1" fill="#9b9a97"/><rect x="8" y="8" width="1" height="1" fill="#fff"/><rect x="7" y="4" width="1" height="1" fill="#9b9a97"/><rect x="8" y="5" width="1" height="1" fill="#fff"/><rect x="4" y="10" width="1" height="1" fill="#9b9a97"/><rect x="5" y="11" width="1" height="1" fill="#fff"/><rect x="4" y="7" width="1" height="1" fill="#9b9a97"/><rect x="5" y="8" width="1" height="1" fill="#fff"/><rect x="1" y="10" width="1" height="1" fill="#9b9a97"/><rect x="2" y="11" width="1" height="1" fill="#fff"/></g></svg>
<svg class="a" style="left:0;top:0" width="1280" height="920"><rect x="683" y="452" width="496" height="384" fill="#fff"/><path d="M782.5 452v384M881.5 452v384M981.5 452v384M1080.5 452v384M683 547.5h496M683 643.5h496M683 739.5h496" stroke="#000" stroke-width=".6" stroke-dasharray="1.100 3.300" fill="none"/><clipPath id="c2"><rect x="683" y="452" width="496" height="384"/></clipPath><path clip-path="url(#c2)" d="M683.0 451.5L688.0 453.0L692.9 457.5L697.9 465.0L702.8 475.2L707.8 488.2L712.8 503.5L717.7 521.1L722.7 540.6L727.6 561.8L732.6 584.2L737.6 607.5L742.5 631.4L747.5 655.6L752.4 679.5L757.4 702.8L762.4 725.2L767.3 746.4L772.3 765.9L777.2 783.5L782.2 798.8L787.2 811.8L792.1 822.0L797.1 829.5L802.0 834.0L807.0 835.5L812.0 834.0L816.9 829.5L821.9 822.0L826.8 811.8L831.8 798.8L836.8 783.5L841.7 765.9L846.7 746.4L851.6 725.2L856.6 702.8L861.6 679.5L866.5 655.6L871.5 631.4L876.4 607.5L881.4 584.2L886.4 561.8L891.3 540.6L896.3 521.1L901.2 503.5L906.2 488.2L911.2 475.2L916.1 465.0L921.1 457.5L926.0 453.0L931.0 451.5L936.0 453.0L940.9 457.5L945.9 465.0L950.8 475.2L955.8 488.2L960.8 503.5L965.7 521.1L970.7 540.6L975.6 561.8L980.6 584.2L985.6 607.5L990.5 631.4L995.5 655.6L1000.4 679.5L1005.4 702.8L1010.4 725.2L1015.3 746.4L1020.3 765.9L1025.2 783.5L1030.2 798.8L1035.2 811.8L1040.1 822.0L1045.1 829.5L1050.0 834.0L1055.0 835.5L1060.0 834.0L1064.9 829.5L1069.9 822.0L1074.8 811.8L1079.8 798.8L1084.8 783.5L1089.7 765.9L1094.7 746.4L1099.6 725.2L1104.6 702.8L1109.6 679.5L1114.5 655.6L1119.5 631.4L1124.4 607.5L1129.4 584.2L1134.4 561.8L1139.3 540.6L1144.3 521.1L1149.2 503.5L1154.2 488.2L1159.2 475.2L1164.1 465.0L1169.1 457.5L1174.0 453.0L1179.0 451.5" stroke="#0000ff" stroke-width="2.250" fill="none" stroke-linejoin="round"/><path d="M683.50 835.5v-4.400M683.50 451.5v4.400M782.50 835.5v-4.400M782.50 451.5v4.400M881.50 835.5v-4.400M881.50 451.5v4.400M981.50 835.5v-4.400M981.50 451.5v4.400M1080.50 835.5v-4.400M1080.50 451.5v4.400M1179.50 835.5v-4.400M1179.50 451.5v4.400M683 451.50h4.400M1179 451.50h-4.400M683 547.50h4.400M1179 547.50h-4.400M683 643.50h4.400M1179 643.50h-4.400M683 739.50h4.400M1179 739.50h-4.400M683 835.50h4.400M1179 835.50h-4.400" stroke="#000" stroke-width=".6" fill="none"/><rect x="683.5" y="451.500" width="496" height="384" fill="none" stroke="#000" stroke-width="1.100"/></svg>
<span class="t" style="left:875.05px;top:429px;font-size:17.2px;line-height:20px;color:#000;letter-spacing:0.495px;">About M2 tide</span>
<span class="t" style="left:905.00px;top:852px;font-size:14.2px;line-height:16px;color:#000;letter-spacing:0.588px;">time (s)</span>
<span class="t" style="left:672.00px;top:836px;font-size:14.2px;line-height:16px;color:#000;letter-spacing:0.422px;">0.0</span>
<span class="t" style="left:771.20px;top:836px;font-size:14.2px;line-height:16px;color:#000;letter-spacing:0.422px;">0.2</span>
<span class="t" style="left:870.40px;top:836px;font-size:14.2px;line-height:16px;color:#000;letter-spacing:0.422px;">0.4</span>
<span class="t" style="left:969.60px;top:836px;font-size:14.2px;line-height:16px;color:#000;letter-spacing:0.422px;">0.6</span>
<span class="t" style="left:1068.80px;top:836px;font-size:14.2px;line-height:16px;color:#000;letter-spacing:0.422px;">0.8</span>
<span class="t" style="left:1168.00px;top:836px;font-size:14.2px;line-height:16px;color:#000;letter-spacing:0.422px;">1.0</span>
<span class="t" style="left:658.20px;top:444px;font-size:14.2px;line-height:16px;color:#000;letter-spacing:0.189px;">1.0</span>
<span class="t" style="left:658.20px;top:540px;font-size:14.2px;line-height:16px;color:#000;letter-spacing:0.189px;">0.5</span>
<span class="t" style="left:658.20px;top:636px;font-size:14.2px;line-height:16px;color:#000;letter-spacing:0.189px;">0.0</span>
<span class="t" style="left:646.50px;top:732px;font-size:14.2px;line-height:16px;color:#000;letter-spacing:0.996px;">−0.5</span>
<span class="t" style="left:646.50px;top:828px;font-size:14.2px;line-height:16px;color:#000;letter-spacing:0.996px;">−1.0</span>
<span class="t" style="transform-origin:53px 10px;transform:rotate(-90deg);left:583.30px;top:632.5px;font-size:14.2px;line-height:16px;color:#000;letter-spacing:0.760px;">tidal height (m)</span>
<svg class="a" style="left:945px;top:350px;" width="14" height="22"><path d="M1 1V17.200L4.800 13.600L7.600 20.200L10.200 19.100L7.400 12.600H12.500z" fill="#111" stroke="#fff" stroke-width="1.100" stroke-linejoin="round"/></svg>
</div>
</body></html>
